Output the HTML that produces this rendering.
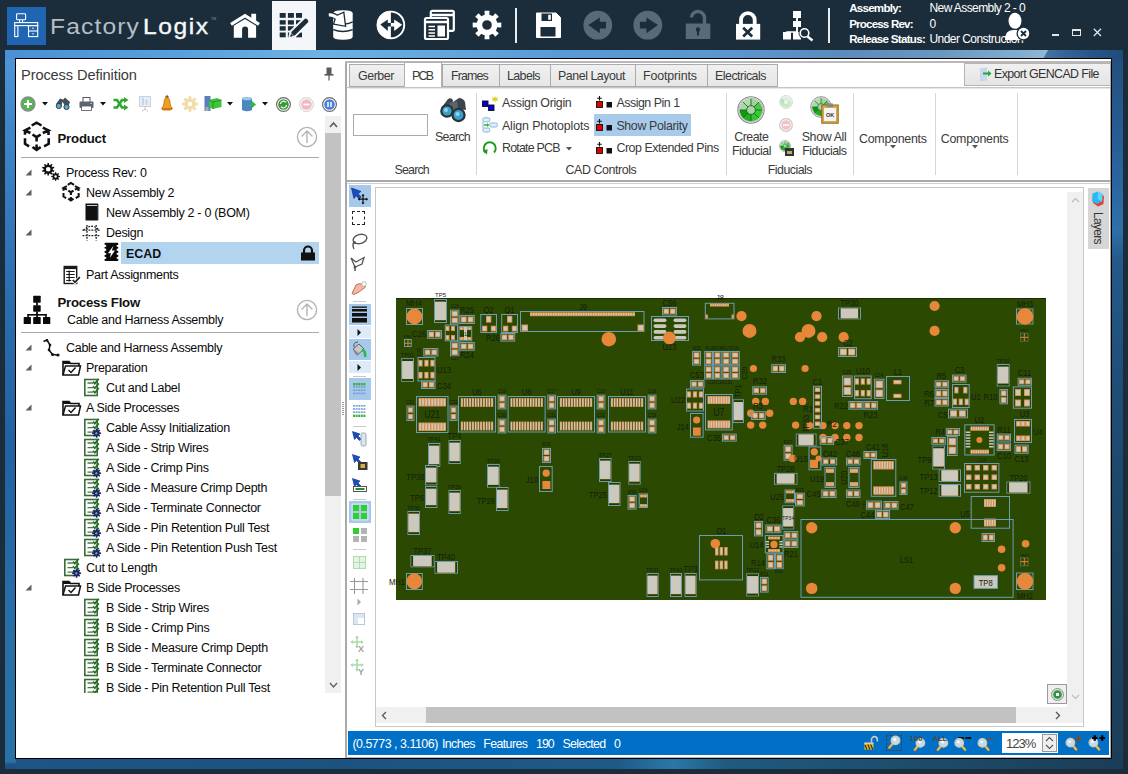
<!DOCTYPE html>
<html><head><meta charset="utf-8"><style>
*{margin:0;padding:0;box-sizing:border-box}
html,body{width:1128px;height:774px;overflow:hidden;background:#1b2d3b;font-family:"Liberation Sans",sans-serif;position:relative}
.a{position:absolute}
.t{position:absolute;white-space:nowrap;line-height:1}
svg{overflow:visible}
</style></head><body>
<div class="a" style="left:7px;top:7px;width:39px;height:38px;background:#1f65b2"></div>
<svg class="a" style="left:7px;top:7px" width="39" height="38" viewBox="0 0 39 38">
<g fill="none" stroke="#fff" stroke-width="1.1">
<rect x="9.6" y="6.7" width="9" height="6" rx="0.8"/>
<path d="M12.6 12.7v2.6M15.6 12.7v2.6"/>
<rect x="7.7" y="15.6" width="23" height="3"/>
<rect x="7.7" y="18.6" width="3.2" height="11"/>
<rect x="21.5" y="18.6" width="9.2" height="11"/>
<path d="M21.5 24h9.2"/>
</g>
<path d="M25 21.2h2M25 26.8h2" stroke="#cde" stroke-width="1"/>
</svg>
<div class="t" style="left:49.5px;top:16px;font-size:21.8px;color:#b4bec6;transform:scaleX(1.13);transform-origin:0 0;letter-spacing:1.0px">Factory</div>
<div class="t" style="left:143px;top:16px;font-size:21.8px;color:#f6f8fa;transform:scaleX(1.13);transform-origin:0 0;letter-spacing:1.35px;-webkit-text-stroke:0.35px #f6f8fa">Logix</div>
<div class="t" style="left:211px;top:18px;font-size:3.5px;color:#8a98a4">TM</div>
<div class="a" style="left:272px;top:1px;width:44px;height:49px;background:#f5f6f9"></div>
<svg class="a" style="left:229px;top:12px" width="32" height="28" viewBox="0 0 32 28">
<path d="M2 12.3 L16 3.6 L30 12.3" fill="none" stroke="#1b2d3b" stroke-width="6"/>
<path d="M22.3 1.8 H27.1 V10 L22.3 7.5 Z" fill="#fff"/>
<path d="M2 12.3 L16 3.6 L30 12.3" fill="none" stroke="#fff" stroke-width="3.3"/>
<path d="M4.8 25.7 V13.8 L16 6.9 L27.1 13.8 V25.7 H19.1 V17.5 A3 3 0 0 0 13.1 17.5 V25.7 Z" fill="#fff"/>
</svg>
<svg class="a" style="left:279px;top:12px" width="31" height="27" viewBox="0 0 31 27">
<rect x="0.7" y="1" width="6" height="4.8" fill="#1b2d3b"/><rect x="8.9" y="1" width="6" height="4.8" fill="#1b2d3b"/><rect x="17.0" y="1" width="6" height="4.8" fill="#1b2d3b"/><rect x="0.7" y="8.2" width="6" height="4.4" fill="#1b2d3b"/><rect x="8.9" y="8.2" width="6" height="4.4" fill="#1b2d3b"/><rect x="17.0" y="8.2" width="6" height="4.4" fill="#1b2d3b"/><rect x="0.7" y="14.2" width="6" height="4.4" fill="#1b2d3b"/><rect x="8.9" y="14.2" width="6" height="4.4" fill="#1b2d3b"/><rect x="17.0" y="14.2" width="6" height="4.4" fill="#1b2d3b"/><rect x="0.7" y="20.5" width="6" height="4.8" fill="#1b2d3b"/><rect x="8.9" y="20.5" width="6" height="4.8" fill="#1b2d3b"/><rect x="17.0" y="20.5" width="6" height="4.8" fill="#1b2d3b"/>
<path d="M11 24.9 L12.2 19.6 L26 6.5 L29.6 10.2 L16 23.5 Z" fill="#f5f6f9" stroke="#f5f6f9" stroke-width="3.2" stroke-linejoin="round"/>
<path d="M11 24.9 L12.6 19.8 L25.4 7.2 Q26.8 6 28 7.2 L28.8 8 Q30 9.3 28.8 10.5 L16 23.2 Z" fill="#1b2d3b"/>
<path d="M12.2 21.5 L14.4 23.7" stroke="#f5f6f9" stroke-width="0.8"/>
</svg>
<svg class="a" style="left:328px;top:9px" width="27" height="32" viewBox="0 0 27 32">
<path d="M5.2 4.2 Q5.2 1.2 15 1.2 Q24.7 1.2 24.7 4.2 V27.8 Q24.7 30.8 15 30.8 Q5.2 30.8 5.2 27.8 Z" fill="#fff"/>
<path d="M5.2 20.6 Q15 24.2 24.7 20.6" fill="none" stroke="#1b2d3b" stroke-width="1.5"/>
<path d="M17 15 Q21 14.6 24.7 12.8" fill="none" stroke="#1b2d3b" stroke-width="1.4"/>
<path d="M1.2 5.8 Q6 5.5 10.5 10" fill="none" stroke="#1b2d3b" stroke-width="5.6"/>
<path d="M5.5 15.2 L17.6 17.3 L15.8 3.2 L8.2 6.6 Z" fill="#fff" stroke="#1b2d3b" stroke-width="1.3" stroke-linejoin="miter"/>
<path d="M0.8 5.8 Q6 5.5 10.2 9.8" fill="none" stroke="#fff" stroke-width="3.2"/>
</svg>
<svg class="a" style="left:375px;top:9px" width="32" height="32" viewBox="0 0 32 32">
<path d="M15.9 1.8 A14.15 14.15 0 0 0 15.9 30.1 Z" fill="#fff"/>
<circle cx="15.9" cy="15.95" r="13.3" fill="none" stroke="#fff" stroke-width="1.9"/>
<path d="M5.3 15.6 L12.8 10.4 V14 H15.9 V17.5 H12.8 V21.9 Z" fill="#1b2d3b"/>
<path d="M27.2 15.8 L19.2 10.4 V14 H15.9 V17.5 H19.2 V21.9 Z" fill="#fff"/>
</svg>
<svg class="a" style="left:424px;top:10px" width="31" height="30" viewBox="0 0 31 30">
<rect x="6.8" y="0.8" width="23" height="20" rx="1.5" fill="none" stroke="#fff" stroke-width="2.2"/>
<path d="M6 5 H30" stroke="#fff" stroke-width="2.5"/>
<rect x="1" y="8" width="23" height="21" rx="1.5" fill="#1b2d3b" stroke="#fff" stroke-width="2.2"/>
<path d="M1 12 H24" stroke="#fff" stroke-width="2.5"/>
<path d="M4.5 16.5h6.5M4.5 19.8h6.5M4.5 23h6.5M4.5 26h6.5" stroke="#fff" stroke-width="1.5"/>
<rect x="13.5" y="15.5" width="7.5" height="11" fill="#fff"/>
</svg>
<svg class="a" style="left:472px;top:10px" width="30" height="30" viewBox="0 0 30 30">
<path fill-rule="evenodd" d="M12.71,4.75 L12.55,0.71 L17.45,0.71 L17.29,4.75 L20.03,5.79 L20.63,6.13 L23.37,3.16 L26.84,6.63 L23.87,9.37 L25.08,12.04 L25.25,12.71 L29.29,12.55 L29.29,17.45 L25.25,17.29 L24.21,20.03 L23.87,20.63 L26.84,23.37 L23.37,26.84 L20.63,23.87 L17.96,25.08 L17.29,25.25 L17.45,29.29 L12.55,29.29 L12.71,25.25 L9.97,24.21 L9.37,23.87 L6.63,26.84 L3.16,23.37 L6.13,20.63 L4.92,17.96 L4.75,17.29 L0.71,17.45 L0.71,12.55 L4.75,12.71 L5.79,9.97 L6.13,9.37 L3.16,6.63 L6.63,3.16 L9.37,6.13 L12.04,4.92 Z M15 10.2 A4.8 4.8 0 1 0 15 19.8 A4.8 4.8 0 1 0 15 10.2 Z" fill="#fff"/>
</svg>
<div class="a" style="left:515px;top:8px;width:1.5px;height:35px;background:#e8ecef"></div>
<div class="a" style="left:828px;top:8px;width:1.5px;height:35px;background:#e8ecef"></div>
<svg class="a" style="left:535px;top:12px" width="27" height="27" viewBox="0 0 27 27">
<path d="M1.5 1 H21 L25.5 5.5 V25.5 H1.5 Z" fill="#fff" stroke="#fff" stroke-linejoin="round"/>
<rect x="6.5" y="1.5" width="10.5" height="7.5" fill="#1b2d3b"/>
<rect x="13.2" y="2.8" width="2.6" height="5" fill="#fff"/>
<rect x="5.5" y="15" width="15" height="9.5" fill="#1b2d3b"/>
</svg>
<svg class="a" style="left:583px;top:10px" width="30" height="30" viewBox="0 0 30 30">
<circle cx="14.8" cy="15.2" r="14.4" fill="#576a75"/>
<path d="M5.4 15 L16.8 7.4 V11.8 H23 V18.6 H16.8 V23.3 Z" fill="#1b2d3b"/>
</svg>
<svg class="a" style="left:633px;top:10px" width="30" height="30" viewBox="0 0 30 30">
<circle cx="14.8" cy="15.2" r="14.4" fill="#576a75"/>
<path d="M24.9 15 L13.4 7.4 V11.8 H6.9 V18.6 H13.4 V23.3 Z" fill="#1b2d3b"/>
</svg>
<svg class="a" style="left:685px;top:10px" width="26" height="30" viewBox="0 0 26 30">
<path d="M6.3 7.5 A6.6 6.6 0 0 1 19.5 8.8 V14" fill="none" stroke="#576a75" stroke-width="3.4"/>
<rect x="0.8" y="13.5" width="24.5" height="15.5" fill="#576a75"/>
<circle cx="13" cy="19.5" r="2.2" fill="#1b2d3b"/>
<rect x="12" y="20" width="2" height="5.5" fill="#1b2d3b"/>
</svg>
<svg class="a" style="left:735px;top:10px" width="27" height="30" viewBox="0 0 27 30">
<path d="M6 14.5 V10.05 A6.85 6.85 0 0 1 19.7 10.05 V14.5" fill="none" stroke="#fff" stroke-width="3.8"/>
<rect x="1" y="13.9" width="24.2" height="15.7" fill="#fff"/>
<path d="M8.2 17.8 L17.2 26.4 M17.2 17.8 L8.2 26.4" stroke="#1b2d3b" stroke-width="2.7"/>
</svg>
<svg class="a" style="left:782px;top:10px" width="33" height="32" viewBox="0 0 33 32">
<rect x="11" y="1" width="8" height="7" fill="#fff"/>
<rect x="14" y="8" width="2" height="3" fill="#fff"/>
<rect x="11" y="11" width="8" height="6" fill="#fff"/>
<rect x="14" y="17" width="2" height="5" fill="#fff"/>
<path d="M5 24 V22 H15" fill="none" stroke="#fff" stroke-width="1.5"/>
<rect x="1" y="22" width="8" height="7.5" fill="#fff"/>
<rect x="11" y="22" width="8" height="7.5" fill="#fff"/>
<circle cx="22.5" cy="23" r="6" fill="#1b2d3b"/>
<circle cx="22.5" cy="23" r="4.3" fill="none" stroke="#fff" stroke-width="1.6"/>
<path d="M25.5 26.5 L30.5 30.5" stroke="#fff" stroke-width="2.4"/>
</svg>
<div class="t" style="left:849.2px;top:2.00px;font-size:11.6px;color:#fff;font-weight:bold;letter-spacing:-0.760px;">Assembly:</div>
<div class="t" style="left:849.2px;top:18.00px;font-size:11.6px;color:#fff;font-weight:bold;letter-spacing:-0.831px;">Process Rev:</div>
<div class="t" style="left:849.2px;top:33.00px;font-size:11.6px;color:#fff;font-weight:bold;letter-spacing:-0.690px;">Release Status:</div>
<div class="t" style="left:929.5px;top:2.00px;font-size:12px;color:#fff;letter-spacing:-0.585px;">New Assembly 2 - 0</div>
<div class="t" style="left:929.5px;top:18.00px;font-size:12px;color:#fff;">0</div>
<div class="t" style="left:929.5px;top:33.00px;font-size:12px;color:#fff;letter-spacing:-0.549px;">Under Construction</div>
<svg class="a" style="left:1000px;top:11.3px" width="32" height="32" viewBox="0 0 32 32">
<ellipse cx="15" cy="9.8" rx="6.5" ry="8" fill="#fff"/>
<path d="M5 29 Q5 19 13 19 L17 19 Q21 19 22 25 L22 29 Z" fill="#fff"/>
<circle cx="23.5" cy="22.5" r="7" fill="#1b2d3b"/>
<circle cx="23.5" cy="22.5" r="5.7" fill="#fff"/>
<path d="M21 20 L26 25 M26 20 L21 25" stroke="#1b2d3b" stroke-width="1.8"/>
</svg>
<div class="a" style="left:1052px;top:34px;width:7px;height:2px;background:#e4e4e4"></div>
<div class="a" style="left:1072px;top:29px;width:9px;height:7px;border:1.2px solid #e4e4e4;border-top-width:2px"></div>
<svg class="a" style="left:1093px;top:28px" width="9" height="9" viewBox="0 0 9 9"><path d="M0.8 0.8 L8 8 M8 0.8 L0.8 8" stroke="#e4e4e4" stroke-width="1.3"/></svg>
<div class="a" style="left:5px;top:50px;width:11px;height:719px;background:linear-gradient(180deg,#4f97da 0px,#3f86c9 80px,#2b6cad 250px,#2262a2 400px,#286ea6 560px,#2a72a6 712px,#1d5586 714px,#1b5080 719px)"></div>
<div class="a" style="left:5px;top:50px;width:1118px;height:9px;background:linear-gradient(90deg,#4a90d6 0%,#58a0dc 15%,#6cb2e4 28%,#62a6dc 40%,#5a9ad6 50%,#5c96cc 65%,#5a8cbc 75%,#6a98c2 84%,#84aed0 91%,#92bad8 93.5%)"></div>
<div class="a" style="left:1040px;top:50px;width:83px;height:9px;clip-path:polygon(8px 0,83px 0,83px 9px,3px 9px);background:linear-gradient(90deg,#4a76a6 0%,#356596 30%,#285688 60%,#204c7c 100%)"></div>
<div class="a" style="left:1111px;top:59px;width:12px;height:710px;background:linear-gradient(180deg,#22507e 0px,#2a64a0 120px,#2e70aa 170px,#235a8a 200px,#1f4e78 320px,#1c4462 500px,#1b3e58 710px)"></div>
<div class="a" style="left:16px;top:759px;width:1095px;height:10px;background:linear-gradient(90deg,#1d5586 0%,#1c5280 30%,#1e5a88 55%,#2a78a8 60%,#1f5a80 65%,#1c4a68 85%,#1b3e58 100%)"></div>
<div class="a" style="left:15px;top:58px;width:1097px;height:701px;background:#fff;border:1px solid #000"></div>
<div class="t" style="left:21px;top:68.0px;font-size:14.6px;color:#3a3a3a;letter-spacing:-0.1px">Process Definition</div>
<svg class="a" style="left:324px;top:67px" width="10" height="14" viewBox="0 0 10 14">
<rect x="2.5" y="0.5" width="5" height="7" fill="#5a5a5a"/>
<rect x="0.5" y="7" width="9" height="1.6" fill="#5a5a5a"/>
<rect x="4.4" y="8" width="1.2" height="5.5" fill="#5a5a5a"/>
</svg>
<svg class="a" style="left:20px;top:96px" width="16" height="16" viewBox="0 0 16 16">
<circle cx="8" cy="8" r="7" fill="#55b455" stroke="#8a8a8a" stroke-width="1.3"/>
<path d="M8 4 V12 M4 8 H12" stroke="#fff" stroke-width="2.2"/></svg>
<svg class="a" style="left:42px;top:102px" width="6" height="4" viewBox="0 0 6 4"><path d="M0 0H6L3 3.5Z" fill="#111"/></svg>
<svg class="a" style="left:55px;top:97px" width="16" height="13" viewBox="0 0 16 13">
<path d="M1 7 L5 1.5 L8 2.5 L6 10 Z M7 4 L10 0.5 L15 5 L12 12 Z" fill="#44505a"/>
<circle cx="3.8" cy="9" r="2.6" fill="#5aa8d8" stroke="#333" stroke-width="0.9"/>
<circle cx="11.5" cy="10" r="2.6" fill="#5aa8d8" stroke="#333" stroke-width="0.9"/>
</svg>
<svg class="a" style="left:79px;top:97px" width="15" height="14" viewBox="0 0 15 14">
<rect x="4" y="0.5" width="7" height="5" fill="#fff" stroke="#555"/>
<rect x="0.5" y="4.5" width="14" height="6.5" rx="1" fill="#5c6670"/>
<rect x="2.5" y="9" width="10" height="4.5" fill="#fff" stroke="#555" stroke-width="0.8"/>
<rect x="11" y="6" width="2" height="1" fill="#6cf"/>
</svg>
<svg class="a" style="left:100px;top:102px" width="6" height="4" viewBox="0 0 6 4"><path d="M0 0H6L3 3.5Z" fill="#111"/></svg>
<svg class="a" style="left:113px;top:97px" width="16" height="14" viewBox="0 0 16 14">
<path d="M0.5 3 H4 L9 10.5 H12" fill="none" stroke="#2ea82e" stroke-width="2.6"/>
<path d="M0.5 10.5 H4 L9 3 H12" fill="none" stroke="#2ea82e" stroke-width="2.6"/>
<path d="M11 0 L15.5 3 L11 6Z M11 7.5 L15.5 10.5 L11 13.5Z" fill="#2ea82e"/>
</svg>
<svg class="a" style="left:139px;top:96px" width="12" height="16" viewBox="0 0 12 16">
<rect x="0.5" y="0.5" width="11" height="10" fill="#e8eef6" stroke="#c6d2de"/>
<rect x="3" y="2" width="2" height="7" fill="#c6d6e8"/><rect x="6.5" y="3.5" width="2" height="5.5" fill="#c6d6e8"/>
<path d="M6 10.5 V13 M6 13 L3 15.5 M6 13 L9 15.5" stroke="#c6c6c6" stroke-width="1"/>
</svg>
<svg class="a" style="left:161px;top:95px" width="12" height="16" viewBox="0 0 12 16">
<circle cx="6" cy="2" r="1.7" fill="#9a5a10"/>
<path d="M6 2.5 Q3 3 3 8 Q3 11.5 0.5 13.5 H11.5 Q9 11.5 9 8 Q9 3 6 2.5Z" fill="#f0a020" stroke="#b86a10" stroke-width="0.8"/>
<ellipse cx="6" cy="14.3" rx="5.3" ry="1.3" fill="#d07810"/>
</svg>
<svg class="a" style="left:182px;top:95.5px" width="16" height="16" viewBox="0 0 16 16"><path fill-rule="evenodd" d="M6.37,2.75 L6.80,0.09 L9.20,0.09 L9.63,2.75 L10.57,3.14 L12.75,1.56 L14.44,3.25 L12.86,5.43 L13.25,6.37 L15.91,6.80 L15.91,9.20 L13.25,9.63 L12.86,10.57 L14.44,12.75 L12.75,14.44 L10.57,12.86 L9.63,13.25 L9.20,15.91 L6.80,15.91 L6.37,13.25 L5.43,12.86 L3.25,14.44 L1.56,12.75 L3.14,10.57 L2.75,9.63 L0.09,9.20 L0.09,6.80 L2.75,6.37 L3.14,5.43 L1.56,3.25 L3.25,1.56 L5.43,3.14 Z M8 5.8 A2.2 2.2 0 1 0 8 10.2 A2.2 2.2 0 1 0 8 5.8Z" fill="#f3dcac"/></svg>
<svg class="a" style="left:204px;top:96px" width="18" height="16" viewBox="0 0 18 16">
<rect x="0.5" y="0" width="6" height="15" fill="#5a7fc0"/>
<rect x="1.5" y="11" width="3" height="4" fill="#aab"/>
<path d="M5 4 L13 2 L17.5 4 V11 L9 13 L5 11 Z" fill="#3cc43c"/>
<path d="M5 4 L9 6 L17.5 4 M9 6 V13" stroke="#1e8a1e" stroke-width="0.8" fill="none"/>
</svg>
<svg class="a" style="left:227px;top:102px" width="6" height="4" viewBox="0 0 6 4"><path d="M0 0H6L3 3.5Z" fill="#111"/></svg>
<svg class="a" style="left:241px;top:96px" width="15" height="16" viewBox="0 0 15 16">
<path d="M1 2.5 Q6 0 11 2.5 V14 Q6 16.5 1 14Z" fill="#4a86c0"/>
<ellipse cx="6" cy="2.5" rx="5" ry="1.8" fill="#9cc6ea"/>
<path d="M6 10 L11 7 L11 5 L15 8.5 L11 12 L11 10 Z" fill="#2cb84a"/>
</svg>
<svg class="a" style="left:262px;top:102px" width="6" height="4" viewBox="0 0 6 4"><path d="M0 0H6L3 3.5Z" fill="#111"/></svg>
<svg class="a" style="left:275.5px;top:96.5px" width="15" height="15" viewBox="0 0 15 15">
<circle cx="7.5" cy="7.5" r="6.9" fill="#fff" stroke="#6a6a6a" stroke-width="1.2"/>
<circle cx="7.5" cy="7.5" r="5.3" fill="#3a9a3a"/>
<path d="M4.5 7 A3 3 0 0 1 10 5.5 M10.5 8 A3 3 0 0 1 5 9.5" fill="none" stroke="#fff" stroke-width="1.2"/>
</svg>
<svg class="a" style="left:298.5px;top:96.5px" width="15" height="15" viewBox="0 0 15 15">
<circle cx="7.5" cy="7.5" r="6.9" fill="#fff" stroke="#d8d8d8" stroke-width="1.2"/>
<circle cx="7.5" cy="7.5" r="5.3" fill="#f2b8c4"/>
<path d="M4.5 7.5 H10.5" stroke="#fff" stroke-width="1.8"/>
</svg>
<svg class="a" style="left:321.5px;top:96.5px" width="15" height="15" viewBox="0 0 15 15">
<circle cx="7.5" cy="7.5" r="6.9" fill="#fff" stroke="#6a6a6a" stroke-width="1.2"/>
<circle cx="7.5" cy="7.5" r="5.3" fill="#4a7ee0"/>
<path d="M6 5 V10 M9 5 V10" stroke="#fff" stroke-width="1.5"/>
</svg>
<svg class="a" style="left:18.00px;top:118.00px" width="40.00" height="40.00" viewBox="0 0 40 40">
<path d="M13.7 7.5 L18.6 4.65 L23.5 7.5 M12.4 9.6 L7 12.4 L12.4 15 M7 12.4 V16.8 M24.8 9.6 L30.5 12.4 L24.8 15 M30.5 12.4 V17 M14.5 16.5 L18.6 19.1 L22.7 16.5 M18.6 19.1 V23.5 M7 20.2 V25.8 L11.1 28.4 M30.7 20.2 V25.8 L26.1 28.4 M18.6 26.4 V31.5 M14.5 29 L18.6 32 L22.7 29" fill="none" stroke="#111" stroke-width="2.6" stroke-linejoin="miter"/>
</svg>
<div class="t" style="left:57.5px;top:132.0px;font-size:13.2px;font-weight:bold;color:#111;letter-spacing:-0.2px">Product</div>
<svg class="a" style="left:296px;top:126px" width="22" height="22" viewBox="0 0 22 22">
<circle cx="11" cy="11" r="9.6" fill="none" stroke="#b4b4b4" stroke-width="1.4"/>
<path d="M11 17 V5 M5.5 10.5 L11 5 L16.5 10.5" fill="none" stroke="#b4b4b4" stroke-width="1.4"/>
</svg>
<div class="a" style="left:21px;top:157px;width:298px;height:1px;background:#a8a8a8"></div>
<svg class="a" style="left:24.5px;top:168.5px" width="7" height="7" viewBox="0 0 7 7"><path d="M6.5 0.5 V6.5 H0.5 Z" fill="#606060"/></svg>
<svg class="a" style="left:42px;top:163px" width="18" height="17" viewBox="0 0 18 17"><path fill-rule="evenodd" d="M5.34,1.78 L5.49,0.04 L6.91,0.04 L7.06,1.78 L8.16,2.14 L9.30,0.82 L10.45,1.65 L9.55,3.15 L10.23,4.08 L11.93,3.69 L12.37,5.04 L10.76,5.72 L10.76,6.88 L12.37,7.56 L11.93,8.91 L10.23,8.52 L9.55,9.45 L10.45,10.95 L9.30,11.78 L8.16,10.46 L7.06,10.82 L6.91,12.56 L5.49,12.56 L5.34,10.82 L4.24,10.46 L3.10,11.78 L1.95,10.95 L2.85,9.45 L2.17,8.52 L0.47,8.91 L0.03,7.56 L1.64,6.88 L1.64,5.72 L0.03,5.04 L0.47,3.69 L2.17,4.08 L2.85,3.15 L1.95,1.65 L3.10,0.82 L4.24,2.14 Z M6.2 4.0 A2.3 2.3 0 1 0 6.2 8.6 A2.3 2.3 0 1 0 6.2 4.0 Z" fill="#111"/><path fill-rule="evenodd" d="M12.88,10.49 L12.98,9.14 L14.22,9.14 L14.32,10.49 L15.22,10.86 L16.24,9.98 L17.12,10.86 L16.24,11.88 L16.61,12.78 L17.96,12.88 L17.96,14.12 L16.61,14.22 L16.24,15.12 L17.12,16.14 L16.24,17.02 L15.22,16.14 L14.32,16.51 L14.22,17.86 L12.98,17.86 L12.88,16.51 L11.98,16.14 L10.96,17.02 L10.08,16.14 L10.96,15.12 L10.59,14.22 L9.24,14.12 L9.24,12.88 L10.59,12.78 L10.96,11.88 L10.08,10.86 L10.96,9.98 L11.98,10.86 Z M13.6 12.25 A1.25 1.25 0 1 0 13.6 14.75 A1.25 1.25 0 1 0 13.6 12.25 Z" fill="#111"/></svg>
<div class="t" style="left:66px;top:167.0px;font-size:12.5px;color:#0a0a0a;letter-spacing:-0.3px">Process Rev: 0</div>
<svg class="a" style="left:24.5px;top:188.5px" width="7" height="7" viewBox="0 0 7 7"><path d="M6.5 0.5 V6.5 H0.5 Z" fill="#606060"/></svg>
<svg class="a" style="left:59.44px;top:179.86px" width="25.60" height="25.60" viewBox="0 0 40 40">
<path d="M13.7 7.5 L18.6 4.65 L23.5 7.5 M12.4 9.6 L7 12.4 L12.4 15 M7 12.4 V16.8 M24.8 9.6 L30.5 12.4 L24.8 15 M30.5 12.4 V17 M14.5 16.5 L18.6 19.1 L22.7 16.5 M18.6 19.1 V23.5 M7 20.2 V25.8 L11.1 28.4 M30.7 20.2 V25.8 L26.1 28.4 M18.6 26.4 V31.5 M14.5 29 L18.6 32 L22.7 29" fill="none" stroke="#111" stroke-width="3.2" stroke-linejoin="miter"/>
</svg>
<div class="t" style="left:86px;top:187.0px;font-size:12.5px;color:#0a0a0a;letter-spacing:-0.3px">New Assembly 2</div>
<svg class="a" style="left:83.5px;top:202.5px" width="16" height="18" viewBox="0 0 16 18">
<rect x="1.5" y="0.5" width="12.5" height="17" fill="#111"/>
<path d="M3 2.5 H13" stroke="#fff" stroke-width="0.8"/>
<path d="M14 1 V17" stroke="#555" stroke-width="1"/>
</svg>
<div class="t" style="left:106px;top:207.0px;font-size:12.5px;color:#0a0a0a;letter-spacing:-0.3px">New Assembly 2 - 0 (BOM)</div>
<svg class="a" style="left:24.5px;top:228.5px" width="7" height="7" viewBox="0 0 7 7"><path d="M6.5 0.5 V6.5 H0.5 Z" fill="#606060"/></svg>
<svg class="a" style="left:81.5px;top:223.3px" width="19" height="18" viewBox="0 0 19 18">
<g stroke="#1a1a1a" stroke-width="1.3" fill="none" stroke-dasharray="1.8 1.2">
<path d="M1.5 7.5 Q9.3 -1 17.5 7.5"/>
<path d="M5 2 V17.5 M14.2 2 V17.5"/>
<path d="M0.5 12.7 H18.5 M0.5 7.2 H18.5"/>
</g>
</svg>
<div class="t" style="left:106px;top:227.0px;font-size:12.5px;color:#0a0a0a;letter-spacing:-0.3px">Design</div>
<div class="a" style="left:121px;top:242px;width:198px;height:22px;background:#b3d4ef"></div>
<svg class="a" style="left:103.5px;top:243px" width="15" height="19" viewBox="0 0 15 19">
<rect x="2.2" y="0" width="10.5" height="17.9" fill="#0a0a0a"/>
<rect x="0.5" y="-0.15" width="13.9" height="2.1" rx="1" fill="#0a0a0a"/><rect x="0.5" y="3.75" width="13.9" height="2.1" rx="1" fill="#0a0a0a"/><rect x="0.5" y="7.80" width="13.9" height="2.1" rx="1" fill="#0a0a0a"/><rect x="0.5" y="11.80" width="13.9" height="2.1" rx="1" fill="#0a0a0a"/><rect x="0.5" y="15.85" width="13.9" height="2.1" rx="1" fill="#0a0a0a"/>
<path d="M9.4 2.8 L4 10.2 H7 L5.8 15 L11 7.4 H7.9 Z" fill="#fff"/>
</svg>
<div class="t" style="left:126px;top:248.0px;font-size:12.4px;font-weight:bold;color:#111">ECAD</div>
<svg class="a" style="left:300px;top:245px" width="16" height="16" viewBox="0 0 16 16">
<path d="M4 8 V5.5 A4 4 0 0 1 12 5.5 V8" fill="none" stroke="#111" stroke-width="2.2"/>
<rect x="1" y="7.5" width="14" height="8" fill="#111"/>
</svg>
<svg class="a" style="left:63px;top:265.5px" width="18" height="18" viewBox="0 0 18 18">
<rect x="1.2" y="0.5" width="12.5" height="17" fill="#fff" stroke="#1a1a1a" stroke-width="1.4"/>
<rect x="1.2" y="0.5" width="12.5" height="2.6" fill="#1a1a1a"/>
<path d="M3.2 5.5h8.5M3.2 8.5h8.5M3.2 11.5h8.5M3.2 14.5h5M6.2 4.5V15.5" stroke="#1a1a1a" stroke-width="1.2"/>
<path d="M9.8 14 L12 16.3 L16.8 11.2" fill="none" stroke="#fff" stroke-width="3.4"/>
<path d="M9.8 14 L12 16.3 L16.8 11.2" fill="none" stroke="#1a1a1a" stroke-width="1.7"/>
</svg>
<div class="t" style="left:86px;top:269.0px;font-size:12.5px;color:#0a0a0a;letter-spacing:-0.3px">Part Assignments</div>
<svg class="a" style="left:23px;top:295px" width="28" height="31" viewBox="0 0 28 31">
<g fill="#0a0a0a">
<rect x="10.2" y="0.7" width="7.5" height="7" rx="0.6"/>
<rect x="13.1" y="7.5" width="1.8" height="3"/>
<rect x="10.2" y="10.2" width="7.5" height="6.5" rx="0.6"/>
<rect x="13.1" y="16.5" width="1.8" height="6"/>
<rect x="4.3" y="19" width="19.4" height="1.6"/>
<rect x="4.3" y="19" width="1.6" height="3.5"/>
<rect x="22.1" y="19" width="1.6" height="3.5"/>
<rect x="0.7" y="22.1" width="7.2" height="7" rx="0.6"/>
<rect x="10.2" y="22.1" width="7.5" height="7" rx="0.6"/>
<rect x="20" y="22.1" width="7.3" height="7" rx="0.6"/>
</g>
</svg>
<div class="t" style="left:57.4px;top:296.0px;font-size:13.2px;font-weight:bold;color:#111;letter-spacing:-0.2px">Process Flow</div>
<div class="t" style="left:67px;top:314.0px;font-size:12.5px;color:#0a0a0a;letter-spacing:-0.3px">Cable and Harness Assembly</div>
<svg class="a" style="left:296px;top:299px" width="22" height="22" viewBox="0 0 22 22">
<circle cx="11" cy="11" r="9.6" fill="none" stroke="#b4b4b4" stroke-width="1.4"/>
<path d="M11 17 V5 M5.5 10.5 L11 5 L16.5 10.5" fill="none" stroke="#b4b4b4" stroke-width="1.4"/>
</svg>
<div class="a" style="left:21px;top:332px;width:298px;height:1px;background:#a8a8a8"></div>
<div class="a" style="left:16px;top:336px;width:305px;height:357px;overflow:hidden">
<svg class="a" style="left:8.5px;top:8.0px" width="7" height="7" viewBox="0 0 7 7"><path d="M6.5 0.5 V6.5 H0.5 Z" fill="#606060"/></svg>
<svg class="a" style="left:26px;top:2.5px" width="18" height="18" viewBox="0 0 18 18">
<path d="M1.5 2.5 L5 1 L8 6 L7 11 L10.5 15.5 L16.5 16" fill="none" stroke="#111" stroke-width="1.5"/>
<circle cx="8" cy="6" r="1.3" fill="#111"/><circle cx="7" cy="11" r="1.3" fill="#111"/><circle cx="10.5" cy="15.5" r="1.5" fill="#111"/><circle cx="16" cy="16" r="1.6" fill="#111"/><circle cx="5" cy="1.2" r="1.2" fill="#111"/>
</svg>
<div class="t" style="left:50px;top:6.0px;font-size:12.5px;color:#0a0a0a;letter-spacing:-0.3px">Cable and Harness Assembly</div>
<svg class="a" style="left:8.5px;top:28.0px" width="7" height="7" viewBox="0 0 7 7"><path d="M6.5 0.5 V6.5 H0.5 Z" fill="#606060"/></svg>
<svg class="a" style="left:46px;top:23.5px" width="19" height="16" viewBox="0 0 19 16">
<path d="M1 15 V1.5 H7 L8.5 3.5 H17 V6" fill="none" stroke="#111" stroke-width="1.6"/>
<path d="M1.2 2 H7 L8.5 4 H1.2 Z" fill="#111"/>
<path d="M3.5 6 H18.5 L16.5 15 H1 Z" fill="#fff" stroke="#111" stroke-width="1.5"/>
<path d="M6.5 10 L9 12.5 L13.5 7.5" fill="none" stroke="#111" stroke-width="1.4"/>
</svg>
<div class="t" style="left:70px;top:26.0px;font-size:12.5px;color:#0a0a0a;letter-spacing:-0.3px">Preparation</div>
<svg class="a" style="left:67px;top:41.5px" width="18" height="19" viewBox="0 0 18 19">
<rect x="1.8" y="1.5" width="12.4" height="16" fill="#fff" stroke="#3b6a3b" stroke-width="1.6"/>
<path d="M4.5 5h5.5M4.5 9.6h5.5M4.5 14.2h5.5" stroke="#4a784a" stroke-width="1.3"/>
<path d="M10 3.6 L11.8 5.6 L15.8 0.8 M10 8.2 L11.8 10.2 L15.8 5.4 M10 12.8 L11.8 14.8 L15.8 10" fill="none" stroke="#237023" stroke-width="1.7"/>

</svg>
<div class="t" style="left:90px;top:46.0px;font-size:12.5px;color:#0a0a0a;letter-spacing:-0.3px">Cut and Label</div>
<svg class="a" style="left:8.5px;top:68.0px" width="7" height="7" viewBox="0 0 7 7"><path d="M6.5 0.5 V6.5 H0.5 Z" fill="#606060"/></svg>
<svg class="a" style="left:46px;top:63.5px" width="19" height="16" viewBox="0 0 19 16">
<path d="M1 15 V1.5 H7 L8.5 3.5 H17 V6" fill="none" stroke="#111" stroke-width="1.6"/>
<path d="M1.2 2 H7 L8.5 4 H1.2 Z" fill="#111"/>
<path d="M3.5 6 H18.5 L16.5 15 H1 Z" fill="#fff" stroke="#111" stroke-width="1.5"/>
<path d="M6.5 10 L9 12.5 L13.5 7.5" fill="none" stroke="#111" stroke-width="1.4"/>
</svg>
<div class="t" style="left:70px;top:66.0px;font-size:12.5px;color:#0a0a0a;letter-spacing:-0.3px">A Side Processes</div>
<svg class="a" style="left:67px;top:81.5px" width="18" height="19" viewBox="0 0 18 19">
<rect x="1.8" y="1.5" width="12.4" height="16" fill="#fff" stroke="#3b6a3b" stroke-width="1.6"/>
<path d="M4.5 5h5.5M4.5 9.6h5.5M4.5 14.2h5.5" stroke="#4a784a" stroke-width="1.3"/>
<path d="M10 3.6 L11.8 5.6 L15.8 0.8 M10 8.2 L11.8 10.2 L15.8 5.4 M10 12.8 L11.8 14.8 L15.8 10" fill="none" stroke="#237023" stroke-width="1.7"/>
<path fill-rule="evenodd" d="M12.71,12.33 L12.84,10.76 L14.36,10.76 L14.49,12.33 L15.00,12.55 L16.20,11.53 L17.27,12.60 L16.25,13.80 L16.47,14.31 L18.04,14.44 L18.04,15.96 L16.47,16.09 L16.25,16.60 L17.27,17.80 L16.20,18.87 L15.00,17.85 L14.49,18.07 L14.36,19.64 L12.84,19.64 L12.71,18.07 L12.20,17.85 L11.00,18.87 L9.93,17.80 L10.95,16.60 L10.73,16.09 L9.16,15.96 L9.16,14.44 L10.73,14.31 L10.95,13.80 L9.93,12.60 L11.00,11.53 L12.20,12.55 Z M13.6 13.899999999999999 A1.3 1.3 0 1 0 13.6 16.5 A1.3 1.3 0 1 0 13.6 13.899999999999999 Z" fill="#1c2270"/>
</svg>
<div class="t" style="left:90px;top:86.0px;font-size:12.5px;color:#0a0a0a;letter-spacing:-0.3px">Cable Assy Initialization</div>
<svg class="a" style="left:67px;top:101.5px" width="18" height="19" viewBox="0 0 18 19">
<rect x="1.8" y="1.5" width="12.4" height="16" fill="#fff" stroke="#3b6a3b" stroke-width="1.6"/>
<path d="M4.5 5h5.5M4.5 9.6h5.5M4.5 14.2h5.5" stroke="#4a784a" stroke-width="1.3"/>
<path d="M10 3.6 L11.8 5.6 L15.8 0.8 M10 8.2 L11.8 10.2 L15.8 5.4 M10 12.8 L11.8 14.8 L15.8 10" fill="none" stroke="#237023" stroke-width="1.7"/>

</svg>
<div class="t" style="left:90px;top:106.0px;font-size:12.5px;color:#0a0a0a;letter-spacing:-0.3px">A Side - Strip Wires</div>
<svg class="a" style="left:67px;top:121.5px" width="18" height="19" viewBox="0 0 18 19">
<rect x="1.8" y="1.5" width="12.4" height="16" fill="#fff" stroke="#3b6a3b" stroke-width="1.6"/>
<path d="M4.5 5h5.5M4.5 9.6h5.5M4.5 14.2h5.5" stroke="#4a784a" stroke-width="1.3"/>
<path d="M10 3.6 L11.8 5.6 L15.8 0.8 M10 8.2 L11.8 10.2 L15.8 5.4 M10 12.8 L11.8 14.8 L15.8 10" fill="none" stroke="#237023" stroke-width="1.7"/>
<path fill-rule="evenodd" d="M12.71,12.33 L12.84,10.76 L14.36,10.76 L14.49,12.33 L15.00,12.55 L16.20,11.53 L17.27,12.60 L16.25,13.80 L16.47,14.31 L18.04,14.44 L18.04,15.96 L16.47,16.09 L16.25,16.60 L17.27,17.80 L16.20,18.87 L15.00,17.85 L14.49,18.07 L14.36,19.64 L12.84,19.64 L12.71,18.07 L12.20,17.85 L11.00,18.87 L9.93,17.80 L10.95,16.60 L10.73,16.09 L9.16,15.96 L9.16,14.44 L10.73,14.31 L10.95,13.80 L9.93,12.60 L11.00,11.53 L12.20,12.55 Z M13.6 13.899999999999999 A1.3 1.3 0 1 0 13.6 16.5 A1.3 1.3 0 1 0 13.6 13.899999999999999 Z" fill="#1c2270"/>
</svg>
<div class="t" style="left:90px;top:126.0px;font-size:12.5px;color:#0a0a0a;letter-spacing:-0.3px">A Side - Crimp Pins</div>
<svg class="a" style="left:67px;top:141.5px" width="18" height="19" viewBox="0 0 18 19">
<rect x="1.8" y="1.5" width="12.4" height="16" fill="#fff" stroke="#3b6a3b" stroke-width="1.6"/>
<path d="M4.5 5h5.5M4.5 9.6h5.5M4.5 14.2h5.5" stroke="#4a784a" stroke-width="1.3"/>
<path d="M10 3.6 L11.8 5.6 L15.8 0.8 M10 8.2 L11.8 10.2 L15.8 5.4 M10 12.8 L11.8 14.8 L15.8 10" fill="none" stroke="#237023" stroke-width="1.7"/>
<path fill-rule="evenodd" d="M12.71,12.33 L12.84,10.76 L14.36,10.76 L14.49,12.33 L15.00,12.55 L16.20,11.53 L17.27,12.60 L16.25,13.80 L16.47,14.31 L18.04,14.44 L18.04,15.96 L16.47,16.09 L16.25,16.60 L17.27,17.80 L16.20,18.87 L15.00,17.85 L14.49,18.07 L14.36,19.64 L12.84,19.64 L12.71,18.07 L12.20,17.85 L11.00,18.87 L9.93,17.80 L10.95,16.60 L10.73,16.09 L9.16,15.96 L9.16,14.44 L10.73,14.31 L10.95,13.80 L9.93,12.60 L11.00,11.53 L12.20,12.55 Z M13.6 13.899999999999999 A1.3 1.3 0 1 0 13.6 16.5 A1.3 1.3 0 1 0 13.6 13.899999999999999 Z" fill="#1c2270"/>
</svg>
<div class="t" style="left:90px;top:146.0px;font-size:12.5px;color:#0a0a0a;letter-spacing:-0.3px">A Side - Measure Crimp Depth</div>
<svg class="a" style="left:67px;top:161.5px" width="18" height="19" viewBox="0 0 18 19">
<rect x="1.8" y="1.5" width="12.4" height="16" fill="#fff" stroke="#3b6a3b" stroke-width="1.6"/>
<path d="M4.5 5h5.5M4.5 9.6h5.5M4.5 14.2h5.5" stroke="#4a784a" stroke-width="1.3"/>
<path d="M10 3.6 L11.8 5.6 L15.8 0.8 M10 8.2 L11.8 10.2 L15.8 5.4 M10 12.8 L11.8 14.8 L15.8 10" fill="none" stroke="#237023" stroke-width="1.7"/>
<path fill-rule="evenodd" d="M12.71,12.33 L12.84,10.76 L14.36,10.76 L14.49,12.33 L15.00,12.55 L16.20,11.53 L17.27,12.60 L16.25,13.80 L16.47,14.31 L18.04,14.44 L18.04,15.96 L16.47,16.09 L16.25,16.60 L17.27,17.80 L16.20,18.87 L15.00,17.85 L14.49,18.07 L14.36,19.64 L12.84,19.64 L12.71,18.07 L12.20,17.85 L11.00,18.87 L9.93,17.80 L10.95,16.60 L10.73,16.09 L9.16,15.96 L9.16,14.44 L10.73,14.31 L10.95,13.80 L9.93,12.60 L11.00,11.53 L12.20,12.55 Z M13.6 13.899999999999999 A1.3 1.3 0 1 0 13.6 16.5 A1.3 1.3 0 1 0 13.6 13.899999999999999 Z" fill="#1c2270"/>
</svg>
<div class="t" style="left:90px;top:166.0px;font-size:12.5px;color:#0a0a0a;letter-spacing:-0.3px">A Side - Terminate Connector</div>
<svg class="a" style="left:67px;top:181.5px" width="18" height="19" viewBox="0 0 18 19">
<rect x="1.8" y="1.5" width="12.4" height="16" fill="#fff" stroke="#3b6a3b" stroke-width="1.6"/>
<path d="M4.5 5h5.5M4.5 9.6h5.5M4.5 14.2h5.5" stroke="#4a784a" stroke-width="1.3"/>
<path d="M10 3.6 L11.8 5.6 L15.8 0.8 M10 8.2 L11.8 10.2 L15.8 5.4 M10 12.8 L11.8 14.8 L15.8 10" fill="none" stroke="#237023" stroke-width="1.7"/>
<path fill-rule="evenodd" d="M12.71,12.33 L12.84,10.76 L14.36,10.76 L14.49,12.33 L15.00,12.55 L16.20,11.53 L17.27,12.60 L16.25,13.80 L16.47,14.31 L18.04,14.44 L18.04,15.96 L16.47,16.09 L16.25,16.60 L17.27,17.80 L16.20,18.87 L15.00,17.85 L14.49,18.07 L14.36,19.64 L12.84,19.64 L12.71,18.07 L12.20,17.85 L11.00,18.87 L9.93,17.80 L10.95,16.60 L10.73,16.09 L9.16,15.96 L9.16,14.44 L10.73,14.31 L10.95,13.80 L9.93,12.60 L11.00,11.53 L12.20,12.55 Z M13.6 13.899999999999999 A1.3 1.3 0 1 0 13.6 16.5 A1.3 1.3 0 1 0 13.6 13.899999999999999 Z" fill="#1c2270"/>
</svg>
<div class="t" style="left:90px;top:186.0px;font-size:12.5px;color:#0a0a0a;letter-spacing:-0.3px">A Side - Pin Retention Pull Test</div>
<svg class="a" style="left:67px;top:201.5px" width="18" height="19" viewBox="0 0 18 19">
<rect x="1.8" y="1.5" width="12.4" height="16" fill="#fff" stroke="#3b6a3b" stroke-width="1.6"/>
<path d="M4.5 5h5.5M4.5 9.6h5.5M4.5 14.2h5.5" stroke="#4a784a" stroke-width="1.3"/>
<path d="M10 3.6 L11.8 5.6 L15.8 0.8 M10 8.2 L11.8 10.2 L15.8 5.4 M10 12.8 L11.8 14.8 L15.8 10" fill="none" stroke="#237023" stroke-width="1.7"/>
<path fill-rule="evenodd" d="M12.71,12.33 L12.84,10.76 L14.36,10.76 L14.49,12.33 L15.00,12.55 L16.20,11.53 L17.27,12.60 L16.25,13.80 L16.47,14.31 L18.04,14.44 L18.04,15.96 L16.47,16.09 L16.25,16.60 L17.27,17.80 L16.20,18.87 L15.00,17.85 L14.49,18.07 L14.36,19.64 L12.84,19.64 L12.71,18.07 L12.20,17.85 L11.00,18.87 L9.93,17.80 L10.95,16.60 L10.73,16.09 L9.16,15.96 L9.16,14.44 L10.73,14.31 L10.95,13.80 L9.93,12.60 L11.00,11.53 L12.20,12.55 Z M13.6 13.899999999999999 A1.3 1.3 0 1 0 13.6 16.5 A1.3 1.3 0 1 0 13.6 13.899999999999999 Z" fill="#1c2270"/>
</svg>
<div class="t" style="left:90px;top:206.0px;font-size:12.5px;color:#0a0a0a;letter-spacing:-0.3px">A Side - Pin Retention Push Test</div>
<svg class="a" style="left:47px;top:221.5px" width="18" height="19" viewBox="0 0 18 19">
<rect x="1.8" y="1.5" width="12.4" height="16" fill="#fff" stroke="#3b6a3b" stroke-width="1.6"/>
<path d="M4.5 5h5.5M4.5 9.6h5.5M4.5 14.2h5.5" stroke="#4a784a" stroke-width="1.3"/>
<path d="M10 3.6 L11.8 5.6 L15.8 0.8 M10 8.2 L11.8 10.2 L15.8 5.4 M10 12.8 L11.8 14.8 L15.8 10" fill="none" stroke="#237023" stroke-width="1.7"/>
<path fill-rule="evenodd" d="M12.71,12.33 L12.84,10.76 L14.36,10.76 L14.49,12.33 L15.00,12.55 L16.20,11.53 L17.27,12.60 L16.25,13.80 L16.47,14.31 L18.04,14.44 L18.04,15.96 L16.47,16.09 L16.25,16.60 L17.27,17.80 L16.20,18.87 L15.00,17.85 L14.49,18.07 L14.36,19.64 L12.84,19.64 L12.71,18.07 L12.20,17.85 L11.00,18.87 L9.93,17.80 L10.95,16.60 L10.73,16.09 L9.16,15.96 L9.16,14.44 L10.73,14.31 L10.95,13.80 L9.93,12.60 L11.00,11.53 L12.20,12.55 Z M13.6 13.899999999999999 A1.3 1.3 0 1 0 13.6 16.5 A1.3 1.3 0 1 0 13.6 13.899999999999999 Z" fill="#1c2270"/>
</svg>
<div class="t" style="left:70px;top:226.0px;font-size:12.5px;color:#0a0a0a;letter-spacing:-0.3px">Cut to Length</div>
<svg class="a" style="left:8.5px;top:248.0px" width="7" height="7" viewBox="0 0 7 7"><path d="M6.5 0.5 V6.5 H0.5 Z" fill="#606060"/></svg>
<svg class="a" style="left:46px;top:243.5px" width="19" height="16" viewBox="0 0 19 16">
<path d="M1 15 V1.5 H7 L8.5 3.5 H17 V6" fill="none" stroke="#111" stroke-width="1.6"/>
<path d="M1.2 2 H7 L8.5 4 H1.2 Z" fill="#111"/>
<path d="M3.5 6 H18.5 L16.5 15 H1 Z" fill="#fff" stroke="#111" stroke-width="1.5"/>
<path d="M6.5 10 L9 12.5 L13.5 7.5" fill="none" stroke="#111" stroke-width="1.4"/>
</svg>
<div class="t" style="left:70px;top:246.0px;font-size:12.5px;color:#0a0a0a;letter-spacing:-0.3px">B Side Processes</div>
<svg class="a" style="left:67px;top:261.5px" width="18" height="19" viewBox="0 0 18 19">
<rect x="1.8" y="1.5" width="12.4" height="16" fill="#fff" stroke="#3b6a3b" stroke-width="1.6"/>
<path d="M4.5 5h5.5M4.5 9.6h5.5M4.5 14.2h5.5" stroke="#4a784a" stroke-width="1.3"/>
<path d="M10 3.6 L11.8 5.6 L15.8 0.8 M10 8.2 L11.8 10.2 L15.8 5.4 M10 12.8 L11.8 14.8 L15.8 10" fill="none" stroke="#237023" stroke-width="1.7"/>

</svg>
<div class="t" style="left:90px;top:266.0px;font-size:12.5px;color:#0a0a0a;letter-spacing:-0.3px">B Side - Strip Wires</div>
<svg class="a" style="left:67px;top:281.5px" width="18" height="19" viewBox="0 0 18 19">
<rect x="1.8" y="1.5" width="12.4" height="16" fill="#fff" stroke="#3b6a3b" stroke-width="1.6"/>
<path d="M4.5 5h5.5M4.5 9.6h5.5M4.5 14.2h5.5" stroke="#4a784a" stroke-width="1.3"/>
<path d="M10 3.6 L11.8 5.6 L15.8 0.8 M10 8.2 L11.8 10.2 L15.8 5.4 M10 12.8 L11.8 14.8 L15.8 10" fill="none" stroke="#237023" stroke-width="1.7"/>

</svg>
<div class="t" style="left:90px;top:286.0px;font-size:12.5px;color:#0a0a0a;letter-spacing:-0.3px">B Side - Crimp Pins</div>
<svg class="a" style="left:67px;top:301.5px" width="18" height="19" viewBox="0 0 18 19">
<rect x="1.8" y="1.5" width="12.4" height="16" fill="#fff" stroke="#3b6a3b" stroke-width="1.6"/>
<path d="M4.5 5h5.5M4.5 9.6h5.5M4.5 14.2h5.5" stroke="#4a784a" stroke-width="1.3"/>
<path d="M10 3.6 L11.8 5.6 L15.8 0.8 M10 8.2 L11.8 10.2 L15.8 5.4 M10 12.8 L11.8 14.8 L15.8 10" fill="none" stroke="#237023" stroke-width="1.7"/>

</svg>
<div class="t" style="left:90px;top:306.0px;font-size:12.5px;color:#0a0a0a;letter-spacing:-0.3px">B Side - Measure Crimp Depth</div>
<svg class="a" style="left:67px;top:321.5px" width="18" height="19" viewBox="0 0 18 19">
<rect x="1.8" y="1.5" width="12.4" height="16" fill="#fff" stroke="#3b6a3b" stroke-width="1.6"/>
<path d="M4.5 5h5.5M4.5 9.6h5.5M4.5 14.2h5.5" stroke="#4a784a" stroke-width="1.3"/>
<path d="M10 3.6 L11.8 5.6 L15.8 0.8 M10 8.2 L11.8 10.2 L15.8 5.4 M10 12.8 L11.8 14.8 L15.8 10" fill="none" stroke="#237023" stroke-width="1.7"/>

</svg>
<div class="t" style="left:90px;top:326.0px;font-size:12.5px;color:#0a0a0a;letter-spacing:-0.3px">B Side - Terminate Connector</div>
<svg class="a" style="left:67px;top:341.5px" width="18" height="19" viewBox="0 0 18 19">
<rect x="1.8" y="1.5" width="12.4" height="16" fill="#fff" stroke="#3b6a3b" stroke-width="1.6"/>
<path d="M4.5 5h5.5M4.5 9.6h5.5M4.5 14.2h5.5" stroke="#4a784a" stroke-width="1.3"/>
<path d="M10 3.6 L11.8 5.6 L15.8 0.8 M10 8.2 L11.8 10.2 L15.8 5.4 M10 12.8 L11.8 14.8 L15.8 10" fill="none" stroke="#237023" stroke-width="1.7"/>

</svg>
<div class="t" style="left:90px;top:346.0px;font-size:12.5px;color:#0a0a0a;letter-spacing:-0.3px">B Side - Pin Retention Pull Test</div>
</div>
<div class="a" style="left:325px;top:116px;width:16px;height:577px;background:#f0f0f0"></div>
<div class="a" style="left:325px;top:133px;width:16px;height:363px;background:#c2c2c2"></div>
<svg class="a" style="left:329px;top:121px" width="9" height="7" viewBox="0 0 9 7"><path d="M1 6 L4.5 2 L8 6" fill="none" stroke="#606060" stroke-width="1.8"/></svg>
<svg class="a" style="left:329px;top:682px" width="9" height="7" viewBox="0 0 9 7"><path d="M1 1 L4.5 5 L8 1" fill="none" stroke="#606060" stroke-width="1.4"/></svg>
<div class="a" style="left:342px;top:402px;width:2px;height:14px;background:repeating-linear-gradient(180deg,#999 0 1px,transparent 1px 2px)"></div>
<div class="a" style="left:345px;top:61px;width:2px;height:697px;background:#a9a9a9"></div>
<div class="a" style="left:345px;top:61px;width:766px;height:2px;background:#b8b8b8"></div>
<div class="a" style="left:349px;top:64px;width:55.5px;height:23px;background:linear-gradient(#f0f0f0,#e6e6e6);border:1px solid #ababab"></div>
<div class="t" style="left:358.0px;top:70.00px;font-size:12.4px;color:#3a3a3a;letter-spacing:-0.435px;">Gerber</div>
<div class="a" style="left:403.5px;top:62px;width:38.5px;height:27px;background:#fff;border:1px solid #b0b0b0;border-bottom:none"></div>
<div class="t" style="left:412.0px;top:70.00px;font-size:12.4px;color:#3a3a3a;letter-spacing:-1.670px;">PCB</div>
<div class="a" style="left:442px;top:64px;width:58px;height:23px;background:linear-gradient(#f0f0f0,#e6e6e6);border:1px solid #ababab"></div>
<div class="t" style="left:451.0px;top:70.00px;font-size:12.4px;color:#3a3a3a;letter-spacing:-0.841px;">Frames</div>
<div class="a" style="left:499px;top:64px;width:51.5px;height:23px;background:linear-gradient(#f0f0f0,#e6e6e6);border:1px solid #ababab"></div>
<div class="t" style="left:507.0px;top:70.00px;font-size:12.4px;color:#3a3a3a;letter-spacing:-0.593px;">Labels</div>
<div class="a" style="left:549.5px;top:64px;width:86.0px;height:23px;background:linear-gradient(#f0f0f0,#e6e6e6);border:1px solid #ababab"></div>
<div class="t" style="left:558.0px;top:70.00px;font-size:12.4px;color:#3a3a3a;letter-spacing:-0.452px;">Panel Layout</div>
<div class="a" style="left:634.5px;top:64px;width:73.0px;height:23px;background:linear-gradient(#f0f0f0,#e6e6e6);border:1px solid #ababab"></div>
<div class="t" style="left:643.0px;top:70.00px;font-size:12.4px;color:#3a3a3a;letter-spacing:-0.116px;">Footprints</div>
<div class="a" style="left:706.5px;top:64px;width:71.5px;height:23px;background:linear-gradient(#f0f0f0,#e6e6e6);border:1px solid #ababab"></div>
<div class="t" style="left:715.0px;top:70.00px;font-size:12.4px;color:#3a3a3a;letter-spacing:-0.503px;">Electricals</div>
<div class="a" style="left:964px;top:63px;width:146px;height:23px;background:linear-gradient(#f0f0f0,#e4e4e4);border:1px solid #b4b4b4;border-right:none"></div>
<svg class="a" style="left:979px;top:67px" width="13" height="15" viewBox="0 0 13 15">
<path d="M1 1.5 L8 0.5 V13.5 L1 14.5Z" fill="#c8d8ea"/>
<path d="M4 5.5 H9 V3.5 L12.5 6.5 L9 9.5 V7.5 H4Z" fill="#1fa83a"/>
</svg>
<div class="t" style="left:994.0px;top:68.00px;font-size:12.4px;color:#333;letter-spacing:-0.601px;">Export GENCAD File</div>
<div class="a" style="left:347px;top:87px;width:763px;height:1px;background:#c4c4c4"></div>
<div class="a" style="left:349px;top:88px;width:761px;height:1px;background:#e6e6e6"></div>
<div class="a" style="left:347px;top:180px;width:763px;height:1.5px;background:#a8a8a8"></div>
<div class="a" style="left:347px;top:183px;width:763px;height:1px;background:#d0d0d0"></div>
<div class="a" style="left:476px;top:93px;width:1px;height:82px;background:#d6d6d6"></div>
<div class="a" style="left:725.5px;top:93px;width:1px;height:82px;background:#d6d6d6"></div>
<div class="a" style="left:853px;top:93px;width:1px;height:82px;background:#d6d6d6"></div>
<div class="a" style="left:935px;top:93px;width:1px;height:82px;background:#d6d6d6"></div>
<div class="a" style="left:1017px;top:93px;width:1px;height:82px;background:#d6d6d6"></div>
<div class="a" style="left:353px;top:114px;width:75px;height:22px;background:#fff;border:1px solid #ababab"></div>
<svg class="a" style="left:439px;top:97px" width="29" height="27" viewBox="0 0 29 27">
<path d="M3 10 L9 2 Q12 0 14 3 L13 9 Z" fill="#3c444c"/>
<path d="M14 5 L20 1 Q24 1 26 5 L27 13 L19 12Z" fill="#3c444c"/>
<path d="M10 6 L18 4 L19 11 L12 14Z" fill="#5a646c"/>
<circle cx="8" cy="14" r="6.8" fill="#2a3238"/>
<circle cx="8" cy="14" r="4.6" fill="#3aa0c8"/>
<circle cx="7" cy="13" r="2" fill="#8ad4ee"/>
<circle cx="19.5" cy="18" r="7.2" fill="#2a3238"/>
<circle cx="19.5" cy="18" r="4.9" fill="#3aa0c8"/>
<circle cx="18.5" cy="17" r="2.1" fill="#8ad4ee"/>
</svg>
<div class="t" style="left:435.0px;top:131.00px;font-size:12.4px;color:#3a3a3a;letter-spacing:-0.718px;">Search</div>
<div class="t" style="left:394.5px;top:164.00px;font-size:12.4px;color:#3a3a3a;letter-spacing:-0.801px;">Search</div>
<svg class="a" style="left:482px;top:96px" width="16" height="15" viewBox="0 0 16 15">
<rect x="0.5" y="5" width="5.5" height="5.5" fill="#0000e0" stroke="#111" stroke-width="0.9"/>
<rect x="6.5" y="9" width="5.5" height="5.5" fill="#0000e0" stroke="#111" stroke-width="0.9"/>
<path d="M13 0.5 V6 M10.5 1.5 L15.5 5 M15.5 1.5 L10.5 5 M10 3.2 H16" stroke="#d8c800" stroke-width="1"/>
</svg>
<div class="t" style="left:502.0px;top:97.00px;font-size:12.4px;color:#3a3a3a;letter-spacing:-0.329px;">Assign Origin</div>
<svg class="a" style="left:482px;top:117px" width="16" height="16" viewBox="0 0 16 16">
<rect x="0.8" y="0.8" width="7" height="4" rx="1.5" fill="#dfeefa" stroke="#8ab4e0" stroke-width="1"/>
<rect x="7.8" y="6" width="7.5" height="4" rx="1.5" fill="#dfeefa" stroke="#8ab4e0" stroke-width="1"/>
<rect x="0.8" y="11" width="7" height="4" rx="1.5" fill="#dfeefa" stroke="#8ab4e0" stroke-width="1"/>
<path d="M1 5 V11" stroke="#8ab4e0" stroke-width="1"/>
<path d="M2 8 H6" stroke="#20c020" stroke-width="1.5"/><path d="M5 6 L7.5 8 L5 10Z" fill="#20c020"/>
</svg>
<div class="t" style="left:502.0px;top:120.00px;font-size:12.4px;color:#3a3a3a;letter-spacing:-0.141px;">Align Photoplots</div>
<svg class="a" style="left:482px;top:140px" width="16" height="15" viewBox="0 0 16 15">
<path d="M3.5 12.5 A6 6 0 1 1 12 12.5" fill="none" stroke="#1a9a1a" stroke-width="1.9"/>
<path d="M0.8 11 L5 14.5 L5.5 9Z" fill="#1a9a1a"/>
</svg>
<div class="t" style="left:502.0px;top:142.00px;font-size:12.4px;color:#3a3a3a;letter-spacing:-0.771px;">Rotate PCB</div>
<svg class="a" style="left:566px;top:147px" width="6" height="4" viewBox="0 0 6 4"><path d="M0 0H6L3 3.5Z" fill="#555"/></svg>
<div class="a" style="left:594px;top:114px;width:97px;height:22px;background:#a8cbeb"></div>
<svg class="a" style="left:596px;top:96px" width="17" height="12" viewBox="0 0 17 12">
<path d="M3.5 0 V4.5 M1.2 2.2 H5.8" stroke="#111" stroke-width="1.1"/>
<rect x="0.5" y="5.5" width="6" height="6" fill="#e00000" stroke="#111" stroke-width="0.9"/>
<rect x="10.5" y="6" width="5.5" height="5.5" fill="#111"/>
</svg>
<div class="t" style="left:616.4px;top:97.00px;font-size:12.4px;color:#3a3a3a;letter-spacing:-0.472px;">Assign Pin 1</div>
<svg class="a" style="left:596px;top:119px" width="17" height="12" viewBox="0 0 17 12">
<path d="M3.5 0 V4.5 M1.2 2.2 H5.8" stroke="#111" stroke-width="1.1"/>
<rect x="0.5" y="5.5" width="6" height="6" fill="#e00000" stroke="#111" stroke-width="0.9"/>
<rect x="10.5" y="6" width="5.5" height="5.5" fill="#111"/>
</svg>
<div class="t" style="left:616.4px;top:120.00px;font-size:12.4px;color:#3a3a3a;letter-spacing:-0.350px;">Show Polarity</div>
<svg class="a" style="left:596px;top:142px" width="17" height="12" viewBox="0 0 17 12">
<path d="M3.5 0 V4.5 M1.2 2.2 H5.8" stroke="#111" stroke-width="1.1"/>
<rect x="0.5" y="5.5" width="6" height="6" fill="#e00000" stroke="#111" stroke-width="0.9"/>
<rect x="10.5" y="6" width="5.5" height="5.5" fill="#111"/>
</svg>
<div class="t" style="left:616.4px;top:142.00px;font-size:12.4px;color:#3a3a3a;letter-spacing:-0.441px;">Crop Extended Pins</div>
<div class="t" style="left:565.5px;top:164.00px;font-size:12.4px;color:#3a3a3a;letter-spacing:-0.403px;">CAD Controls</div>
<svg class="a" style="left:737.1px;top:95.9px" width="28" height="28" viewBox="0 0 28 28">
<circle cx="14" cy="14" r="13.2" fill="#fff" stroke="#8a8a8a" stroke-width="1.1"/>
<circle cx="14" cy="14" r="12" fill="none" stroke="#8a8a8a" stroke-width="0.6"/>
<path d="M14 14 L14.00 2.70 A11.3 11.3 0 0 1 21.99 6.01 Z" fill="#9cd49c"/><path d="M14 14 L21.99 6.01 A11.3 11.3 0 0 1 25.30 14.00 Z" fill="#50c050"/><path d="M14 14 L25.30 14.00 A11.3 11.3 0 0 1 21.99 21.99 Z" fill="#30d030"/><path d="M14 14 L21.99 21.99 A11.3 11.3 0 0 1 14.00 25.30 Z" fill="#38c038"/><path d="M14 14 L14.00 25.30 A11.3 11.3 0 0 1 6.01 21.99 Z" fill="#20b020"/><path d="M14 14 L6.01 21.99 A11.3 11.3 0 0 1 2.70 14.00 Z" fill="#109810"/><path d="M14 14 L2.70 14.00 A11.3 11.3 0 0 1 6.01 6.01 Z" fill="#a8d8a8"/><path d="M14 14 L6.01 6.01 A11.3 11.3 0 0 1 14.00 2.70 Z" fill="#b0dcb0"/><path d="M18.40 14.00 L25.30 14.00" stroke="#1a6a1a" stroke-width="0.9"/><path d="M17.11 17.11 L21.99 21.99" stroke="#1a6a1a" stroke-width="0.9"/><path d="M14.00 18.40 L14.00 25.30" stroke="#1a6a1a" stroke-width="0.9"/><path d="M10.89 17.11 L6.01 21.99" stroke="#1a6a1a" stroke-width="0.9"/><path d="M9.60 14.00 L2.70 14.00" stroke="#1a6a1a" stroke-width="0.9"/><path d="M10.89 10.89 L6.01 6.01" stroke="#1a6a1a" stroke-width="0.9"/><path d="M14.00 9.60 L14.00 2.70" stroke="#1a6a1a" stroke-width="0.9"/><path d="M17.11 10.89 L21.99 6.01" stroke="#1a6a1a" stroke-width="0.9"/>
<circle cx="14" cy="14" r="4.4" fill="#a8d4a8" stroke="#1a6a1a" stroke-width="0.9"/>
</svg>
<div class="t" style="left:734.3px;top:131.00px;font-size:12.4px;color:#3a3a3a;letter-spacing:-0.539px;">Create</div>
<div class="t" style="left:732.0px;top:145.00px;font-size:12.4px;color:#3a3a3a;letter-spacing:-0.469px;">Fiducial</div>
<svg class="a" style="left:779px;top:95px" width="14" height="14" viewBox="0 0 28 28">
<circle cx="14" cy="14" r="13.2" fill="#fff" stroke="#c8c8c8" stroke-width="1.1"/>
<circle cx="14" cy="14" r="12" fill="none" stroke="#c8c8c8" stroke-width="0.6"/>
<path d="M14 14 L14.00 2.70 A11.3 11.3 0 0 1 21.99 6.01 Z" fill="#e4f4e4"/><path d="M14 14 L21.99 6.01 A11.3 11.3 0 0 1 25.30 14.00 Z" fill="#d8f0d8"/><path d="M14 14 L25.30 14.00 A11.3 11.3 0 0 1 21.99 21.99 Z" fill="#c8ecc8"/><path d="M14 14 L21.99 21.99 A11.3 11.3 0 0 1 14.00 25.30 Z" fill="#c4ecc4"/><path d="M14 14 L14.00 25.30 A11.3 11.3 0 0 1 6.01 21.99 Z" fill="#c8ecc8"/><path d="M14 14 L6.01 21.99 A11.3 11.3 0 0 1 2.70 14.00 Z" fill="#bce4bc"/><path d="M14 14 L2.70 14.00 A11.3 11.3 0 0 1 6.01 6.01 Z" fill="#b4e0b4"/><path d="M14 14 L6.01 6.01 A11.3 11.3 0 0 1 14.00 2.70 Z" fill="#e0f2e0"/><path d="M18.40 14.00 L25.30 14.00" stroke="#c0e0c0" stroke-width="0.9"/><path d="M17.11 17.11 L21.99 21.99" stroke="#c0e0c0" stroke-width="0.9"/><path d="M14.00 18.40 L14.00 25.30" stroke="#c0e0c0" stroke-width="0.9"/><path d="M10.89 17.11 L6.01 21.99" stroke="#c0e0c0" stroke-width="0.9"/><path d="M9.60 14.00 L2.70 14.00" stroke="#c0e0c0" stroke-width="0.9"/><path d="M10.89 10.89 L6.01 6.01" stroke="#c0e0c0" stroke-width="0.9"/><path d="M14.00 9.60 L14.00 2.70" stroke="#c0e0c0" stroke-width="0.9"/><path d="M17.11 10.89 L21.99 6.01" stroke="#c0e0c0" stroke-width="0.9"/>
<circle cx="14" cy="14" r="4.4" fill="#eef8ee" stroke="#c0e0c0" stroke-width="0.9"/>
</svg>
<svg class="a" style="left:779px;top:118px" width="14" height="14" viewBox="0 0 14 14">
<circle cx="7" cy="7" r="6.3" fill="#fff" stroke="#c8c8c8" stroke-width="1.2"/>
<circle cx="7" cy="7" r="4.8" fill="#f4c0c8"/>
<path d="M4 7 H10" stroke="#fff" stroke-width="1.6"/></svg>
<svg class="a" style="left:779px;top:140px" width="12" height="12" viewBox="0 0 28 28">
<circle cx="14" cy="14" r="13.2" fill="#fff" stroke="#8a8a8a" stroke-width="1.1"/>
<circle cx="14" cy="14" r="12" fill="none" stroke="#8a8a8a" stroke-width="0.6"/>
<path d="M14 14 L14.00 2.70 A11.3 11.3 0 0 1 21.99 6.01 Z" fill="#9cd49c"/><path d="M14 14 L21.99 6.01 A11.3 11.3 0 0 1 25.30 14.00 Z" fill="#50c050"/><path d="M14 14 L25.30 14.00 A11.3 11.3 0 0 1 21.99 21.99 Z" fill="#30d030"/><path d="M14 14 L21.99 21.99 A11.3 11.3 0 0 1 14.00 25.30 Z" fill="#38c038"/><path d="M14 14 L14.00 25.30 A11.3 11.3 0 0 1 6.01 21.99 Z" fill="#20b020"/><path d="M14 14 L6.01 21.99 A11.3 11.3 0 0 1 2.70 14.00 Z" fill="#109810"/><path d="M14 14 L2.70 14.00 A11.3 11.3 0 0 1 6.01 6.01 Z" fill="#a8d8a8"/><path d="M14 14 L6.01 6.01 A11.3 11.3 0 0 1 14.00 2.70 Z" fill="#b0dcb0"/><path d="M18.40 14.00 L25.30 14.00" stroke="#1a6a1a" stroke-width="0.9"/><path d="M17.11 17.11 L21.99 21.99" stroke="#1a6a1a" stroke-width="0.9"/><path d="M14.00 18.40 L14.00 25.30" stroke="#1a6a1a" stroke-width="0.9"/><path d="M10.89 17.11 L6.01 21.99" stroke="#1a6a1a" stroke-width="0.9"/><path d="M9.60 14.00 L2.70 14.00" stroke="#1a6a1a" stroke-width="0.9"/><path d="M10.89 10.89 L6.01 6.01" stroke="#1a6a1a" stroke-width="0.9"/><path d="M14.00 9.60 L14.00 2.70" stroke="#1a6a1a" stroke-width="0.9"/><path d="M17.11 10.89 L21.99 6.01" stroke="#1a6a1a" stroke-width="0.9"/>
<circle cx="14" cy="14" r="4.4" fill="#a8d4a8" stroke="#1a6a1a" stroke-width="0.9"/>
</svg>
<div class="a" style="left:784.5px;top:148px;width:9.5px;height:8px;background:#2a3440"></div>
<div class="a" style="left:786.5px;top:150.5px;width:5.5px;height:3.5px;background:#c8a848"></div>
<svg class="a" style="left:810px;top:96px" width="22" height="22" viewBox="0 0 28 28">
<circle cx="14" cy="14" r="13.2" fill="#fff" stroke="#8a8a8a" stroke-width="1.1"/>
<circle cx="14" cy="14" r="12" fill="none" stroke="#8a8a8a" stroke-width="0.6"/>
<path d="M14 14 L14.00 2.70 A11.3 11.3 0 0 1 21.99 6.01 Z" fill="#9cd49c"/><path d="M14 14 L21.99 6.01 A11.3 11.3 0 0 1 25.30 14.00 Z" fill="#50c050"/><path d="M14 14 L25.30 14.00 A11.3 11.3 0 0 1 21.99 21.99 Z" fill="#30d030"/><path d="M14 14 L21.99 21.99 A11.3 11.3 0 0 1 14.00 25.30 Z" fill="#38c038"/><path d="M14 14 L14.00 25.30 A11.3 11.3 0 0 1 6.01 21.99 Z" fill="#20b020"/><path d="M14 14 L6.01 21.99 A11.3 11.3 0 0 1 2.70 14.00 Z" fill="#109810"/><path d="M14 14 L2.70 14.00 A11.3 11.3 0 0 1 6.01 6.01 Z" fill="#a8d8a8"/><path d="M14 14 L6.01 6.01 A11.3 11.3 0 0 1 14.00 2.70 Z" fill="#b0dcb0"/><path d="M18.40 14.00 L25.30 14.00" stroke="#1a6a1a" stroke-width="0.9"/><path d="M17.11 17.11 L21.99 21.99" stroke="#1a6a1a" stroke-width="0.9"/><path d="M14.00 18.40 L14.00 25.30" stroke="#1a6a1a" stroke-width="0.9"/><path d="M10.89 17.11 L6.01 21.99" stroke="#1a6a1a" stroke-width="0.9"/><path d="M9.60 14.00 L2.70 14.00" stroke="#1a6a1a" stroke-width="0.9"/><path d="M10.89 10.89 L6.01 6.01" stroke="#1a6a1a" stroke-width="0.9"/><path d="M14.00 9.60 L14.00 2.70" stroke="#1a6a1a" stroke-width="0.9"/><path d="M17.11 10.89 L21.99 6.01" stroke="#1a6a1a" stroke-width="0.9"/>
<circle cx="14" cy="14" r="4.4" fill="#a8d4a8" stroke="#1a6a1a" stroke-width="0.9"/>
</svg>
<svg class="a" style="left:821px;top:103px" width="18" height="21" viewBox="0 0 18 21">
<rect x="0.8" y="2" width="16.4" height="18.2" fill="#d8a848" stroke="#8a6a20" stroke-width="1"/>
<rect x="3" y="5" width="12" height="13" fill="#f4f4f4"/>
<rect x="6" y="0.5" width="6" height="3.5" fill="#888"/>
<text x="5" y="13.5" font-size="5.5" font-family="Liberation Sans" font-weight="bold" fill="#333">OK</text>
</svg>
<div class="t" style="left:801.7px;top:131.00px;font-size:12.4px;color:#3a3a3a;letter-spacing:-0.348px;">Show All</div>
<div class="t" style="left:802.3px;top:145.00px;font-size:12.4px;color:#3a3a3a;letter-spacing:-0.528px;">Fiducials</div>
<div class="t" style="left:767.8px;top:164.00px;font-size:12.4px;color:#3a3a3a;letter-spacing:-0.528px;">Fiducials</div>
<div class="t" style="left:859.0px;top:133.00px;font-size:12.4px;color:#3a3a3a;letter-spacing:-0.254px;">Components</div>
<svg class="a" style="left:890px;top:145px" width="6" height="4" viewBox="0 0 6 4"><path d="M0 0H6L3 3.5Z" fill="#555"/></svg>
<div class="t" style="left:940.8px;top:133.00px;font-size:12.4px;color:#3a3a3a;letter-spacing:-0.264px;">Components</div>
<svg class="a" style="left:972px;top:145px" width="6" height="4" viewBox="0 0 6 4"><path d="M0 0H6L3 3.5Z" fill="#555"/></svg>
<div class="a" style="left:375px;top:187px;width:1px;height:540px;background:#c8c8c8"></div>
<div class="a" style="left:349px;top:185px;width:22px;height:21.5px;background:#a6c8ea"></div>
<div class="a" style="left:349px;top:304px;width:22px;height:21px;background:#a6c8ea"></div>
<div class="a" style="left:349px;top:326px;width:22px;height:12px;background:#ddeaf8"></div>
<div class="a" style="left:349px;top:339px;width:22px;height:21px;background:#a6c8ea"></div>
<div class="a" style="left:349px;top:361px;width:22px;height:12px;background:#ddeaf8"></div>
<div class="a" style="left:349px;top:378px;width:22px;height:21.69999999999999px;background:#a6c8ea"></div>
<div class="a" style="left:349px;top:501px;width:22px;height:22px;background:#a6c8ea"></div>
<div class="a" style="left:353px;top:301px;width:13px;height:1px;background:#c8c8c8"></div>
<div class="a" style="left:353px;top:375.5px;width:13px;height:1px;background:#c8c8c8"></div>
<div class="a" style="left:353px;top:425.5px;width:13px;height:1px;background:#c8c8c8"></div>
<div class="a" style="left:353px;top:498.5px;width:13px;height:1px;background:#c8c8c8"></div>
<div class="a" style="left:353px;top:548.5px;width:13px;height:1px;background:#c8c8c8"></div>
<svg class="a" style="left:350px;top:187px" width="19" height="18" viewBox="0 0 19 18">
<path d="M1.5 1 L11 4.5 L8 6.5 L11 10 L9 12 L6 8.5 L4 11.5Z" fill="#1a4ec0" stroke="#0a2a80" stroke-width="0.7"/>
<path d="M13 7.5 V17 M8.5 12.2 H17.5" stroke="#111" stroke-width="1.2"/>
<path d="M11.5 9 L13 7 L14.5 9Z M11.5 15.5 L13 17.5 L14.5 15.5Z M10 10.7 L8 12.2 L10 13.7Z M16 10.7 L18 12.2 L16 13.7Z" fill="#111"/>
</svg>
<div class="a" style="left:351.5px;top:211px;width:13px;height:14px;border:1.3px dashed #222"></div>
<svg class="a" style="left:350px;top:233px" width="18" height="17" viewBox="0 0 18 17">
<ellipse cx="10" cy="6" rx="7" ry="4.5" fill="none" stroke="#555" stroke-width="1.4" transform="rotate(-15 10 6)"/>
<path d="M4 9 Q2 12 4 16" fill="none" stroke="#555" stroke-width="1.4"/><circle cx="4.5" cy="9.5" r="1.5" fill="#555"/>
</svg>
<svg class="a" style="left:350px;top:256px" width="17" height="16" viewBox="0 0 17 16">
<path d="M1 2 L6 6 L14 1.5 L12 8 L5 11 Z" fill="none" stroke="#555" stroke-width="1.3"/>
<path d="M5 11 V15" stroke="#555" stroke-width="1.5"/><circle cx="5" cy="11" r="1.5" fill="#555"/>
</svg>
<svg class="a" style="left:351px;top:280px" width="16" height="15" viewBox="0 0 16 15">
<path d="M1 13.5 L5 5 Q8 3 11 4 L14 3 L14.5 7 L8 12 L3 14.5Z" fill="#f2b8a0" stroke="#b86050" stroke-width="0.9"/>
<circle cx="13" cy="4" r="2.3" fill="#fff" stroke="#aaa" stroke-width="0.8"/>
</svg>
<svg class="a" style="left:351px;top:306px" width="18" height="17" viewBox="0 0 18 17">
<rect x="1" y="0.5" width="15" height="1.3" fill="#111"/>
<rect x="1" y="3" width="15" height="2.5" fill="#111"/>
<rect x="1" y="7" width="15" height="3.5" fill="#111"/>
<rect x="1" y="12" width="15" height="4.5" fill="#111"/>
</svg>
<svg class="a" style="left:357px;top:327.5px" width="5" height="9" viewBox="0 0 5 9"><path d="M0.5 1 L4 4.5 L0.5 8Z" fill="#111"/></svg>
<svg class="a" style="left:357px;top:362.5px" width="5" height="9" viewBox="0 0 5 9"><path d="M0.5 1 L4 4.5 L0.5 8Z" fill="#111"/></svg>
<svg class="a" style="left:351px;top:341px" width="18" height="18" viewBox="0 0 18 18">
<path d="M2 8 L8 3 L13 8 L7.5 13 Z" fill="#c8c8c8" stroke="#555" stroke-width="0.9"/>
<path d="M2 8 L7.5 13 L7 15 Q3 13 2 8Z" fill="#888"/>
<path d="M11 9 Q15 10 14 16" fill="none" stroke="#20c040" stroke-width="2.6"/>
<path d="M3 6 Q2 1 7 1" fill="none" stroke="#555" stroke-width="1"/>
</svg>
<svg class="a" style="left:353px;top:383px" width="14" height="13" viewBox="0 0 14 13"><rect x="0.0" y="0.0" width="2" height="2.4" fill="#3ab03a"/><rect x="2.6" y="0.0" width="2" height="2.4" fill="#3ab03a"/><rect x="5.2" y="0.0" width="2" height="2.4" fill="#3ab03a"/><rect x="7.800000000000001" y="0.0" width="2" height="2.4" fill="#3ab03a"/><rect x="10.4" y="0.0" width="2" height="2.4" fill="#3ab03a"/><rect x="0.0" y="3.2" width="2" height="1.6" fill="#7aa0d8"/><rect x="2.6" y="3.2" width="2" height="1.6" fill="#7aa0d8"/><rect x="5.2" y="3.2" width="2" height="1.6" fill="#7aa0d8"/><rect x="7.800000000000001" y="3.2" width="2" height="1.6" fill="#7aa0d8"/><rect x="10.4" y="3.2" width="2" height="1.6" fill="#7aa0d8"/><rect x="0.0" y="6.4" width="2" height="1.6" fill="#7aa0d8"/><rect x="2.6" y="6.4" width="2" height="1.6" fill="#7aa0d8"/><rect x="5.2" y="6.4" width="2" height="1.6" fill="#7aa0d8"/><rect x="7.800000000000001" y="6.4" width="2" height="1.6" fill="#7aa0d8"/><rect x="10.4" y="6.4" width="2" height="1.6" fill="#7aa0d8"/><rect x="0.0" y="9.600000000000001" width="2" height="1.6" fill="#7aa0d8"/><rect x="2.6" y="9.600000000000001" width="2" height="1.6" fill="#7aa0d8"/><rect x="5.2" y="9.600000000000001" width="2" height="1.6" fill="#7aa0d8"/><rect x="7.800000000000001" y="9.600000000000001" width="2" height="1.6" fill="#7aa0d8"/><rect x="10.4" y="9.600000000000001" width="2" height="1.6" fill="#7aa0d8"/></svg>
<svg class="a" style="left:353px;top:405px" width="14" height="13" viewBox="0 0 14 13"><rect x="0.0" y="0.0" width="2" height="1.6" fill="#7aa0d8"/><rect x="2.6" y="0.0" width="2" height="1.6" fill="#7aa0d8"/><rect x="5.2" y="0.0" width="2" height="1.6" fill="#7aa0d8"/><rect x="7.800000000000001" y="0.0" width="2" height="1.6" fill="#7aa0d8"/><rect x="10.4" y="0.0" width="2" height="1.6" fill="#7aa0d8"/><rect x="0.0" y="3.2" width="2" height="1.6" fill="#7aa0d8"/><rect x="2.6" y="3.2" width="2" height="1.6" fill="#7aa0d8"/><rect x="5.2" y="3.2" width="2" height="1.6" fill="#7aa0d8"/><rect x="7.800000000000001" y="3.2" width="2" height="1.6" fill="#7aa0d8"/><rect x="10.4" y="3.2" width="2" height="1.6" fill="#7aa0d8"/><rect x="0.0" y="6.4" width="2" height="1.6" fill="#7aa0d8"/><rect x="2.6" y="6.4" width="2" height="1.6" fill="#7aa0d8"/><rect x="5.2" y="6.4" width="2" height="1.6" fill="#7aa0d8"/><rect x="7.800000000000001" y="6.4" width="2" height="1.6" fill="#7aa0d8"/><rect x="10.4" y="6.4" width="2" height="1.6" fill="#7aa0d8"/><rect x="0.0" y="9.600000000000001" width="2" height="2.4" fill="#3ab03a"/><rect x="2.6" y="9.600000000000001" width="2" height="2.4" fill="#3ab03a"/><rect x="5.2" y="9.600000000000001" width="2" height="2.4" fill="#3ab03a"/><rect x="7.800000000000001" y="9.600000000000001" width="2" height="2.4" fill="#3ab03a"/><rect x="10.4" y="9.600000000000001" width="2" height="2.4" fill="#3ab03a"/></svg>
<svg class="a" style="left:352px;top:431px" width="16" height="16" viewBox="0 0 16 16"><path d="M0.5 0.5 L8 3 L6 5 L9 8 L7.5 9.5 L4.5 6.5 L2.5 8.5Z" fill="#1a4ec0" stroke="#0a2a80" stroke-width="0.6"/>
<rect x="9" y="2" width="5" height="13" rx="1.5" fill="#dde4ee" stroke="#8898aa" stroke-width="0.8"/></svg>
<svg class="a" style="left:352px;top:454px" width="16" height="17" viewBox="0 0 16 17"><path d="M0.5 0.5 L8 3 L6 5 L9 8 L7.5 9.5 L4.5 6.5 L2.5 8.5Z" fill="#1a4ec0" stroke="#0a2a80" stroke-width="0.6"/>
<rect x="6" y="8" width="9.5" height="8" fill="#383838"/><rect x="8.5" y="10" width="4.5" height="4" fill="#d8b040"/></svg>
<svg class="a" style="left:352px;top:478px" width="16" height="15" viewBox="0 0 16 15"><path d="M0.5 0.5 L8 3 L6 5 L9 8 L7.5 9.5 L4.5 6.5 L2.5 8.5Z" fill="#1a4ec0" stroke="#0a2a80" stroke-width="0.6"/>
<rect x="1.5" y="8.5" width="13" height="5" fill="#fff" stroke="#444" stroke-width="0.9"/><rect x="3.5" y="10" width="9" height="2" fill="#2a8a2a"/></svg>
<svg class="a" style="left:352px;top:504px" width="16" height="16" viewBox="0 0 16 16">
<rect x="1" y="1" width="6" height="6" fill="#2ed02e"/><rect x="9" y="1" width="6" height="6" fill="#2ed02e"/>
<rect x="1" y="9" width="6" height="6" fill="#2ed02e"/><rect x="9" y="9" width="6" height="6" fill="#2ed02e"/>
<rect x="0" y="0" width="16" height="16" fill="none" stroke="#fff" stroke-width="0.6"/></svg>
<svg class="a" style="left:352px;top:527px" width="16" height="16" viewBox="0 0 16 16">
<rect x="1" y="1" width="6" height="6" fill="#2ed02e"/><rect x="9" y="1" width="6" height="6" fill="#b4b4b4"/>
<rect x="1" y="9" width="6" height="6" fill="#b4b4b4"/><rect x="9" y="9" width="6" height="6" fill="#b4b4b4"/></svg>
<svg class="a" style="left:353px;top:556px" width="13" height="13" viewBox="0 0 13 13">
<rect x="0.5" y="0.5" width="12" height="12" fill="#e4f4e4" stroke="#b0dcb0"/><path d="M6.5 0 V13 M0 6.5 H13" stroke="#b0dcb0"/></svg>
<svg class="a" style="left:350px;top:578px" width="18" height="16" viewBox="0 0 18 16">
<path d="M4.5 0 V16 M13 0 V16 M0 3.5 H18 M0 11.5 H18" stroke="#999" stroke-width="1.1"/></svg>
<svg class="a" style="left:357px;top:598px" width="5" height="8" viewBox="0 0 5 8"><path d="M0.5 0.5 L4 4 L0.5 7.5Z" fill="#aaa"/></svg>
<svg class="a" style="left:353px;top:613px" width="13" height="13" viewBox="0 0 13 13">
<rect x="0.5" y="0.5" width="11" height="11" fill="#dce6f2" stroke="#b8c8dc"/><rect x="5" y="5" width="6" height="6" fill="#fff"/></svg>
<svg class="a" style="left:350px;top:635px" width="18" height="17" viewBox="0 0 18 17">
<path d="M7 1 V13 M1 7 H13" stroke="#a8dca8" stroke-width="1.6"/>
<path d="M5 3 L7 0.5 L9 3Z M5 11 L7 13.5 L9 11Z M3 5 L0.5 7 L3 9Z M11 5 L13.5 7 L11 9Z" fill="#a8dca8"/>
<text x="8" y="16.5" font-size="9" font-weight="bold" font-family="Liberation Sans" fill="#a0a0a0">X</text></svg>
<svg class="a" style="left:350px;top:658px" width="18" height="17" viewBox="0 0 18 17">
<path d="M7 1 V13 M1 7 H13" stroke="#a8dca8" stroke-width="1.6"/>
<path d="M5 3 L7 0.5 L9 3Z M5 11 L7 13.5 L9 11Z M3 5 L0.5 7 L3 9Z M11 5 L13.5 7 L11 9Z" fill="#a8dca8"/>
<text x="8" y="16.5" font-size="9" font-weight="bold" font-family="Liberation Sans" fill="#a0a0a0">Y</text></svg>
<div class="a" style="left:375px;top:187px;width:709px;height:540px;border:1px solid #c8c8c8;border-right:none;border-bottom:none"></div>
<div class="a" style="left:376px;top:726px;width:708px;height:1px;background:#c8c8c8"></div>
<div class="a" style="left:1083px;top:187px;width:1px;height:540px;background:#c8c8c8"></div>
<div class="a" style="left:1067px;top:192px;width:16px;height:515px;background:#f0f0f0"></div>
<svg class="a" style="left:1071px;top:197px" width="9" height="6" viewBox="0 0 9 6"><path d="M1 5 L4.5 1.5 L8 5" fill="none" stroke="#bcbcbc" stroke-width="1.2"/></svg>
<svg class="a" style="left:1071px;top:694px" width="9" height="6" viewBox="0 0 9 6"><path d="M1 1 L4.5 4.5 L8 1" fill="none" stroke="#bcbcbc" stroke-width="1.2"/></svg>
<div class="a" style="left:376px;top:707px;width:691px;height:16px;background:#f0f0f0"></div>
<div class="a" style="left:426px;top:707px;width:590px;height:16px;background:#c2c2c2"></div>
<div class="a" style="left:1067px;top:707px;width:16px;height:16px;background:#f0f0f0"></div>
<svg class="a" style="left:381px;top:711px" width="6" height="9" viewBox="0 0 6 9"><path d="M5 1 L1.5 4.5 L5 8" fill="none" stroke="#555" stroke-width="1.3"/></svg>
<svg class="a" style="left:1055px;top:711px" width="6" height="9" viewBox="0 0 6 9"><path d="M1 1 L4.5 4.5 L1 8" fill="none" stroke="#555" stroke-width="1.3"/></svg>
<div class="a" style="left:1047px;top:684px;width:20px;height:20px;background:#efefef;border:1px solid #9a9a9a"></div>
<svg class="a" style="left:1050.5px;top:687.5px" width="13" height="13" viewBox="0 0 13 13">
<circle cx="6.5" cy="6.5" r="6" fill="#ddd" stroke="#888" stroke-width="0.9"/><circle cx="6.5" cy="6.5" r="4.3" fill="#2a9a3a"/>
<rect x="5" y="5" width="3" height="3" fill="#fff"/></svg>
<div class="a" style="left:1088px;top:188px;width:21px;height:61px;background:#d6d6d6"></div>
<svg class="a" style="left:1091px;top:191px" width="14" height="16" viewBox="0 0 14 16">
<path d="M3 4 L8 2 L13 5 L12.5 13 L7 15.5 L2 12Z" fill="#e84030"/>
<path d="M1.5 2.5 L7 0.5 L11.5 3 L11 10.5 L6 13 L1 10Z" fill="#2ab8f0"/>
<path d="M7 0.5 L11.5 3 L11 10.5 L6.5 8Z" fill="#58d8ff"/>
</svg>
<div class="t" style="left:1090.5px;top:244px;font-size:12px;color:#333;transform:rotate(90deg);transform-origin:0 0;left:1103.5px;top:212px;letter-spacing:-0.7px">Layers</div>
<div class="a" style="left:1109.5px;top:61px;width:1.5px;height:697px;background:#a8a8a8"></div>
<div class="a" style="left:348px;top:731px;width:761px;height:24px;background:#0070c6"></div>
<div class="a" style="left:347px;top:756.5px;width:763px;height:1.5px;background:#b8b8b8"></div>
<div class="t" style="left:352.4px;top:738.00px;font-size:12.4px;color:#fff;letter-spacing:-0.469px;">(0.5773 , 3.1106)</div>
<div class="t" style="left:442.0px;top:738.00px;font-size:12.4px;color:#fff;letter-spacing:-0.625px;">Inches</div>
<div class="t" style="left:483.3px;top:738.00px;font-size:12.4px;color:#fff;letter-spacing:-0.620px;">Features</div>
<div class="t" style="left:536.0px;top:738.00px;font-size:12.4px;color:#fff;letter-spacing:-0.966px;">190</div>
<div class="t" style="left:562.5px;top:738.00px;font-size:12.4px;color:#fff;letter-spacing:-0.647px;">Selected</div>
<div class="t" style="left:614.0px;top:738.00px;font-size:12.4px;color:#fff;">0</div>
<svg class="a" style="left:0;top:0" width="1128" height="774" viewBox="0 0 1128 774"><path d="M871.5 742.5 V739.5 A2.9 2.9 0 0 1 877.3 739.5 V741.5" fill="none" stroke="#c8c8c8" stroke-width="1.6"/><rect x="864.4" y="742.6" width="9" height="7" fill="#e8b820"/><rect x="864.4" y="742.6" width="9" height="1.6" fill="#ccd"/><path d="M865 745 L867 749.5 M867.8 744.5 L870 749.5 M870.6 744.5 L872.8 749.5" stroke="#222" stroke-width="1.1"/><rect x="886.5" y="735.3" width="15" height="15.2" fill="none" stroke="#4a3a2a" stroke-width="1" stroke-dasharray="2 1.4"/><path d="M895.5 740.4 L889.3 747.7" stroke="#b88a2a" stroke-width="2.8" stroke-linecap="round"/><path d="M895.5 740.4 L889.3 747.7" stroke="#f0d090" stroke-width="1.2" stroke-linecap="round"/><circle cx="895.5" cy="740.4" r="4.3" fill="#c0dcf0" stroke="#d8c8a8" stroke-width="1.2"/><circle cx="894.7" cy="739.6" r="1.3" fill="#fff"/><path d="M920.4 742.9 L914.8 749.8" stroke="#b88a2a" stroke-width="2.8" stroke-linecap="round"/><path d="M920.4 742.9 L914.8 749.8" stroke="#f0d090" stroke-width="1.2" stroke-linecap="round"/><circle cx="920.4" cy="742.9" r="4.3" fill="#c0dcf0" stroke="#d8c8a8" stroke-width="1.2"/><circle cx="919.6" cy="742.1" r="1.3" fill="#fff"/><text x="909.6" y="740.8" font-size="7.6" font-weight="bold" font-family="Liberation Sans" fill="#4a4a4a" letter-spacing="0.1">100</text><path d="M943.4 742.9 L937.8 749.8" stroke="#b88a2a" stroke-width="2.8" stroke-linecap="round"/><path d="M943.4 742.9 L937.8 749.8" stroke="#f0d090" stroke-width="1.2" stroke-linecap="round"/><circle cx="943.4" cy="742.9" r="4.3" fill="#c0dcf0" stroke="#d8c8a8" stroke-width="1.2"/><circle cx="942.6" cy="742.1" r="1.3" fill="#fff"/><text x="932.6" y="740.8" font-size="7.6" font-weight="bold" font-family="Liberation Sans" fill="#4a4a4a" letter-spacing="-0.1">ALL</text><path d="M958 738.1 H964 M965.2 738.1 H971.2" stroke="#111" stroke-width="2"/><path d="M959.2 742.9 L965.2 749.8" stroke="#b88a2a" stroke-width="2.8" stroke-linecap="round"/><path d="M959.2 742.9 L965.2 749.8" stroke="#f0d090" stroke-width="1.2" stroke-linecap="round"/><circle cx="959.2" cy="742.9" r="4.3" fill="#c0dcf0" stroke="#d8c8a8" stroke-width="1.2"/><circle cx="958.4000000000001" cy="742.1" r="1.3" fill="#fff"/><path d="M986.4 739 H994.2" stroke="#6a5040" stroke-width="1.4"/><path d="M982.4 742.9 L988.5 749.8" stroke="#b88a2a" stroke-width="2.8" stroke-linecap="round"/><path d="M982.4 742.9 L988.5 749.8" stroke="#f0d090" stroke-width="1.2" stroke-linecap="round"/><circle cx="982.4" cy="742.9" r="4.3" fill="#c0dcf0" stroke="#d8c8a8" stroke-width="1.2"/><circle cx="981.6" cy="742.1" r="1.3" fill="#fff"/><path d="M1074.5 739 H1082 M1078.2 735.2 V742.8" stroke="#6a5040" stroke-width="2.2"/><path d="M1070.4 742.6 L1076.2 749.5" stroke="#b88a2a" stroke-width="2.8" stroke-linecap="round"/><path d="M1070.4 742.6 L1076.2 749.5" stroke="#f0d090" stroke-width="1.2" stroke-linecap="round"/><circle cx="1070.4" cy="742.6" r="4.3" fill="#c0dcf0" stroke="#d8c8a8" stroke-width="1.2"/><circle cx="1069.6000000000001" cy="741.8000000000001" r="1.3" fill="#fff"/><path d="M1093.4 742.6 L1099.1 749.5" stroke="#b88a2a" stroke-width="2.8" stroke-linecap="round"/><path d="M1093.4 742.6 L1099.1 749.5" stroke="#f0d090" stroke-width="1.2" stroke-linecap="round"/><circle cx="1093.4" cy="742.6" r="4.3" fill="#c0dcf0" stroke="#d8c8a8" stroke-width="1.2"/><circle cx="1092.6000000000001" cy="741.8000000000001" r="1.3" fill="#fff"/><path d="M1092 738 H1097.5 M1094.75 735.2 V740.8 M1099.5 738 H1105 M1102.25 735.2 V740.8" stroke="#000" stroke-width="2.2"/></svg>
<div class="a" style="left:1002px;top:733px;width:56px;height:20px;background:#fff"></div>
<div class="t" style="left:1006.0px;top:737.00px;font-size:13px;color:#444;letter-spacing:-0.987px;">123%</div>
<div class="a" style="left:1042px;top:734px;width:15px;height:18px;background:#efefef;border:1px solid #999"></div>
<svg class="a" style="left:1045px;top:736px" width="9" height="14" viewBox="0 0 9 14"><path d="M1 5 L4.5 1.5 L8 5 M1 9 L4.5 12.5 L8 9" fill="none" stroke="#555" stroke-width="1.1"/></svg>
<svg class="a" style="left:0;top:0" width="1128" height="774" viewBox="0 0 1128 774" font-family="Liberation Sans"><rect x="396.0" y="298.0" width="650.0" height="302.0" fill="#2c4902" stroke="none" stroke-width="1"/>
<rect x="396.0" y="298.0" width="650.0" height="1.0" fill="#1a2a06" stroke="none" stroke-width="1"/>
<text x="414.0" y="306.0" font-size="9.52" fill="#141c0c" text-anchor="middle" textLength="16.07" lengthAdjust="spacingAndGlyphs">MH4</text>
<rect x="406.5" y="308.5" width="16.0" height="16.0" fill="none" stroke="#6b9eb4" stroke-width="1"/>
<circle cx="414.4" cy="316.5" r="7.9" fill="#e6873a"/>
<rect x="434.5" y="299.5" width="12.0" height="23.0" fill="none" stroke="#6b9eb4" stroke-width="1"/>
<rect x="435.0" y="300.0" width="11.0" height="22.0" fill="#243c00" stroke="none" stroke-width="1"/>
<rect x="435.0" y="301.8" width="11.0" height="18.4" fill="#e8b890" stroke="none" stroke-width="1"/>
<rect x="435.0" y="301.8" width="10.4" height="17.8" fill="#cbc8be" stroke="none" stroke-width="1"/>
<text x="440.5" y="297.0" font-size="6" fill="#141c0c" text-anchor="middle">TP5</text>
<rect x="441" y="291" width="0" height="0"/>
<rect x="450.5" y="310.2" width="8.4" height="13.8" fill="none" stroke="#6b9eb4" stroke-width="1"/>
<rect x="451.5" y="311.0" width="6.4" height="5.6" fill="#dc8c48" stroke="none" stroke-width="1"/>
<rect x="452.4" y="311.9" width="4.6" height="3.8" fill="#cbc8be" stroke="none" stroke-width="1"/>
<rect x="451.5" y="317.5" width="6.4" height="5.6" fill="#dc8c48" stroke="none" stroke-width="1"/>
<rect x="452.4" y="318.4" width="4.6" height="3.8" fill="#cbc8be" stroke="none" stroke-width="1"/>
<text x="455.0" y="308.0" font-size="4.5" fill="#141c0c" text-anchor="middle">C28</text>
<rect x="459.9" y="315.5" width="14.4" height="8.0" fill="none" stroke="#6b9eb4" stroke-width="1"/>
<rect x="460.8" y="316.5" width="5.9" height="6.0" fill="#dc8c48" stroke="none" stroke-width="1"/>
<rect x="461.7" y="317.4" width="4.1" height="4.2" fill="#cbc8be" stroke="none" stroke-width="1"/>
<rect x="467.6" y="316.5" width="5.9" height="6.0" fill="#dc8c48" stroke="none" stroke-width="1"/>
<rect x="468.5" y="317.4" width="4.1" height="4.2" fill="#cbc8be" stroke="none" stroke-width="1"/>
<text x="467.0" y="313.0" font-size="9.52" fill="#141c0c" text-anchor="middle" textLength="13.97" lengthAdjust="spacingAndGlyphs">R25</text>
<rect x="445.3" y="325.0" width="12.2" height="15.8" fill="none" stroke="#6b9eb4" stroke-width="1"/>
<rect x="445.5" y="326.0" width="4.0" height="5.0" fill="#dc8c48" stroke="none" stroke-width="1"/>
<rect x="446.4" y="326.9" width="2.2" height="3.2" fill="#cbc8be" stroke="none" stroke-width="1"/>
<rect x="451.0" y="326.0" width="4.0" height="5.0" fill="#dc8c48" stroke="none" stroke-width="1"/>
<rect x="451.9" y="326.9" width="2.2" height="3.2" fill="#cbc8be" stroke="none" stroke-width="1"/>
<rect x="445.5" y="335.0" width="4.0" height="5.0" fill="#dc8c48" stroke="none" stroke-width="1"/>
<rect x="446.4" y="335.9" width="2.2" height="3.2" fill="#cbc8be" stroke="none" stroke-width="1"/>
<rect x="451.0" y="335.0" width="4.0" height="5.0" fill="#dc8c48" stroke="none" stroke-width="1"/>
<rect x="451.9" y="335.9" width="2.2" height="3.2" fill="#cbc8be" stroke="none" stroke-width="1"/>
<rect x="459.0" y="326.5" width="12.7" height="14.3" fill="none" stroke="#6b9eb4" stroke-width="1"/>
<rect x="459.5" y="327.0" width="12.0" height="3.0" fill="#dc8c48" stroke="none" stroke-width="1"/>
<rect x="460.4" y="327.8" width="2.2" height="1.4" fill="#cbc8be" stroke="none" stroke-width="1"/>
<rect x="464.4" y="327.8" width="2.2" height="1.4" fill="#cbc8be" stroke="none" stroke-width="1"/>
<rect x="468.4" y="327.8" width="2.2" height="1.4" fill="#cbc8be" stroke="none" stroke-width="1"/>
<rect x="459.5" y="337.0" width="12.0" height="3.0" fill="#dc8c48" stroke="none" stroke-width="1"/>
<rect x="460.4" y="337.8" width="2.2" height="1.4" fill="#cbc8be" stroke="none" stroke-width="1"/>
<rect x="464.4" y="337.8" width="2.2" height="1.4" fill="#cbc8be" stroke="none" stroke-width="1"/>
<rect x="468.4" y="337.8" width="2.2" height="1.4" fill="#cbc8be" stroke="none" stroke-width="1"/>
<rect x="464.0" y="327.0" width="3.0" height="13.0" fill="#cbc8be" stroke="none" stroke-width="1"/>
<text x="465.0" y="336.0" font-size="5.5" fill="#141c0c" text-anchor="middle">U12</text>
<rect x="427.7" y="330.5" width="13.8" height="7.8" fill="none" stroke="#6b9eb4" stroke-width="1"/>
<rect x="428.5" y="331.5" width="5.6" height="5.8" fill="#dc8c48" stroke="none" stroke-width="1"/>
<rect x="429.4" y="332.4" width="3.8" height="4.0" fill="#cbc8be" stroke="none" stroke-width="1"/>
<rect x="435.0" y="331.5" width="5.6" height="5.8" fill="#dc8c48" stroke="none" stroke-width="1"/>
<rect x="435.9" y="332.4" width="3.8" height="4.0" fill="#cbc8be" stroke="none" stroke-width="1"/>
<text x="426.0" y="337.3" font-size="9.52" fill="#141c0c" text-anchor="end" textLength="13.97" lengthAdjust="spacingAndGlyphs">C26</text>
<rect x="404.5" y="339.5" width="6.7" height="7.0" fill="none" stroke="#6b9eb4" stroke-width="1"/>
<path d="M404.5 343.3 H411.5 M408 339.5 V347" stroke="#e6873a" stroke-width="1"/>
<text x="407.8" y="338.0" font-size="4" fill="#141c0c" text-anchor="middle">FM5</text>
<rect x="450.5" y="341.8" width="8.4" height="14.2" fill="none" stroke="#6b9eb4" stroke-width="1"/>
<rect x="451.5" y="342.7" width="6.4" height="5.8" fill="#dc8c48" stroke="none" stroke-width="1"/>
<rect x="452.4" y="343.6" width="4.6" height="4.0" fill="#cbc8be" stroke="none" stroke-width="1"/>
<rect x="451.5" y="349.4" width="6.4" height="5.8" fill="#dc8c48" stroke="none" stroke-width="1"/>
<rect x="452.4" y="350.3" width="4.6" height="4.0" fill="#cbc8be" stroke="none" stroke-width="1"/>
<text x="455.0" y="360.0" font-size="4.5" fill="#141c0c" text-anchor="middle">C27</text>
<rect x="459.9" y="342.5" width="14.4" height="7.7" fill="none" stroke="#6b9eb4" stroke-width="1"/>
<rect x="460.8" y="343.5" width="5.9" height="5.7" fill="#dc8c48" stroke="none" stroke-width="1"/>
<rect x="461.7" y="344.4" width="4.1" height="3.9" fill="#cbc8be" stroke="none" stroke-width="1"/>
<rect x="467.6" y="343.5" width="5.9" height="5.7" fill="#dc8c48" stroke="none" stroke-width="1"/>
<rect x="468.5" y="344.4" width="4.1" height="3.9" fill="#cbc8be" stroke="none" stroke-width="1"/>
<text x="467.0" y="358.0" font-size="9.52" fill="#141c0c" text-anchor="middle" textLength="13.97" lengthAdjust="spacingAndGlyphs">R24</text>
<rect x="423.8" y="348.5" width="14.1" height="7.5" fill="none" stroke="#6b9eb4" stroke-width="1"/>
<rect x="424.7" y="349.5" width="5.7" height="5.5" fill="#dc8c48" stroke="none" stroke-width="1"/>
<rect x="425.6" y="350.4" width="3.9" height="3.7" fill="#cbc8be" stroke="none" stroke-width="1"/>
<rect x="431.3" y="349.5" width="5.7" height="5.5" fill="#dc8c48" stroke="none" stroke-width="1"/>
<rect x="432.2" y="350.4" width="3.9" height="3.7" fill="#cbc8be" stroke="none" stroke-width="1"/>
<text x="421.0" y="352.0" font-size="4.5" fill="#141c0c" text-anchor="middle" transform="rotate(-90 421 352)">C29</text>
<rect x="401.7" y="358.7" width="11.8" height="22.6" fill="none" stroke="#6b9eb4" stroke-width="1"/>
<rect x="402.2" y="359.2" width="10.8" height="21.6" fill="#243c00" stroke="none" stroke-width="1"/>
<rect x="402.2" y="361.0" width="10.8" height="18.0" fill="#e8b890" stroke="none" stroke-width="1"/>
<rect x="402.2" y="361.0" width="10.2" height="17.4" fill="#cbc8be" stroke="none" stroke-width="1"/>
<text x="407.6" y="356.5" font-size="5.5" fill="#141c0c" text-anchor="middle">TP31</text>
<rect x="418.0" y="357.5" width="17.0" height="23.5" fill="none" stroke="#6b9eb4" stroke-width="1"/>
<rect x="418.3" y="359.9" width="4.3" height="6.6" fill="#dc8c48" stroke="none" stroke-width="1"/>
<rect x="419.2" y="360.8" width="2.5" height="4.8" fill="#cbc8be" stroke="none" stroke-width="1"/>
<rect x="424.3" y="359.9" width="4.3" height="6.6" fill="#dc8c48" stroke="none" stroke-width="1"/>
<rect x="425.2" y="360.8" width="2.5" height="4.8" fill="#cbc8be" stroke="none" stroke-width="1"/>
<rect x="430.3" y="359.9" width="4.3" height="6.6" fill="#dc8c48" stroke="none" stroke-width="1"/>
<rect x="431.2" y="360.8" width="2.5" height="4.8" fill="#cbc8be" stroke="none" stroke-width="1"/>
<rect x="418.3" y="371.9" width="4.3" height="6.6" fill="#dc8c48" stroke="none" stroke-width="1"/>
<rect x="419.2" y="372.8" width="2.5" height="4.8" fill="#cbc8be" stroke="none" stroke-width="1"/>
<rect x="424.3" y="371.9" width="4.3" height="6.6" fill="#dc8c48" stroke="none" stroke-width="1"/>
<rect x="425.2" y="372.8" width="2.5" height="4.8" fill="#cbc8be" stroke="none" stroke-width="1"/>
<rect x="430.3" y="371.9" width="4.3" height="6.6" fill="#dc8c48" stroke="none" stroke-width="1"/>
<rect x="431.2" y="372.8" width="2.5" height="4.8" fill="#cbc8be" stroke="none" stroke-width="1"/>
<text x="437.0" y="373.0" font-size="9.52" fill="#141c0c" text-anchor="start" textLength="13.97" lengthAdjust="spacingAndGlyphs">U13</text>
<rect x="421.5" y="381.0" width="13.5" height="7.5" fill="none" stroke="#6b9eb4" stroke-width="1"/>
<rect x="422.3" y="382.0" width="5.5" height="5.5" fill="#dc8c48" stroke="none" stroke-width="1"/>
<rect x="423.2" y="382.9" width="3.7" height="3.7" fill="#cbc8be" stroke="none" stroke-width="1"/>
<rect x="428.7" y="382.0" width="5.5" height="5.5" fill="#dc8c48" stroke="none" stroke-width="1"/>
<rect x="429.6" y="382.9" width="3.7" height="3.7" fill="#cbc8be" stroke="none" stroke-width="1"/>
<text x="437.0" y="388.5" font-size="9.52" fill="#141c0c" text-anchor="start" textLength="13.97" lengthAdjust="spacingAndGlyphs">C34</text>
<text x="488.5" y="313.0" font-size="9.52" fill="#141c0c" text-anchor="middle" textLength="10.16" lengthAdjust="spacingAndGlyphs">Q2</text>
<rect x="480.8" y="314.5" width="15.7" height="18.0" fill="none" stroke="#6b9eb4" stroke-width="1"/>
<rect x="486.0" y="315.8" width="5.3" height="6.9" fill="#dc8c48" stroke="none" stroke-width="1"/>
<rect x="486.9" y="316.7" width="3.5" height="5.1" fill="#cbc8be" stroke="none" stroke-width="1"/>
<rect x="482.0" y="325.7" width="5.3" height="5.8" fill="#dc8c48" stroke="none" stroke-width="1"/>
<rect x="482.9" y="326.6" width="3.5" height="4.0" fill="#cbc8be" stroke="none" stroke-width="1"/>
<rect x="490.8" y="325.7" width="5.2" height="5.8" fill="#dc8c48" stroke="none" stroke-width="1"/>
<rect x="491.7" y="326.6" width="3.4" height="4.0" fill="#cbc8be" stroke="none" stroke-width="1"/>
<text x="509.5" y="313.0" font-size="9.52" fill="#141c0c" text-anchor="middle" textLength="10.16" lengthAdjust="spacingAndGlyphs">Q1</text>
<rect x="501.7" y="314.5" width="15.8" height="18.0" fill="none" stroke="#6b9eb4" stroke-width="1"/>
<rect x="507.0" y="315.8" width="5.3" height="6.9" fill="#dc8c48" stroke="none" stroke-width="1"/>
<rect x="507.9" y="316.7" width="3.5" height="5.1" fill="#cbc8be" stroke="none" stroke-width="1"/>
<rect x="503.0" y="325.7" width="5.3" height="5.8" fill="#dc8c48" stroke="none" stroke-width="1"/>
<rect x="503.9" y="326.6" width="3.5" height="4.0" fill="#cbc8be" stroke="none" stroke-width="1"/>
<rect x="511.8" y="325.7" width="5.2" height="5.8" fill="#dc8c48" stroke="none" stroke-width="1"/>
<rect x="512.7" y="326.6" width="3.4" height="4.0" fill="#cbc8be" stroke="none" stroke-width="1"/>
<rect x="500.9" y="333.5" width="13.8" height="7.6" fill="none" stroke="#6b9eb4" stroke-width="1"/>
<rect x="501.7" y="334.5" width="5.6" height="5.6" fill="#dc8c48" stroke="none" stroke-width="1"/>
<rect x="502.6" y="335.4" width="3.8" height="3.8" fill="#cbc8be" stroke="none" stroke-width="1"/>
<rect x="508.2" y="334.5" width="5.6" height="5.6" fill="#dc8c48" stroke="none" stroke-width="1"/>
<rect x="509.1" y="335.4" width="3.8" height="3.8" fill="#cbc8be" stroke="none" stroke-width="1"/>
<text x="500.0" y="340.5" font-size="9.52" fill="#141c0c" text-anchor="end" textLength="13.97" lengthAdjust="spacingAndGlyphs">R26</text>
<text x="583.0" y="309.5" font-size="9.52" fill="#141c0c" text-anchor="middle" textLength="8.04" lengthAdjust="spacingAndGlyphs">J9</text>
<rect x="520.5" y="311.5" width="123.5" height="20.0" fill="none" stroke="#6b9eb4" stroke-width="1"/>
<rect x="530.0" y="312.2" width="105.0" height="4.0" fill="#dc8c48" stroke="none" stroke-width="1"/>
<rect x="530.5" y="313.0" width="1.4" height="2.4" fill="#cbc8be" stroke="none" stroke-width="1"/>
<rect x="533.0" y="313.0" width="1.4" height="2.4" fill="#cbc8be" stroke="none" stroke-width="1"/>
<rect x="535.5" y="313.0" width="1.4" height="2.4" fill="#cbc8be" stroke="none" stroke-width="1"/>
<rect x="538.0" y="313.0" width="1.4" height="2.4" fill="#cbc8be" stroke="none" stroke-width="1"/>
<rect x="540.5" y="313.0" width="1.4" height="2.4" fill="#cbc8be" stroke="none" stroke-width="1"/>
<rect x="543.0" y="313.0" width="1.4" height="2.4" fill="#cbc8be" stroke="none" stroke-width="1"/>
<rect x="545.5" y="313.0" width="1.4" height="2.4" fill="#cbc8be" stroke="none" stroke-width="1"/>
<rect x="548.0" y="313.0" width="1.4" height="2.4" fill="#cbc8be" stroke="none" stroke-width="1"/>
<rect x="550.5" y="313.0" width="1.4" height="2.4" fill="#cbc8be" stroke="none" stroke-width="1"/>
<rect x="553.0" y="313.0" width="1.4" height="2.4" fill="#cbc8be" stroke="none" stroke-width="1"/>
<rect x="555.5" y="313.0" width="1.4" height="2.4" fill="#cbc8be" stroke="none" stroke-width="1"/>
<rect x="558.0" y="313.0" width="1.4" height="2.4" fill="#cbc8be" stroke="none" stroke-width="1"/>
<rect x="560.5" y="313.0" width="1.4" height="2.4" fill="#cbc8be" stroke="none" stroke-width="1"/>
<rect x="563.0" y="313.0" width="1.4" height="2.4" fill="#cbc8be" stroke="none" stroke-width="1"/>
<rect x="565.5" y="313.0" width="1.4" height="2.4" fill="#cbc8be" stroke="none" stroke-width="1"/>
<rect x="568.0" y="313.0" width="1.4" height="2.4" fill="#cbc8be" stroke="none" stroke-width="1"/>
<rect x="570.5" y="313.0" width="1.4" height="2.4" fill="#cbc8be" stroke="none" stroke-width="1"/>
<rect x="573.0" y="313.0" width="1.4" height="2.4" fill="#cbc8be" stroke="none" stroke-width="1"/>
<rect x="575.5" y="313.0" width="1.4" height="2.4" fill="#cbc8be" stroke="none" stroke-width="1"/>
<rect x="578.0" y="313.0" width="1.4" height="2.4" fill="#cbc8be" stroke="none" stroke-width="1"/>
<rect x="580.5" y="313.0" width="1.4" height="2.4" fill="#cbc8be" stroke="none" stroke-width="1"/>
<rect x="583.0" y="313.0" width="1.4" height="2.4" fill="#cbc8be" stroke="none" stroke-width="1"/>
<rect x="585.5" y="313.0" width="1.4" height="2.4" fill="#cbc8be" stroke="none" stroke-width="1"/>
<rect x="588.0" y="313.0" width="1.4" height="2.4" fill="#cbc8be" stroke="none" stroke-width="1"/>
<rect x="590.5" y="313.0" width="1.4" height="2.4" fill="#cbc8be" stroke="none" stroke-width="1"/>
<rect x="593.0" y="313.0" width="1.4" height="2.4" fill="#cbc8be" stroke="none" stroke-width="1"/>
<rect x="595.5" y="313.0" width="1.4" height="2.4" fill="#cbc8be" stroke="none" stroke-width="1"/>
<rect x="598.0" y="313.0" width="1.4" height="2.4" fill="#cbc8be" stroke="none" stroke-width="1"/>
<rect x="600.5" y="313.0" width="1.4" height="2.4" fill="#cbc8be" stroke="none" stroke-width="1"/>
<rect x="603.0" y="313.0" width="1.4" height="2.4" fill="#cbc8be" stroke="none" stroke-width="1"/>
<rect x="605.5" y="313.0" width="1.4" height="2.4" fill="#cbc8be" stroke="none" stroke-width="1"/>
<rect x="608.0" y="313.0" width="1.4" height="2.4" fill="#cbc8be" stroke="none" stroke-width="1"/>
<rect x="610.5" y="313.0" width="1.4" height="2.4" fill="#cbc8be" stroke="none" stroke-width="1"/>
<rect x="613.0" y="313.0" width="1.4" height="2.4" fill="#cbc8be" stroke="none" stroke-width="1"/>
<rect x="615.5" y="313.0" width="1.4" height="2.4" fill="#cbc8be" stroke="none" stroke-width="1"/>
<rect x="618.0" y="313.0" width="1.4" height="2.4" fill="#cbc8be" stroke="none" stroke-width="1"/>
<rect x="620.5" y="313.0" width="1.4" height="2.4" fill="#cbc8be" stroke="none" stroke-width="1"/>
<rect x="623.0" y="313.0" width="1.4" height="2.4" fill="#cbc8be" stroke="none" stroke-width="1"/>
<rect x="625.5" y="313.0" width="1.4" height="2.4" fill="#cbc8be" stroke="none" stroke-width="1"/>
<rect x="628.0" y="313.0" width="1.4" height="2.4" fill="#cbc8be" stroke="none" stroke-width="1"/>
<rect x="630.5" y="313.0" width="1.4" height="2.4" fill="#cbc8be" stroke="none" stroke-width="1"/>
<rect x="633.0" y="313.0" width="1.4" height="2.4" fill="#cbc8be" stroke="none" stroke-width="1"/>
<rect x="521.5" y="324.5" width="6.5" height="6.5" fill="#dc8c48" stroke="none" stroke-width="1"/>
<rect x="522.4" y="325.4" width="4.7" height="4.7" fill="#cbc8be" stroke="none" stroke-width="1"/>
<rect x="637.5" y="324.5" width="6.5" height="6.5" fill="#dc8c48" stroke="none" stroke-width="1"/>
<rect x="638.4" y="325.4" width="4.7" height="4.7" fill="#cbc8be" stroke="none" stroke-width="1"/>
<circle cx="608.8" cy="339.2" r="7.3" fill="#e6873a"/>
<rect x="662.5" y="307.5" width="14.0" height="7.5" fill="none" stroke="#6b9eb4" stroke-width="1"/>
<rect x="663.4" y="308.5" width="5.7" height="5.5" fill="#dc8c48" stroke="none" stroke-width="1"/>
<rect x="664.2" y="309.4" width="3.9" height="3.7" fill="#cbc8be" stroke="none" stroke-width="1"/>
<rect x="669.9" y="308.5" width="5.7" height="5.5" fill="#dc8c48" stroke="none" stroke-width="1"/>
<rect x="670.8" y="309.4" width="3.9" height="3.7" fill="#cbc8be" stroke="none" stroke-width="1"/>
<text x="669.5" y="305.5" font-size="9.52" fill="#141c0c" text-anchor="middle" textLength="13.97" lengthAdjust="spacingAndGlyphs">C56</text>
<rect x="651.5" y="316.5" width="37.0" height="24.0" fill="none" stroke="#6b9eb4" stroke-width="1"/>
<rect x="653.5" y="318.5" width="13" height="3.6" rx="1.8" fill="#cbc8be"/>
<rect x="673.5" y="318.5" width="13" height="3.6" rx="1.8" fill="#cbc8be"/>
<rect x="653.5" y="324.3" width="13" height="3.6" rx="1.8" fill="#cbc8be"/>
<rect x="673.5" y="324.3" width="13" height="3.6" rx="1.8" fill="#cbc8be"/>
<rect x="653.5" y="330.1" width="13" height="3.6" rx="1.8" fill="#cbc8be"/>
<rect x="673.5" y="330.1" width="13" height="3.6" rx="1.8" fill="#cbc8be"/>
<rect x="653.5" y="335.9" width="13" height="3.6" rx="1.8" fill="#cbc8be"/>
<rect x="673.5" y="335.9" width="13" height="3.6" rx="1.8" fill="#cbc8be"/>
<circle cx="669.4" cy="338.0" r="6.4" fill="#e6873a"/>
<text x="669.5" y="350.0" font-size="9.52" fill="#141c0c" text-anchor="middle" textLength="13.97" lengthAdjust="spacingAndGlyphs">U23</text>
<rect x="416.5" y="396.5" width="31.5" height="36.0" fill="none" stroke="#6b9eb4" stroke-width="1"/>
<rect x="418.5" y="398.0" width="27.5" height="8.5" fill="#dc8c48" stroke="none" stroke-width="1"/>
<rect x="419.2" y="398.8" width="1.7" height="6.9" fill="#cbc8be" stroke="none" stroke-width="1"/>
<rect x="422.2" y="398.8" width="1.7" height="6.9" fill="#cbc8be" stroke="none" stroke-width="1"/>
<rect x="425.3" y="398.8" width="1.7" height="6.9" fill="#cbc8be" stroke="none" stroke-width="1"/>
<rect x="428.3" y="398.8" width="1.7" height="6.9" fill="#cbc8be" stroke="none" stroke-width="1"/>
<rect x="431.4" y="398.8" width="1.7" height="6.9" fill="#cbc8be" stroke="none" stroke-width="1"/>
<rect x="434.4" y="398.8" width="1.7" height="6.9" fill="#cbc8be" stroke="none" stroke-width="1"/>
<rect x="437.5" y="398.8" width="1.7" height="6.9" fill="#cbc8be" stroke="none" stroke-width="1"/>
<rect x="440.6" y="398.8" width="1.7" height="6.9" fill="#cbc8be" stroke="none" stroke-width="1"/>
<rect x="443.6" y="398.8" width="1.7" height="6.9" fill="#cbc8be" stroke="none" stroke-width="1"/>
<rect x="418.5" y="422.5" width="27.5" height="8.5" fill="#dc8c48" stroke="none" stroke-width="1"/>
<rect x="419.2" y="423.3" width="1.7" height="6.9" fill="#cbc8be" stroke="none" stroke-width="1"/>
<rect x="422.2" y="423.3" width="1.7" height="6.9" fill="#cbc8be" stroke="none" stroke-width="1"/>
<rect x="425.3" y="423.3" width="1.7" height="6.9" fill="#cbc8be" stroke="none" stroke-width="1"/>
<rect x="428.3" y="423.3" width="1.7" height="6.9" fill="#cbc8be" stroke="none" stroke-width="1"/>
<rect x="431.4" y="423.3" width="1.7" height="6.9" fill="#cbc8be" stroke="none" stroke-width="1"/>
<rect x="434.4" y="423.3" width="1.7" height="6.9" fill="#cbc8be" stroke="none" stroke-width="1"/>
<rect x="437.5" y="423.3" width="1.7" height="6.9" fill="#cbc8be" stroke="none" stroke-width="1"/>
<rect x="440.6" y="423.3" width="1.7" height="6.9" fill="#cbc8be" stroke="none" stroke-width="1"/>
<rect x="443.6" y="423.3" width="1.7" height="6.9" fill="#cbc8be" stroke="none" stroke-width="1"/>
<text x="432.2" y="417.9" font-size="10.64" fill="#141c0c" text-anchor="middle" textLength="15.62" lengthAdjust="spacingAndGlyphs">U21</text>
<rect x="407.0" y="406.1" width="7.0" height="14.4" fill="none" stroke="#6b9eb4" stroke-width="1"/>
<rect x="408.0" y="407.2" width="5.0" height="5.5" fill="#dc8c48" stroke="none" stroke-width="1"/>
<rect x="408.9" y="408.1" width="3.2" height="3.7" fill="#cbc8be" stroke="none" stroke-width="1"/>
<rect x="408.0" y="413.9" width="5.0" height="5.5" fill="#dc8c48" stroke="none" stroke-width="1"/>
<rect x="408.9" y="414.8" width="3.2" height="3.7" fill="#cbc8be" stroke="none" stroke-width="1"/>
<text x="410.5" y="404.0" font-size="4.5" fill="#141c0c" text-anchor="middle">C51</text>
<rect x="450.0" y="406.1" width="7.0" height="14.4" fill="none" stroke="#6b9eb4" stroke-width="1"/>
<rect x="451.0" y="407.2" width="5.0" height="5.5" fill="#dc8c48" stroke="none" stroke-width="1"/>
<rect x="451.9" y="408.1" width="3.2" height="3.7" fill="#cbc8be" stroke="none" stroke-width="1"/>
<rect x="451.0" y="413.9" width="5.0" height="5.5" fill="#dc8c48" stroke="none" stroke-width="1"/>
<rect x="451.9" y="414.8" width="3.2" height="3.7" fill="#cbc8be" stroke="none" stroke-width="1"/>
<text x="453.5" y="404.0" font-size="4.5" fill="#141c0c" text-anchor="middle">C52</text>
<rect x="458.5" y="396.5" width="37.0" height="35.5" fill="none" stroke="#6b9eb4" stroke-width="1"/>
<rect x="460.8" y="398.0" width="2.1" height="9.0" fill="#dc8c48" stroke="none" stroke-width="1"/>
<rect x="461.3" y="398.7" width="1.2" height="7.6" fill="#cbc8be" stroke="none" stroke-width="1"/>
<rect x="463.6" y="398.0" width="2.1" height="9.0" fill="#dc8c48" stroke="none" stroke-width="1"/>
<rect x="464.0" y="398.7" width="1.2" height="7.6" fill="#cbc8be" stroke="none" stroke-width="1"/>
<rect x="466.3" y="398.0" width="2.1" height="9.0" fill="#dc8c48" stroke="none" stroke-width="1"/>
<rect x="466.8" y="398.7" width="1.2" height="7.6" fill="#cbc8be" stroke="none" stroke-width="1"/>
<rect x="469.1" y="398.0" width="2.1" height="9.0" fill="#dc8c48" stroke="none" stroke-width="1"/>
<rect x="469.5" y="398.7" width="1.2" height="7.6" fill="#cbc8be" stroke="none" stroke-width="1"/>
<rect x="471.8" y="398.0" width="2.1" height="9.0" fill="#dc8c48" stroke="none" stroke-width="1"/>
<rect x="472.3" y="398.7" width="1.2" height="7.6" fill="#cbc8be" stroke="none" stroke-width="1"/>
<rect x="474.6" y="398.0" width="2.1" height="9.0" fill="#dc8c48" stroke="none" stroke-width="1"/>
<rect x="475.0" y="398.7" width="1.2" height="7.6" fill="#cbc8be" stroke="none" stroke-width="1"/>
<rect x="477.3" y="398.0" width="2.1" height="9.0" fill="#dc8c48" stroke="none" stroke-width="1"/>
<rect x="477.8" y="398.7" width="1.2" height="7.6" fill="#cbc8be" stroke="none" stroke-width="1"/>
<rect x="480.1" y="398.0" width="2.1" height="9.0" fill="#dc8c48" stroke="none" stroke-width="1"/>
<rect x="480.5" y="398.7" width="1.2" height="7.6" fill="#cbc8be" stroke="none" stroke-width="1"/>
<rect x="482.8" y="398.0" width="2.1" height="9.0" fill="#dc8c48" stroke="none" stroke-width="1"/>
<rect x="483.3" y="398.7" width="1.2" height="7.6" fill="#cbc8be" stroke="none" stroke-width="1"/>
<rect x="485.6" y="398.0" width="2.1" height="9.0" fill="#dc8c48" stroke="none" stroke-width="1"/>
<rect x="486.0" y="398.7" width="1.2" height="7.6" fill="#cbc8be" stroke="none" stroke-width="1"/>
<rect x="488.3" y="398.0" width="2.1" height="9.0" fill="#dc8c48" stroke="none" stroke-width="1"/>
<rect x="488.8" y="398.7" width="1.2" height="7.6" fill="#cbc8be" stroke="none" stroke-width="1"/>
<rect x="491.1" y="398.0" width="2.1" height="9.0" fill="#dc8c48" stroke="none" stroke-width="1"/>
<rect x="491.5" y="398.7" width="1.2" height="7.6" fill="#cbc8be" stroke="none" stroke-width="1"/>
<rect x="460.8" y="421.5" width="2.1" height="9.0" fill="#dc8c48" stroke="none" stroke-width="1"/>
<rect x="461.3" y="422.2" width="1.2" height="7.6" fill="#cbc8be" stroke="none" stroke-width="1"/>
<rect x="463.6" y="421.5" width="2.1" height="9.0" fill="#dc8c48" stroke="none" stroke-width="1"/>
<rect x="464.0" y="422.2" width="1.2" height="7.6" fill="#cbc8be" stroke="none" stroke-width="1"/>
<rect x="466.3" y="421.5" width="2.1" height="9.0" fill="#dc8c48" stroke="none" stroke-width="1"/>
<rect x="466.8" y="422.2" width="1.2" height="7.6" fill="#cbc8be" stroke="none" stroke-width="1"/>
<rect x="469.1" y="421.5" width="2.1" height="9.0" fill="#dc8c48" stroke="none" stroke-width="1"/>
<rect x="469.5" y="422.2" width="1.2" height="7.6" fill="#cbc8be" stroke="none" stroke-width="1"/>
<rect x="471.8" y="421.5" width="2.1" height="9.0" fill="#dc8c48" stroke="none" stroke-width="1"/>
<rect x="472.3" y="422.2" width="1.2" height="7.6" fill="#cbc8be" stroke="none" stroke-width="1"/>
<rect x="474.6" y="421.5" width="2.1" height="9.0" fill="#dc8c48" stroke="none" stroke-width="1"/>
<rect x="475.0" y="422.2" width="1.2" height="7.6" fill="#cbc8be" stroke="none" stroke-width="1"/>
<rect x="477.3" y="421.5" width="2.1" height="9.0" fill="#dc8c48" stroke="none" stroke-width="1"/>
<rect x="477.8" y="422.2" width="1.2" height="7.6" fill="#cbc8be" stroke="none" stroke-width="1"/>
<rect x="480.1" y="421.5" width="2.1" height="9.0" fill="#dc8c48" stroke="none" stroke-width="1"/>
<rect x="480.5" y="422.2" width="1.2" height="7.6" fill="#cbc8be" stroke="none" stroke-width="1"/>
<rect x="482.8" y="421.5" width="2.1" height="9.0" fill="#dc8c48" stroke="none" stroke-width="1"/>
<rect x="483.3" y="422.2" width="1.2" height="7.6" fill="#cbc8be" stroke="none" stroke-width="1"/>
<rect x="485.6" y="421.5" width="2.1" height="9.0" fill="#dc8c48" stroke="none" stroke-width="1"/>
<rect x="486.0" y="422.2" width="1.2" height="7.6" fill="#cbc8be" stroke="none" stroke-width="1"/>
<rect x="488.3" y="421.5" width="2.1" height="9.0" fill="#dc8c48" stroke="none" stroke-width="1"/>
<rect x="488.8" y="422.2" width="1.2" height="7.6" fill="#cbc8be" stroke="none" stroke-width="1"/>
<rect x="491.1" y="421.5" width="2.1" height="9.0" fill="#dc8c48" stroke="none" stroke-width="1"/>
<rect x="491.5" y="422.2" width="1.2" height="7.6" fill="#cbc8be" stroke="none" stroke-width="1"/>
<text x="477.0" y="394.7" font-size="9.52" fill="#141c0c" text-anchor="middle" textLength="9.73" lengthAdjust="spacingAndGlyphs">U6</text>
<rect x="498.2" y="395.2" width="7.7" height="13.7" fill="none" stroke="#6b9eb4" stroke-width="1"/>
<rect x="499.2" y="396.0" width="5.7" height="5.6" fill="#dc8c48" stroke="none" stroke-width="1"/>
<rect x="500.1" y="396.9" width="3.9" height="3.8" fill="#cbc8be" stroke="none" stroke-width="1"/>
<rect x="499.2" y="402.5" width="5.7" height="5.6" fill="#dc8c48" stroke="none" stroke-width="1"/>
<rect x="500.1" y="403.4" width="3.9" height="3.8" fill="#cbc8be" stroke="none" stroke-width="1"/>
<text x="502.0" y="393.0" font-size="4.5" fill="#141c0c" text-anchor="middle">C16</text>
<rect x="498.2" y="419.2" width="7.7" height="13.7" fill="none" stroke="#6b9eb4" stroke-width="1"/>
<rect x="499.2" y="420.0" width="5.7" height="5.6" fill="#dc8c48" stroke="none" stroke-width="1"/>
<rect x="500.1" y="420.9" width="3.9" height="3.8" fill="#cbc8be" stroke="none" stroke-width="1"/>
<rect x="499.2" y="426.5" width="5.7" height="5.6" fill="#dc8c48" stroke="none" stroke-width="1"/>
<rect x="500.1" y="427.4" width="3.9" height="3.8" fill="#cbc8be" stroke="none" stroke-width="1"/>
<text x="502.0" y="417.0" font-size="4.5" fill="#141c0c" text-anchor="middle">C30</text>
<rect x="508.1" y="396.5" width="37.0" height="35.5" fill="none" stroke="#6b9eb4" stroke-width="1"/>
<rect x="510.4" y="398.0" width="2.1" height="9.0" fill="#dc8c48" stroke="none" stroke-width="1"/>
<rect x="510.9" y="398.7" width="1.2" height="7.6" fill="#cbc8be" stroke="none" stroke-width="1"/>
<rect x="513.2" y="398.0" width="2.1" height="9.0" fill="#dc8c48" stroke="none" stroke-width="1"/>
<rect x="513.6" y="398.7" width="1.2" height="7.6" fill="#cbc8be" stroke="none" stroke-width="1"/>
<rect x="515.9" y="398.0" width="2.1" height="9.0" fill="#dc8c48" stroke="none" stroke-width="1"/>
<rect x="516.4" y="398.7" width="1.2" height="7.6" fill="#cbc8be" stroke="none" stroke-width="1"/>
<rect x="518.7" y="398.0" width="2.1" height="9.0" fill="#dc8c48" stroke="none" stroke-width="1"/>
<rect x="519.1" y="398.7" width="1.2" height="7.6" fill="#cbc8be" stroke="none" stroke-width="1"/>
<rect x="521.4" y="398.0" width="2.1" height="9.0" fill="#dc8c48" stroke="none" stroke-width="1"/>
<rect x="521.9" y="398.7" width="1.2" height="7.6" fill="#cbc8be" stroke="none" stroke-width="1"/>
<rect x="524.2" y="398.0" width="2.1" height="9.0" fill="#dc8c48" stroke="none" stroke-width="1"/>
<rect x="524.6" y="398.7" width="1.2" height="7.6" fill="#cbc8be" stroke="none" stroke-width="1"/>
<rect x="526.9" y="398.0" width="2.1" height="9.0" fill="#dc8c48" stroke="none" stroke-width="1"/>
<rect x="527.4" y="398.7" width="1.2" height="7.6" fill="#cbc8be" stroke="none" stroke-width="1"/>
<rect x="529.7" y="398.0" width="2.1" height="9.0" fill="#dc8c48" stroke="none" stroke-width="1"/>
<rect x="530.1" y="398.7" width="1.2" height="7.6" fill="#cbc8be" stroke="none" stroke-width="1"/>
<rect x="532.4" y="398.0" width="2.1" height="9.0" fill="#dc8c48" stroke="none" stroke-width="1"/>
<rect x="532.9" y="398.7" width="1.2" height="7.6" fill="#cbc8be" stroke="none" stroke-width="1"/>
<rect x="535.2" y="398.0" width="2.1" height="9.0" fill="#dc8c48" stroke="none" stroke-width="1"/>
<rect x="535.6" y="398.7" width="1.2" height="7.6" fill="#cbc8be" stroke="none" stroke-width="1"/>
<rect x="537.9" y="398.0" width="2.1" height="9.0" fill="#dc8c48" stroke="none" stroke-width="1"/>
<rect x="538.4" y="398.7" width="1.2" height="7.6" fill="#cbc8be" stroke="none" stroke-width="1"/>
<rect x="540.7" y="398.0" width="2.1" height="9.0" fill="#dc8c48" stroke="none" stroke-width="1"/>
<rect x="541.1" y="398.7" width="1.2" height="7.6" fill="#cbc8be" stroke="none" stroke-width="1"/>
<rect x="510.4" y="421.5" width="2.1" height="9.0" fill="#dc8c48" stroke="none" stroke-width="1"/>
<rect x="510.9" y="422.2" width="1.2" height="7.6" fill="#cbc8be" stroke="none" stroke-width="1"/>
<rect x="513.2" y="421.5" width="2.1" height="9.0" fill="#dc8c48" stroke="none" stroke-width="1"/>
<rect x="513.6" y="422.2" width="1.2" height="7.6" fill="#cbc8be" stroke="none" stroke-width="1"/>
<rect x="515.9" y="421.5" width="2.1" height="9.0" fill="#dc8c48" stroke="none" stroke-width="1"/>
<rect x="516.4" y="422.2" width="1.2" height="7.6" fill="#cbc8be" stroke="none" stroke-width="1"/>
<rect x="518.7" y="421.5" width="2.1" height="9.0" fill="#dc8c48" stroke="none" stroke-width="1"/>
<rect x="519.1" y="422.2" width="1.2" height="7.6" fill="#cbc8be" stroke="none" stroke-width="1"/>
<rect x="521.4" y="421.5" width="2.1" height="9.0" fill="#dc8c48" stroke="none" stroke-width="1"/>
<rect x="521.9" y="422.2" width="1.2" height="7.6" fill="#cbc8be" stroke="none" stroke-width="1"/>
<rect x="524.2" y="421.5" width="2.1" height="9.0" fill="#dc8c48" stroke="none" stroke-width="1"/>
<rect x="524.6" y="422.2" width="1.2" height="7.6" fill="#cbc8be" stroke="none" stroke-width="1"/>
<rect x="526.9" y="421.5" width="2.1" height="9.0" fill="#dc8c48" stroke="none" stroke-width="1"/>
<rect x="527.4" y="422.2" width="1.2" height="7.6" fill="#cbc8be" stroke="none" stroke-width="1"/>
<rect x="529.7" y="421.5" width="2.1" height="9.0" fill="#dc8c48" stroke="none" stroke-width="1"/>
<rect x="530.1" y="422.2" width="1.2" height="7.6" fill="#cbc8be" stroke="none" stroke-width="1"/>
<rect x="532.4" y="421.5" width="2.1" height="9.0" fill="#dc8c48" stroke="none" stroke-width="1"/>
<rect x="532.9" y="422.2" width="1.2" height="7.6" fill="#cbc8be" stroke="none" stroke-width="1"/>
<rect x="535.2" y="421.5" width="2.1" height="9.0" fill="#dc8c48" stroke="none" stroke-width="1"/>
<rect x="535.6" y="422.2" width="1.2" height="7.6" fill="#cbc8be" stroke="none" stroke-width="1"/>
<rect x="537.9" y="421.5" width="2.1" height="9.0" fill="#dc8c48" stroke="none" stroke-width="1"/>
<rect x="538.4" y="422.2" width="1.2" height="7.6" fill="#cbc8be" stroke="none" stroke-width="1"/>
<rect x="540.7" y="421.5" width="2.1" height="9.0" fill="#dc8c48" stroke="none" stroke-width="1"/>
<rect x="541.1" y="422.2" width="1.2" height="7.6" fill="#cbc8be" stroke="none" stroke-width="1"/>
<text x="526.6" y="394.7" font-size="9.52" fill="#141c0c" text-anchor="middle" textLength="9.73" lengthAdjust="spacingAndGlyphs">U8</text>
<rect x="547.8" y="395.2" width="7.7" height="13.7" fill="none" stroke="#6b9eb4" stroke-width="1"/>
<rect x="548.8" y="396.0" width="5.7" height="5.6" fill="#dc8c48" stroke="none" stroke-width="1"/>
<rect x="549.7" y="396.9" width="3.9" height="3.8" fill="#cbc8be" stroke="none" stroke-width="1"/>
<rect x="548.8" y="402.5" width="5.7" height="5.6" fill="#dc8c48" stroke="none" stroke-width="1"/>
<rect x="549.7" y="403.4" width="3.9" height="3.8" fill="#cbc8be" stroke="none" stroke-width="1"/>
<text x="551.6" y="393.0" font-size="4.5" fill="#141c0c" text-anchor="middle">C17</text>
<rect x="547.8" y="419.2" width="7.7" height="13.7" fill="none" stroke="#6b9eb4" stroke-width="1"/>
<rect x="548.8" y="420.0" width="5.7" height="5.6" fill="#dc8c48" stroke="none" stroke-width="1"/>
<rect x="549.7" y="420.9" width="3.9" height="3.8" fill="#cbc8be" stroke="none" stroke-width="1"/>
<rect x="548.8" y="426.5" width="5.7" height="5.6" fill="#dc8c48" stroke="none" stroke-width="1"/>
<rect x="549.7" y="427.4" width="3.9" height="3.8" fill="#cbc8be" stroke="none" stroke-width="1"/>
<text x="551.6" y="417.0" font-size="4.5" fill="#141c0c" text-anchor="middle">C31</text>
<rect x="557.5" y="396.5" width="37.0" height="35.5" fill="none" stroke="#6b9eb4" stroke-width="1"/>
<rect x="559.8" y="398.0" width="2.1" height="9.0" fill="#dc8c48" stroke="none" stroke-width="1"/>
<rect x="560.3" y="398.7" width="1.2" height="7.6" fill="#cbc8be" stroke="none" stroke-width="1"/>
<rect x="562.6" y="398.0" width="2.1" height="9.0" fill="#dc8c48" stroke="none" stroke-width="1"/>
<rect x="563.0" y="398.7" width="1.2" height="7.6" fill="#cbc8be" stroke="none" stroke-width="1"/>
<rect x="565.3" y="398.0" width="2.1" height="9.0" fill="#dc8c48" stroke="none" stroke-width="1"/>
<rect x="565.8" y="398.7" width="1.2" height="7.6" fill="#cbc8be" stroke="none" stroke-width="1"/>
<rect x="568.1" y="398.0" width="2.1" height="9.0" fill="#dc8c48" stroke="none" stroke-width="1"/>
<rect x="568.5" y="398.7" width="1.2" height="7.6" fill="#cbc8be" stroke="none" stroke-width="1"/>
<rect x="570.8" y="398.0" width="2.1" height="9.0" fill="#dc8c48" stroke="none" stroke-width="1"/>
<rect x="571.3" y="398.7" width="1.2" height="7.6" fill="#cbc8be" stroke="none" stroke-width="1"/>
<rect x="573.6" y="398.0" width="2.1" height="9.0" fill="#dc8c48" stroke="none" stroke-width="1"/>
<rect x="574.0" y="398.7" width="1.2" height="7.6" fill="#cbc8be" stroke="none" stroke-width="1"/>
<rect x="576.3" y="398.0" width="2.1" height="9.0" fill="#dc8c48" stroke="none" stroke-width="1"/>
<rect x="576.8" y="398.7" width="1.2" height="7.6" fill="#cbc8be" stroke="none" stroke-width="1"/>
<rect x="579.1" y="398.0" width="2.1" height="9.0" fill="#dc8c48" stroke="none" stroke-width="1"/>
<rect x="579.5" y="398.7" width="1.2" height="7.6" fill="#cbc8be" stroke="none" stroke-width="1"/>
<rect x="581.8" y="398.0" width="2.1" height="9.0" fill="#dc8c48" stroke="none" stroke-width="1"/>
<rect x="582.3" y="398.7" width="1.2" height="7.6" fill="#cbc8be" stroke="none" stroke-width="1"/>
<rect x="584.6" y="398.0" width="2.1" height="9.0" fill="#dc8c48" stroke="none" stroke-width="1"/>
<rect x="585.0" y="398.7" width="1.2" height="7.6" fill="#cbc8be" stroke="none" stroke-width="1"/>
<rect x="587.3" y="398.0" width="2.1" height="9.0" fill="#dc8c48" stroke="none" stroke-width="1"/>
<rect x="587.8" y="398.7" width="1.2" height="7.6" fill="#cbc8be" stroke="none" stroke-width="1"/>
<rect x="590.1" y="398.0" width="2.1" height="9.0" fill="#dc8c48" stroke="none" stroke-width="1"/>
<rect x="590.5" y="398.7" width="1.2" height="7.6" fill="#cbc8be" stroke="none" stroke-width="1"/>
<rect x="559.8" y="421.5" width="2.1" height="9.0" fill="#dc8c48" stroke="none" stroke-width="1"/>
<rect x="560.3" y="422.2" width="1.2" height="7.6" fill="#cbc8be" stroke="none" stroke-width="1"/>
<rect x="562.6" y="421.5" width="2.1" height="9.0" fill="#dc8c48" stroke="none" stroke-width="1"/>
<rect x="563.0" y="422.2" width="1.2" height="7.6" fill="#cbc8be" stroke="none" stroke-width="1"/>
<rect x="565.3" y="421.5" width="2.1" height="9.0" fill="#dc8c48" stroke="none" stroke-width="1"/>
<rect x="565.8" y="422.2" width="1.2" height="7.6" fill="#cbc8be" stroke="none" stroke-width="1"/>
<rect x="568.1" y="421.5" width="2.1" height="9.0" fill="#dc8c48" stroke="none" stroke-width="1"/>
<rect x="568.5" y="422.2" width="1.2" height="7.6" fill="#cbc8be" stroke="none" stroke-width="1"/>
<rect x="570.8" y="421.5" width="2.1" height="9.0" fill="#dc8c48" stroke="none" stroke-width="1"/>
<rect x="571.3" y="422.2" width="1.2" height="7.6" fill="#cbc8be" stroke="none" stroke-width="1"/>
<rect x="573.6" y="421.5" width="2.1" height="9.0" fill="#dc8c48" stroke="none" stroke-width="1"/>
<rect x="574.0" y="422.2" width="1.2" height="7.6" fill="#cbc8be" stroke="none" stroke-width="1"/>
<rect x="576.3" y="421.5" width="2.1" height="9.0" fill="#dc8c48" stroke="none" stroke-width="1"/>
<rect x="576.8" y="422.2" width="1.2" height="7.6" fill="#cbc8be" stroke="none" stroke-width="1"/>
<rect x="579.1" y="421.5" width="2.1" height="9.0" fill="#dc8c48" stroke="none" stroke-width="1"/>
<rect x="579.5" y="422.2" width="1.2" height="7.6" fill="#cbc8be" stroke="none" stroke-width="1"/>
<rect x="581.8" y="421.5" width="2.1" height="9.0" fill="#dc8c48" stroke="none" stroke-width="1"/>
<rect x="582.3" y="422.2" width="1.2" height="7.6" fill="#cbc8be" stroke="none" stroke-width="1"/>
<rect x="584.6" y="421.5" width="2.1" height="9.0" fill="#dc8c48" stroke="none" stroke-width="1"/>
<rect x="585.0" y="422.2" width="1.2" height="7.6" fill="#cbc8be" stroke="none" stroke-width="1"/>
<rect x="587.3" y="421.5" width="2.1" height="9.0" fill="#dc8c48" stroke="none" stroke-width="1"/>
<rect x="587.8" y="422.2" width="1.2" height="7.6" fill="#cbc8be" stroke="none" stroke-width="1"/>
<rect x="590.1" y="421.5" width="2.1" height="9.0" fill="#dc8c48" stroke="none" stroke-width="1"/>
<rect x="590.5" y="422.2" width="1.2" height="7.6" fill="#cbc8be" stroke="none" stroke-width="1"/>
<text x="576.0" y="394.7" font-size="9.52" fill="#141c0c" text-anchor="middle" textLength="9.73" lengthAdjust="spacingAndGlyphs">U9</text>
<rect x="597.2" y="395.2" width="7.7" height="13.7" fill="none" stroke="#6b9eb4" stroke-width="1"/>
<rect x="598.2" y="396.0" width="5.7" height="5.6" fill="#dc8c48" stroke="none" stroke-width="1"/>
<rect x="599.1" y="396.9" width="3.9" height="3.8" fill="#cbc8be" stroke="none" stroke-width="1"/>
<rect x="598.2" y="402.5" width="5.7" height="5.6" fill="#dc8c48" stroke="none" stroke-width="1"/>
<rect x="599.1" y="403.4" width="3.9" height="3.8" fill="#cbc8be" stroke="none" stroke-width="1"/>
<text x="601.0" y="393.0" font-size="4.5" fill="#141c0c" text-anchor="middle">C10</text>
<rect x="597.2" y="419.2" width="7.7" height="13.7" fill="none" stroke="#6b9eb4" stroke-width="1"/>
<rect x="598.2" y="420.0" width="5.7" height="5.6" fill="#dc8c48" stroke="none" stroke-width="1"/>
<rect x="599.1" y="420.9" width="3.9" height="3.8" fill="#cbc8be" stroke="none" stroke-width="1"/>
<rect x="598.2" y="426.5" width="5.7" height="5.6" fill="#dc8c48" stroke="none" stroke-width="1"/>
<rect x="599.1" y="427.4" width="3.9" height="3.8" fill="#cbc8be" stroke="none" stroke-width="1"/>
<text x="601.0" y="417.0" font-size="4.5" fill="#141c0c" text-anchor="middle">C32</text>
<rect x="608.5" y="396.5" width="37.0" height="35.5" fill="none" stroke="#6b9eb4" stroke-width="1"/>
<rect x="610.8" y="398.0" width="2.1" height="9.0" fill="#dc8c48" stroke="none" stroke-width="1"/>
<rect x="611.3" y="398.7" width="1.2" height="7.6" fill="#cbc8be" stroke="none" stroke-width="1"/>
<rect x="613.6" y="398.0" width="2.1" height="9.0" fill="#dc8c48" stroke="none" stroke-width="1"/>
<rect x="614.0" y="398.7" width="1.2" height="7.6" fill="#cbc8be" stroke="none" stroke-width="1"/>
<rect x="616.3" y="398.0" width="2.1" height="9.0" fill="#dc8c48" stroke="none" stroke-width="1"/>
<rect x="616.8" y="398.7" width="1.2" height="7.6" fill="#cbc8be" stroke="none" stroke-width="1"/>
<rect x="619.1" y="398.0" width="2.1" height="9.0" fill="#dc8c48" stroke="none" stroke-width="1"/>
<rect x="619.5" y="398.7" width="1.2" height="7.6" fill="#cbc8be" stroke="none" stroke-width="1"/>
<rect x="621.8" y="398.0" width="2.1" height="9.0" fill="#dc8c48" stroke="none" stroke-width="1"/>
<rect x="622.3" y="398.7" width="1.2" height="7.6" fill="#cbc8be" stroke="none" stroke-width="1"/>
<rect x="624.6" y="398.0" width="2.1" height="9.0" fill="#dc8c48" stroke="none" stroke-width="1"/>
<rect x="625.0" y="398.7" width="1.2" height="7.6" fill="#cbc8be" stroke="none" stroke-width="1"/>
<rect x="627.3" y="398.0" width="2.1" height="9.0" fill="#dc8c48" stroke="none" stroke-width="1"/>
<rect x="627.8" y="398.7" width="1.2" height="7.6" fill="#cbc8be" stroke="none" stroke-width="1"/>
<rect x="630.1" y="398.0" width="2.1" height="9.0" fill="#dc8c48" stroke="none" stroke-width="1"/>
<rect x="630.5" y="398.7" width="1.2" height="7.6" fill="#cbc8be" stroke="none" stroke-width="1"/>
<rect x="632.8" y="398.0" width="2.1" height="9.0" fill="#dc8c48" stroke="none" stroke-width="1"/>
<rect x="633.3" y="398.7" width="1.2" height="7.6" fill="#cbc8be" stroke="none" stroke-width="1"/>
<rect x="635.6" y="398.0" width="2.1" height="9.0" fill="#dc8c48" stroke="none" stroke-width="1"/>
<rect x="636.0" y="398.7" width="1.2" height="7.6" fill="#cbc8be" stroke="none" stroke-width="1"/>
<rect x="638.3" y="398.0" width="2.1" height="9.0" fill="#dc8c48" stroke="none" stroke-width="1"/>
<rect x="638.8" y="398.7" width="1.2" height="7.6" fill="#cbc8be" stroke="none" stroke-width="1"/>
<rect x="641.1" y="398.0" width="2.1" height="9.0" fill="#dc8c48" stroke="none" stroke-width="1"/>
<rect x="641.5" y="398.7" width="1.2" height="7.6" fill="#cbc8be" stroke="none" stroke-width="1"/>
<rect x="610.8" y="421.5" width="2.1" height="9.0" fill="#dc8c48" stroke="none" stroke-width="1"/>
<rect x="611.3" y="422.2" width="1.2" height="7.6" fill="#cbc8be" stroke="none" stroke-width="1"/>
<rect x="613.6" y="421.5" width="2.1" height="9.0" fill="#dc8c48" stroke="none" stroke-width="1"/>
<rect x="614.0" y="422.2" width="1.2" height="7.6" fill="#cbc8be" stroke="none" stroke-width="1"/>
<rect x="616.3" y="421.5" width="2.1" height="9.0" fill="#dc8c48" stroke="none" stroke-width="1"/>
<rect x="616.8" y="422.2" width="1.2" height="7.6" fill="#cbc8be" stroke="none" stroke-width="1"/>
<rect x="619.1" y="421.5" width="2.1" height="9.0" fill="#dc8c48" stroke="none" stroke-width="1"/>
<rect x="619.5" y="422.2" width="1.2" height="7.6" fill="#cbc8be" stroke="none" stroke-width="1"/>
<rect x="621.8" y="421.5" width="2.1" height="9.0" fill="#dc8c48" stroke="none" stroke-width="1"/>
<rect x="622.3" y="422.2" width="1.2" height="7.6" fill="#cbc8be" stroke="none" stroke-width="1"/>
<rect x="624.6" y="421.5" width="2.1" height="9.0" fill="#dc8c48" stroke="none" stroke-width="1"/>
<rect x="625.0" y="422.2" width="1.2" height="7.6" fill="#cbc8be" stroke="none" stroke-width="1"/>
<rect x="627.3" y="421.5" width="2.1" height="9.0" fill="#dc8c48" stroke="none" stroke-width="1"/>
<rect x="627.8" y="422.2" width="1.2" height="7.6" fill="#cbc8be" stroke="none" stroke-width="1"/>
<rect x="630.1" y="421.5" width="2.1" height="9.0" fill="#dc8c48" stroke="none" stroke-width="1"/>
<rect x="630.5" y="422.2" width="1.2" height="7.6" fill="#cbc8be" stroke="none" stroke-width="1"/>
<rect x="632.8" y="421.5" width="2.1" height="9.0" fill="#dc8c48" stroke="none" stroke-width="1"/>
<rect x="633.3" y="422.2" width="1.2" height="7.6" fill="#cbc8be" stroke="none" stroke-width="1"/>
<rect x="635.6" y="421.5" width="2.1" height="9.0" fill="#dc8c48" stroke="none" stroke-width="1"/>
<rect x="636.0" y="422.2" width="1.2" height="7.6" fill="#cbc8be" stroke="none" stroke-width="1"/>
<rect x="638.3" y="421.5" width="2.1" height="9.0" fill="#dc8c48" stroke="none" stroke-width="1"/>
<rect x="638.8" y="422.2" width="1.2" height="7.6" fill="#cbc8be" stroke="none" stroke-width="1"/>
<rect x="641.1" y="421.5" width="2.1" height="9.0" fill="#dc8c48" stroke="none" stroke-width="1"/>
<rect x="641.5" y="422.2" width="1.2" height="7.6" fill="#cbc8be" stroke="none" stroke-width="1"/>
<text x="627.0" y="394.7" font-size="9.52" fill="#141c0c" text-anchor="middle" textLength="13.40" lengthAdjust="spacingAndGlyphs">U11</text>
<rect x="648.2" y="395.2" width="7.7" height="13.7" fill="none" stroke="#6b9eb4" stroke-width="1"/>
<rect x="649.2" y="396.0" width="5.7" height="5.6" fill="#dc8c48" stroke="none" stroke-width="1"/>
<rect x="650.1" y="396.9" width="3.9" height="3.8" fill="#cbc8be" stroke="none" stroke-width="1"/>
<rect x="649.2" y="402.5" width="5.7" height="5.6" fill="#dc8c48" stroke="none" stroke-width="1"/>
<rect x="650.1" y="403.4" width="3.9" height="3.8" fill="#cbc8be" stroke="none" stroke-width="1"/>
<text x="652.0" y="393.0" font-size="4.5" fill="#141c0c" text-anchor="middle">C19</text>
<rect x="648.2" y="419.2" width="7.7" height="13.7" fill="none" stroke="#6b9eb4" stroke-width="1"/>
<rect x="649.2" y="420.0" width="5.7" height="5.6" fill="#dc8c48" stroke="none" stroke-width="1"/>
<rect x="650.1" y="420.9" width="3.9" height="3.8" fill="#cbc8be" stroke="none" stroke-width="1"/>
<rect x="649.2" y="426.5" width="5.7" height="5.6" fill="#dc8c48" stroke="none" stroke-width="1"/>
<rect x="650.1" y="427.4" width="3.9" height="3.8" fill="#cbc8be" stroke="none" stroke-width="1"/>
<text x="652.0" y="417.0" font-size="4.5" fill="#141c0c" text-anchor="middle">C33</text>
<rect x="690.5" y="413.5" width="12.6" height="23.7" fill="none" stroke="#6b9eb4" stroke-width="1"/>
<circle cx="696.6" cy="420.0" r="3.6" fill="#e6873a"/>
<rect x="693.0" y="427.5" width="7.7" height="8.2" fill="#e6873a" stroke="none" stroke-width="1"/>
<text x="689.0" y="430.0" font-size="9.52" fill="#141c0c" text-anchor="end" textLength="12.27" lengthAdjust="spacingAndGlyphs">J14</text>
<rect x="686.5" y="389.1" width="17.0" height="21.9" fill="none" stroke="#6b9eb4" stroke-width="1"/>
<rect x="686.8" y="391.3" width="4.3" height="6.2" fill="#dc8c48" stroke="none" stroke-width="1"/>
<rect x="687.7" y="392.2" width="2.5" height="4.4" fill="#cbc8be" stroke="none" stroke-width="1"/>
<rect x="692.8" y="391.3" width="4.3" height="6.2" fill="#dc8c48" stroke="none" stroke-width="1"/>
<rect x="693.7" y="392.2" width="2.5" height="4.4" fill="#cbc8be" stroke="none" stroke-width="1"/>
<rect x="698.8" y="391.3" width="4.3" height="6.2" fill="#dc8c48" stroke="none" stroke-width="1"/>
<rect x="699.7" y="392.2" width="2.5" height="4.4" fill="#cbc8be" stroke="none" stroke-width="1"/>
<rect x="686.8" y="402.6" width="4.3" height="6.2" fill="#dc8c48" stroke="none" stroke-width="1"/>
<rect x="687.7" y="403.5" width="2.5" height="4.4" fill="#cbc8be" stroke="none" stroke-width="1"/>
<rect x="692.8" y="402.6" width="4.3" height="6.2" fill="#dc8c48" stroke="none" stroke-width="1"/>
<rect x="693.7" y="403.5" width="2.5" height="4.4" fill="#cbc8be" stroke="none" stroke-width="1"/>
<rect x="698.8" y="402.6" width="4.3" height="6.2" fill="#dc8c48" stroke="none" stroke-width="1"/>
<rect x="699.7" y="403.5" width="2.5" height="4.4" fill="#cbc8be" stroke="none" stroke-width="1"/>
<text x="685.0" y="402.5" font-size="9.52" fill="#141c0c" text-anchor="end" textLength="13.97" lengthAdjust="spacingAndGlyphs">U22</text>
<rect x="690.5" y="380.5" width="13.5" height="7.3" fill="none" stroke="#6b9eb4" stroke-width="1"/>
<rect x="691.3" y="381.5" width="5.5" height="5.3" fill="#dc8c48" stroke="none" stroke-width="1"/>
<rect x="692.2" y="382.4" width="3.7" height="3.5" fill="#cbc8be" stroke="none" stroke-width="1"/>
<rect x="697.7" y="381.5" width="5.5" height="5.3" fill="#dc8c48" stroke="none" stroke-width="1"/>
<rect x="698.6" y="382.4" width="3.7" height="3.5" fill="#cbc8be" stroke="none" stroke-width="1"/>
<text x="697.0" y="378.4" font-size="9.52" fill="#141c0c" text-anchor="middle" textLength="13.97" lengthAdjust="spacingAndGlyphs">C53</text>
<rect x="692.5" y="351.5" width="8.0" height="13.6" fill="none" stroke="#6b9eb4" stroke-width="1"/>
<rect x="693.5" y="352.3" width="6.0" height="5.5" fill="#dc8c48" stroke="none" stroke-width="1"/>
<rect x="694.4" y="353.2" width="4.2" height="3.7" fill="#cbc8be" stroke="none" stroke-width="1"/>
<rect x="693.5" y="358.7" width="6.0" height="5.5" fill="#dc8c48" stroke="none" stroke-width="1"/>
<rect x="694.4" y="359.6" width="4.2" height="3.7" fill="#cbc8be" stroke="none" stroke-width="1"/>
<text x="697.0" y="350.0" font-size="4.5" fill="#141c0c" text-anchor="middle">R30</text>
<rect x="704.7" y="351.5" width="7.8" height="13.3" fill="none" stroke="#6b9eb4" stroke-width="1"/>
<rect x="705.7" y="352.3" width="5.8" height="5.4" fill="#dc8c48" stroke="none" stroke-width="1"/>
<rect x="706.6" y="353.2" width="4.0" height="3.6" fill="#cbc8be" stroke="none" stroke-width="1"/>
<rect x="705.7" y="358.6" width="5.8" height="5.4" fill="#dc8c48" stroke="none" stroke-width="1"/>
<rect x="706.6" y="359.5" width="4.0" height="3.6" fill="#cbc8be" stroke="none" stroke-width="1"/>
<rect x="704.7" y="365.8" width="7.8" height="13.2" fill="none" stroke="#6b9eb4" stroke-width="1"/>
<rect x="705.7" y="366.6" width="5.8" height="5.4" fill="#dc8c48" stroke="none" stroke-width="1"/>
<rect x="706.6" y="367.5" width="4.0" height="3.6" fill="#cbc8be" stroke="none" stroke-width="1"/>
<rect x="705.7" y="372.8" width="5.8" height="5.4" fill="#dc8c48" stroke="none" stroke-width="1"/>
<rect x="706.6" y="373.7" width="4.0" height="3.6" fill="#cbc8be" stroke="none" stroke-width="1"/>
<rect x="713.5" y="351.5" width="7.6" height="13.3" fill="none" stroke="#6b9eb4" stroke-width="1"/>
<rect x="714.5" y="352.3" width="5.6" height="5.4" fill="#dc8c48" stroke="none" stroke-width="1"/>
<rect x="715.4" y="353.2" width="3.8" height="3.6" fill="#cbc8be" stroke="none" stroke-width="1"/>
<rect x="714.5" y="358.6" width="5.6" height="5.4" fill="#dc8c48" stroke="none" stroke-width="1"/>
<rect x="715.4" y="359.5" width="3.8" height="3.6" fill="#cbc8be" stroke="none" stroke-width="1"/>
<rect x="713.5" y="365.8" width="7.6" height="13.2" fill="none" stroke="#6b9eb4" stroke-width="1"/>
<rect x="714.5" y="366.6" width="5.6" height="5.4" fill="#dc8c48" stroke="none" stroke-width="1"/>
<rect x="715.4" y="367.5" width="3.8" height="3.6" fill="#cbc8be" stroke="none" stroke-width="1"/>
<rect x="714.5" y="372.8" width="5.6" height="5.4" fill="#dc8c48" stroke="none" stroke-width="1"/>
<rect x="715.4" y="373.7" width="3.8" height="3.6" fill="#cbc8be" stroke="none" stroke-width="1"/>
<rect x="722.1" y="351.5" width="7.9" height="13.3" fill="none" stroke="#6b9eb4" stroke-width="1"/>
<rect x="723.1" y="352.3" width="5.9" height="5.4" fill="#dc8c48" stroke="none" stroke-width="1"/>
<rect x="724.0" y="353.2" width="4.1" height="3.6" fill="#cbc8be" stroke="none" stroke-width="1"/>
<rect x="723.1" y="358.6" width="5.9" height="5.4" fill="#dc8c48" stroke="none" stroke-width="1"/>
<rect x="724.0" y="359.5" width="4.1" height="3.6" fill="#cbc8be" stroke="none" stroke-width="1"/>
<rect x="722.1" y="365.8" width="7.9" height="13.2" fill="none" stroke="#6b9eb4" stroke-width="1"/>
<rect x="723.1" y="366.6" width="5.9" height="5.4" fill="#dc8c48" stroke="none" stroke-width="1"/>
<rect x="724.0" y="367.5" width="4.1" height="3.6" fill="#cbc8be" stroke="none" stroke-width="1"/>
<rect x="723.1" y="372.8" width="5.9" height="5.4" fill="#dc8c48" stroke="none" stroke-width="1"/>
<rect x="724.0" y="373.7" width="4.1" height="3.6" fill="#cbc8be" stroke="none" stroke-width="1"/>
<rect x="731.0" y="351.5" width="8.3" height="13.3" fill="none" stroke="#6b9eb4" stroke-width="1"/>
<rect x="732.0" y="352.3" width="6.3" height="5.4" fill="#dc8c48" stroke="none" stroke-width="1"/>
<rect x="732.9" y="353.2" width="4.5" height="3.6" fill="#cbc8be" stroke="none" stroke-width="1"/>
<rect x="732.0" y="358.6" width="6.3" height="5.4" fill="#dc8c48" stroke="none" stroke-width="1"/>
<rect x="732.9" y="359.5" width="4.5" height="3.6" fill="#cbc8be" stroke="none" stroke-width="1"/>
<rect x="731.0" y="365.8" width="8.3" height="13.2" fill="none" stroke="#6b9eb4" stroke-width="1"/>
<rect x="732.0" y="366.6" width="6.3" height="5.4" fill="#dc8c48" stroke="none" stroke-width="1"/>
<rect x="732.9" y="367.5" width="4.5" height="3.6" fill="#cbc8be" stroke="none" stroke-width="1"/>
<rect x="732.0" y="372.8" width="6.3" height="5.4" fill="#dc8c48" stroke="none" stroke-width="1"/>
<rect x="732.9" y="373.7" width="4.5" height="3.6" fill="#cbc8be" stroke="none" stroke-width="1"/>
<text x="722.0" y="350.0" font-size="4.5" fill="#141c0c" text-anchor="middle">R19R18R17R16</text>
<text x="720.0" y="383.5" font-size="4.5" fill="#141c0c" text-anchor="middle">C33C32C31</text>
<text x="747.0" y="379.5" font-size="7" fill="#141c0c" text-anchor="start" transform="rotate(-90 747 379.5)">C20</text>
<rect x="705.5" y="394.5" width="26.8" height="35.4" fill="none" stroke="#6b9eb4" stroke-width="1"/>
<rect x="707.5" y="396.0" width="22.8" height="8.0" fill="#dc8c48" stroke="none" stroke-width="1"/>
<rect x="708.1" y="396.8" width="1.4" height="6.4" fill="#cbc8be" stroke="none" stroke-width="1"/>
<rect x="710.6" y="396.8" width="1.4" height="6.4" fill="#cbc8be" stroke="none" stroke-width="1"/>
<rect x="713.1" y="396.8" width="1.4" height="6.4" fill="#cbc8be" stroke="none" stroke-width="1"/>
<rect x="715.7" y="396.8" width="1.4" height="6.4" fill="#cbc8be" stroke="none" stroke-width="1"/>
<rect x="718.2" y="396.8" width="1.4" height="6.4" fill="#cbc8be" stroke="none" stroke-width="1"/>
<rect x="720.7" y="396.8" width="1.4" height="6.4" fill="#cbc8be" stroke="none" stroke-width="1"/>
<rect x="723.3" y="396.8" width="1.4" height="6.4" fill="#cbc8be" stroke="none" stroke-width="1"/>
<rect x="725.8" y="396.8" width="1.4" height="6.4" fill="#cbc8be" stroke="none" stroke-width="1"/>
<rect x="728.3" y="396.8" width="1.4" height="6.4" fill="#cbc8be" stroke="none" stroke-width="1"/>
<rect x="707.5" y="420.4" width="22.8" height="8.0" fill="#dc8c48" stroke="none" stroke-width="1"/>
<rect x="708.1" y="421.2" width="1.4" height="6.4" fill="#cbc8be" stroke="none" stroke-width="1"/>
<rect x="710.6" y="421.2" width="1.4" height="6.4" fill="#cbc8be" stroke="none" stroke-width="1"/>
<rect x="713.1" y="421.2" width="1.4" height="6.4" fill="#cbc8be" stroke="none" stroke-width="1"/>
<rect x="715.7" y="421.2" width="1.4" height="6.4" fill="#cbc8be" stroke="none" stroke-width="1"/>
<rect x="718.2" y="421.2" width="1.4" height="6.4" fill="#cbc8be" stroke="none" stroke-width="1"/>
<rect x="720.7" y="421.2" width="1.4" height="6.4" fill="#cbc8be" stroke="none" stroke-width="1"/>
<rect x="723.3" y="421.2" width="1.4" height="6.4" fill="#cbc8be" stroke="none" stroke-width="1"/>
<rect x="725.8" y="421.2" width="1.4" height="6.4" fill="#cbc8be" stroke="none" stroke-width="1"/>
<rect x="728.3" y="421.2" width="1.4" height="6.4" fill="#cbc8be" stroke="none" stroke-width="1"/>
<text x="718.9" y="415.6" font-size="10.64" fill="#141c0c" text-anchor="middle" textLength="10.88" lengthAdjust="spacingAndGlyphs">U7</text>
<rect x="733.3" y="399.8" width="10.2" height="22.7" fill="none" stroke="#6b9eb4" stroke-width="1"/>
<rect x="733.8" y="400.3" width="9.2" height="21.7" fill="#243c00" stroke="none" stroke-width="1"/>
<rect x="733.8" y="402.1" width="9.2" height="18.1" fill="#e8b890" stroke="none" stroke-width="1"/>
<rect x="733.8" y="402.1" width="8.6" height="17.5" fill="#cbc8be" stroke="none" stroke-width="1"/>
<text x="741.0" y="398.0" font-size="8.96" fill="#141c0c" text-anchor="start" textLength="13.14" lengthAdjust="spacingAndGlyphs" transform="rotate(-90 741 398)">TP1</text>
<rect x="722.5" y="434.1" width="13.7" height="7.0" fill="none" stroke="#6b9eb4" stroke-width="1"/>
<rect x="723.4" y="435.1" width="5.5" height="5.0" fill="#dc8c48" stroke="none" stroke-width="1"/>
<rect x="724.3" y="436.0" width="3.7" height="3.2" fill="#cbc8be" stroke="none" stroke-width="1"/>
<rect x="729.8" y="435.1" width="5.5" height="5.0" fill="#dc8c48" stroke="none" stroke-width="1"/>
<rect x="730.7" y="436.0" width="3.7" height="3.2" fill="#cbc8be" stroke="none" stroke-width="1"/>
<text x="721.0" y="440.6" font-size="9.52" fill="#141c0c" text-anchor="end" textLength="13.97" lengthAdjust="spacingAndGlyphs">C35</text>
<text x="720.0" y="299.5" font-size="7.5" fill="#141c0c" text-anchor="middle">J8</text>
<rect x="705.3" y="303.3" width="28.7" height="15.6" fill="none" stroke="#6b9eb4" stroke-width="1"/>
<rect x="710.0" y="303.5" width="19.0" height="3.1" fill="#dc8c48" stroke="none" stroke-width="1"/>
<rect x="710.5" y="304.3" width="1.2" height="1.5" fill="#cbc8be" stroke="none" stroke-width="1"/>
<rect x="712.6" y="304.3" width="1.2" height="1.5" fill="#cbc8be" stroke="none" stroke-width="1"/>
<rect x="714.7" y="304.3" width="1.2" height="1.5" fill="#cbc8be" stroke="none" stroke-width="1"/>
<rect x="716.8" y="304.3" width="1.2" height="1.5" fill="#cbc8be" stroke="none" stroke-width="1"/>
<rect x="718.9" y="304.3" width="1.2" height="1.5" fill="#cbc8be" stroke="none" stroke-width="1"/>
<rect x="721.0" y="304.3" width="1.2" height="1.5" fill="#cbc8be" stroke="none" stroke-width="1"/>
<rect x="723.1" y="304.3" width="1.2" height="1.5" fill="#cbc8be" stroke="none" stroke-width="1"/>
<rect x="725.2" y="304.3" width="1.2" height="1.5" fill="#cbc8be" stroke="none" stroke-width="1"/>
<rect x="727.4" y="304.3" width="1.2" height="1.5" fill="#cbc8be" stroke="none" stroke-width="1"/>
<rect x="705.5" y="314.5" width="2.5" height="4.0" fill="#dc8c48" stroke="none" stroke-width="1"/>
<rect x="706.4" y="315.4" width="0.7" height="2.2" fill="#cbc8be" stroke="none" stroke-width="1"/>
<rect x="731.5" y="314.5" width="2.5" height="4.0" fill="#dc8c48" stroke="none" stroke-width="1"/>
<rect x="732.4" y="315.4" width="0.7" height="2.2" fill="#cbc8be" stroke="none" stroke-width="1"/>
<circle cx="741.5" cy="316.2" r="5.1" fill="#e6873a"/>
<circle cx="749.5" cy="330.9" r="7.0" fill="#e6873a"/>
<circle cx="816.5" cy="316.2" r="5.1" fill="#e6873a"/>
<circle cx="808.5" cy="330.9" r="7.0" fill="#e6873a"/>
<circle cx="800.0" cy="337.2" r="5.1" fill="#e6873a"/>
<circle cx="822.2" cy="337.2" r="5.1" fill="#e6873a"/>
<circle cx="843.6" cy="337.2" r="5.1" fill="#e6873a"/>
<circle cx="934.6" cy="306.0" r="5.1" fill="#e6873a"/>
<circle cx="934.6" cy="330.9" r="5.1" fill="#e6873a"/>
<rect x="838.5" y="308.1" width="22.0" height="10.8" fill="none" stroke="#6b9eb4" stroke-width="1"/>
<rect x="839.0" y="308.6" width="21.0" height="9.8" fill="#243c00" stroke="none" stroke-width="1"/>
<rect x="840.8" y="308.6" width="17.4" height="9.8" fill="#e8b890" stroke="none" stroke-width="1"/>
<rect x="840.8" y="308.6" width="16.8" height="9.2" fill="#cbc8be" stroke="none" stroke-width="1"/>
<text x="849.5" y="306.2" font-size="9.52" fill="#141c0c" text-anchor="middle" textLength="18.20" lengthAdjust="spacingAndGlyphs">TP30</text>
<text x="848.0" y="346.0" font-size="9.52" fill="#141c0c" text-anchor="middle" textLength="9.73" lengthAdjust="spacingAndGlyphs">C2</text>
<rect x="838.5" y="347.5" width="18.0" height="9.0" fill="none" stroke="#6b9eb4" stroke-width="1"/>
<rect x="839.7" y="348.5" width="7.2" height="7.0" fill="#dc8c48" stroke="none" stroke-width="1"/>
<rect x="840.6" y="349.4" width="5.4" height="5.2" fill="#cbc8be" stroke="none" stroke-width="1"/>
<rect x="848.1" y="348.5" width="7.2" height="7.0" fill="#dc8c48" stroke="none" stroke-width="1"/>
<rect x="849.0" y="349.4" width="5.4" height="5.2" fill="#cbc8be" stroke="none" stroke-width="1"/>
<rect x="771.7" y="364.7" width="13.8" height="7.8" fill="none" stroke="#6b9eb4" stroke-width="1"/>
<rect x="772.5" y="365.7" width="5.6" height="5.8" fill="#dc8c48" stroke="none" stroke-width="1"/>
<rect x="773.4" y="366.6" width="3.8" height="4.0" fill="#cbc8be" stroke="none" stroke-width="1"/>
<rect x="779.0" y="365.7" width="5.6" height="5.8" fill="#dc8c48" stroke="none" stroke-width="1"/>
<rect x="779.9" y="366.6" width="3.8" height="4.0" fill="#cbc8be" stroke="none" stroke-width="1"/>
<text x="778.5" y="362.0" font-size="9.52" fill="#141c0c" text-anchor="middle" textLength="13.97" lengthAdjust="spacingAndGlyphs">R33</text>
<circle cx="753.4" cy="368.5" r="3.6" fill="#e6873a"/>
<circle cx="805.1" cy="368.5" r="3.6" fill="#e6873a"/>
<rect x="752.7" y="386.8" width="13.8" height="7.4" fill="none" stroke="#6b9eb4" stroke-width="1"/>
<rect x="753.5" y="387.8" width="5.6" height="5.4" fill="#dc8c48" stroke="none" stroke-width="1"/>
<rect x="754.4" y="388.7" width="3.8" height="3.6" fill="#cbc8be" stroke="none" stroke-width="1"/>
<rect x="760.0" y="387.8" width="5.6" height="5.4" fill="#dc8c48" stroke="none" stroke-width="1"/>
<rect x="760.9" y="388.7" width="3.8" height="3.6" fill="#cbc8be" stroke="none" stroke-width="1"/>
<text x="760.0" y="384.2" font-size="9.52" fill="#141c0c" text-anchor="middle" textLength="13.97" lengthAdjust="spacingAndGlyphs">R32</text>
<circle cx="755.7" cy="401.4" r="3.7" fill="#e6873a"/>
<circle cx="765.3" cy="401.4" r="3.7" fill="#e6873a"/>
<circle cx="793.3" cy="401.4" r="3.7" fill="#e6873a"/>
<circle cx="802.6" cy="401.4" r="3.7" fill="#e6873a"/>
<circle cx="750.7" cy="413.3" r="3.7" fill="#e6873a"/>
<circle cx="769.7" cy="413.3" r="3.7" fill="#e6873a"/>
<circle cx="750.7" cy="425.1" r="3.7" fill="#e6873a"/>
<circle cx="762.7" cy="425.1" r="3.7" fill="#e6873a"/>
<circle cx="795.6" cy="425.1" r="3.7" fill="#e6873a"/>
<circle cx="809.5" cy="425.6" r="3.7" fill="#e6873a"/>
<circle cx="822.9" cy="425.6" r="3.7" fill="#e6873a"/>
<circle cx="835.0" cy="425.6" r="3.7" fill="#e6873a"/>
<circle cx="846.8" cy="425.6" r="3.7" fill="#e6873a"/>
<circle cx="859.0" cy="425.6" r="3.7" fill="#e6873a"/>
<circle cx="823.0" cy="437.5" r="3.7" fill="#e6873a"/>
<circle cx="835.0" cy="437.5" r="3.7" fill="#e6873a"/>
<circle cx="846.8" cy="437.5" r="3.7" fill="#e6873a"/>
<circle cx="859.0" cy="437.5" r="3.7" fill="#e6873a"/>
<rect x="751.5" y="411.7" width="13.8" height="7.8" fill="none" stroke="#6b9eb4" stroke-width="1"/>
<rect x="752.3" y="412.7" width="5.6" height="5.8" fill="#dc8c48" stroke="none" stroke-width="1"/>
<rect x="753.2" y="413.6" width="3.8" height="4.0" fill="#cbc8be" stroke="none" stroke-width="1"/>
<rect x="758.8" y="412.7" width="5.6" height="5.8" fill="#dc8c48" stroke="none" stroke-width="1"/>
<rect x="759.7" y="413.6" width="3.8" height="4.0" fill="#cbc8be" stroke="none" stroke-width="1"/>
<text x="758.0" y="409.2" font-size="9.52" fill="#141c0c" text-anchor="middle" textLength="9.73" lengthAdjust="spacingAndGlyphs">R3</text>
<text x="817.5" y="385.0" font-size="9.52" fill="#141c0c" text-anchor="middle" textLength="9.73" lengthAdjust="spacingAndGlyphs">C1</text>
<rect x="813.5" y="386.3" width="8.0" height="42.0" fill="none" stroke="#6b9eb4" stroke-width="1"/>
<rect x="814.8" y="387.5" width="5.4" height="4.5" fill="#dc8c48" stroke="none" stroke-width="1"/>
<rect x="815.7" y="388.4" width="3.6" height="2.7" fill="#cbc8be" stroke="none" stroke-width="1"/>
<rect x="814.8" y="394.3" width="5.4" height="4.5" fill="#dc8c48" stroke="none" stroke-width="1"/>
<rect x="815.7" y="395.2" width="3.6" height="2.7" fill="#cbc8be" stroke="none" stroke-width="1"/>
<rect x="814.8" y="401.1" width="5.4" height="4.5" fill="#dc8c48" stroke="none" stroke-width="1"/>
<rect x="815.7" y="402.0" width="3.6" height="2.7" fill="#cbc8be" stroke="none" stroke-width="1"/>
<rect x="814.8" y="407.9" width="5.4" height="4.5" fill="#dc8c48" stroke="none" stroke-width="1"/>
<rect x="815.7" y="408.8" width="3.6" height="2.7" fill="#cbc8be" stroke="none" stroke-width="1"/>
<rect x="814.8" y="414.7" width="5.4" height="4.5" fill="#dc8c48" stroke="none" stroke-width="1"/>
<rect x="815.7" y="415.6" width="3.6" height="2.7" fill="#cbc8be" stroke="none" stroke-width="1"/>
<rect x="814.8" y="421.5" width="5.4" height="4.5" fill="#dc8c48" stroke="none" stroke-width="1"/>
<rect x="815.7" y="422.4" width="3.6" height="2.7" fill="#cbc8be" stroke="none" stroke-width="1"/>
<text x="813.0" y="412.0" font-size="9.52" fill="#141c0c" text-anchor="end" textLength="9.73" lengthAdjust="spacingAndGlyphs">R1</text>
<text x="827.0" y="426.5" font-size="9.52" fill="#141c0c" text-anchor="start" textLength="9.73" lengthAdjust="spacingAndGlyphs">R2</text>
<text x="809.0" y="433.0" font-size="9.52" fill="#141c0c" text-anchor="start" textLength="18.20" lengthAdjust="spacingAndGlyphs" transform="rotate(-90 809 433)">TP33</text>
<rect x="796.3" y="434.1" width="19.7" height="11.8" fill="none" stroke="#6b9eb4" stroke-width="1"/>
<rect x="796.8" y="434.6" width="18.7" height="10.8" fill="#243c00" stroke="none" stroke-width="1"/>
<rect x="798.6" y="434.6" width="15.1" height="10.8" fill="#e8b890" stroke="none" stroke-width="1"/>
<rect x="798.6" y="434.6" width="14.5" height="10.2" fill="#cbc8be" stroke="none" stroke-width="1"/>
<rect x="820.2" y="436.5" width="13.3" height="7.8" fill="none" stroke="#6b9eb4" stroke-width="1"/>
<rect x="821.0" y="437.5" width="5.4" height="5.8" fill="#dc8c48" stroke="none" stroke-width="1"/>
<rect x="821.9" y="438.4" width="3.6" height="4.0" fill="#cbc8be" stroke="none" stroke-width="1"/>
<rect x="827.3" y="437.5" width="5.4" height="5.8" fill="#dc8c48" stroke="none" stroke-width="1"/>
<rect x="828.2" y="438.4" width="3.6" height="4.0" fill="#cbc8be" stroke="none" stroke-width="1"/>
<text x="835.0" y="444.5" font-size="9.52" fill="#141c0c" text-anchor="start" textLength="13.97" lengthAdjust="spacingAndGlyphs">C37</text>
<text x="866.0" y="449.6" font-size="9.52" fill="#141c0c" text-anchor="start" textLength="13.97" lengthAdjust="spacingAndGlyphs">C41</text>
<rect x="842.5" y="376.0" width="9.6" height="20.5" fill="none" stroke="#6b9eb4" stroke-width="1"/>
<rect x="843.5" y="377.5" width="7.6" height="8.1" fill="#dc8c48" stroke="none" stroke-width="1"/>
<rect x="844.4" y="378.4" width="5.8" height="6.3" fill="#cbc8be" stroke="none" stroke-width="1"/>
<rect x="843.5" y="386.9" width="7.6" height="8.1" fill="#dc8c48" stroke="none" stroke-width="1"/>
<rect x="844.4" y="387.8" width="5.8" height="6.3" fill="#cbc8be" stroke="none" stroke-width="1"/>
<text x="847.0" y="373.5" font-size="4.5" fill="#141c0c" text-anchor="middle">C25</text>
<text x="863.0" y="373.6" font-size="9.52" fill="#141c0c" text-anchor="middle" textLength="13.97" lengthAdjust="spacingAndGlyphs">U10</text>
<rect x="854.5" y="376.0" width="16.7" height="22.7" fill="none" stroke="#6b9eb4" stroke-width="1"/>
<rect x="854.8" y="378.3" width="4.2" height="6.4" fill="#dc8c48" stroke="none" stroke-width="1"/>
<rect x="855.7" y="379.2" width="2.4" height="4.6" fill="#cbc8be" stroke="none" stroke-width="1"/>
<rect x="860.7" y="378.3" width="4.2" height="6.4" fill="#dc8c48" stroke="none" stroke-width="1"/>
<rect x="861.6" y="379.2" width="2.4" height="4.6" fill="#cbc8be" stroke="none" stroke-width="1"/>
<rect x="866.6" y="378.3" width="4.2" height="6.4" fill="#dc8c48" stroke="none" stroke-width="1"/>
<rect x="867.5" y="379.2" width="2.4" height="4.6" fill="#cbc8be" stroke="none" stroke-width="1"/>
<rect x="854.8" y="390.0" width="4.2" height="6.4" fill="#dc8c48" stroke="none" stroke-width="1"/>
<rect x="855.7" y="390.9" width="2.4" height="4.6" fill="#cbc8be" stroke="none" stroke-width="1"/>
<rect x="860.7" y="390.0" width="4.2" height="6.4" fill="#dc8c48" stroke="none" stroke-width="1"/>
<rect x="861.6" y="390.9" width="2.4" height="4.6" fill="#cbc8be" stroke="none" stroke-width="1"/>
<rect x="866.6" y="390.0" width="4.2" height="6.4" fill="#dc8c48" stroke="none" stroke-width="1"/>
<rect x="867.5" y="390.9" width="2.4" height="4.6" fill="#cbc8be" stroke="none" stroke-width="1"/>
<rect x="874.5" y="379.2" width="9.5" height="19.3" fill="none" stroke="#6b9eb4" stroke-width="1"/>
<rect x="875.5" y="380.5" width="7.5" height="7.7" fill="#dc8c48" stroke="none" stroke-width="1"/>
<rect x="876.4" y="381.4" width="5.7" height="5.9" fill="#cbc8be" stroke="none" stroke-width="1"/>
<rect x="875.5" y="389.5" width="7.5" height="7.7" fill="#dc8c48" stroke="none" stroke-width="1"/>
<rect x="876.4" y="390.4" width="5.7" height="5.9" fill="#cbc8be" stroke="none" stroke-width="1"/>
<text x="879.0" y="377.0" font-size="4.5" fill="#141c0c" text-anchor="middle">C24</text>
<text x="898.0" y="374.6" font-size="9.52" fill="#141c0c" text-anchor="middle" textLength="8.47" lengthAdjust="spacingAndGlyphs">L1</text>
<rect x="886.5" y="376.5" width="23.0" height="24.0" fill="none" stroke="#6b9eb4" stroke-width="1"/>
<rect x="893.3" y="380.0" width="8.2" height="4.3" fill="#dc8c48" stroke="none" stroke-width="1"/>
<rect x="894.2" y="380.9" width="6.4" height="2.5" fill="#cbc8be" stroke="none" stroke-width="1"/>
<rect x="893.3" y="393.8" width="8.2" height="4.2" fill="#dc8c48" stroke="none" stroke-width="1"/>
<rect x="894.2" y="394.7" width="6.4" height="2.4" fill="#cbc8be" stroke="none" stroke-width="1"/>
<rect x="848.9" y="401.5" width="14.0" height="7.7" fill="none" stroke="#6b9eb4" stroke-width="1"/>
<rect x="849.8" y="402.5" width="5.7" height="5.7" fill="#dc8c48" stroke="none" stroke-width="1"/>
<rect x="850.6" y="403.4" width="3.9" height="3.9" fill="#cbc8be" stroke="none" stroke-width="1"/>
<rect x="856.3" y="402.5" width="5.7" height="5.7" fill="#dc8c48" stroke="none" stroke-width="1"/>
<rect x="857.2" y="403.4" width="3.9" height="3.9" fill="#cbc8be" stroke="none" stroke-width="1"/>
<rect x="863.9" y="401.5" width="13.6" height="7.7" fill="none" stroke="#6b9eb4" stroke-width="1"/>
<rect x="864.7" y="402.5" width="5.5" height="5.7" fill="#dc8c48" stroke="none" stroke-width="1"/>
<rect x="865.6" y="403.4" width="3.7" height="3.9" fill="#cbc8be" stroke="none" stroke-width="1"/>
<rect x="871.1" y="402.5" width="5.5" height="5.7" fill="#dc8c48" stroke="none" stroke-width="1"/>
<rect x="872.0" y="403.4" width="3.7" height="3.9" fill="#cbc8be" stroke="none" stroke-width="1"/>
<text x="848.0" y="408.5" font-size="9.52" fill="#141c0c" text-anchor="end" textLength="13.97" lengthAdjust="spacingAndGlyphs">R22</text>
<text x="870.5" y="417.5" font-size="9.52" fill="#141c0c" text-anchor="middle" textLength="13.97" lengthAdjust="spacingAndGlyphs">R23</text>
<rect x="935.1" y="380.8" width="13.4" height="7.0" fill="none" stroke="#6b9eb4" stroke-width="1"/>
<rect x="935.9" y="381.8" width="5.5" height="5.0" fill="#dc8c48" stroke="none" stroke-width="1"/>
<rect x="936.8" y="382.7" width="3.7" height="3.2" fill="#cbc8be" stroke="none" stroke-width="1"/>
<rect x="942.2" y="381.8" width="5.5" height="5.0" fill="#dc8c48" stroke="none" stroke-width="1"/>
<rect x="943.1" y="382.7" width="3.7" height="3.2" fill="#cbc8be" stroke="none" stroke-width="1"/>
<text x="941.5" y="379.0" font-size="9.52" fill="#141c0c" text-anchor="middle" textLength="9.73" lengthAdjust="spacingAndGlyphs">R5</text>
<rect x="935.1" y="389.5" width="13.4" height="8.0" fill="none" stroke="#6b9eb4" stroke-width="1"/>
<rect x="935.9" y="390.5" width="5.5" height="6.0" fill="#dc8c48" stroke="none" stroke-width="1"/>
<rect x="936.8" y="391.4" width="3.7" height="4.2" fill="#cbc8be" stroke="none" stroke-width="1"/>
<rect x="942.2" y="390.5" width="5.5" height="6.0" fill="#dc8c48" stroke="none" stroke-width="1"/>
<rect x="943.1" y="391.4" width="3.7" height="4.2" fill="#cbc8be" stroke="none" stroke-width="1"/>
<text x="934.0" y="397.0" font-size="9.52" fill="#141c0c" text-anchor="end" textLength="9.73" lengthAdjust="spacingAndGlyphs">R6</text>
<rect x="935.1" y="398.5" width="13.4" height="7.5" fill="none" stroke="#6b9eb4" stroke-width="1"/>
<rect x="935.9" y="399.5" width="5.5" height="5.5" fill="#dc8c48" stroke="none" stroke-width="1"/>
<rect x="936.8" y="400.4" width="3.7" height="3.7" fill="#cbc8be" stroke="none" stroke-width="1"/>
<rect x="942.2" y="399.5" width="5.5" height="5.5" fill="#dc8c48" stroke="none" stroke-width="1"/>
<rect x="943.1" y="400.4" width="3.7" height="3.7" fill="#cbc8be" stroke="none" stroke-width="1"/>
<text x="934.0" y="406.0" font-size="9.52" fill="#141c0c" text-anchor="end" textLength="9.73" lengthAdjust="spacingAndGlyphs">R7</text>
<rect x="952.5" y="375.1" width="13.5" height="7.0" fill="none" stroke="#6b9eb4" stroke-width="1"/>
<rect x="953.3" y="376.1" width="5.5" height="5.0" fill="#dc8c48" stroke="none" stroke-width="1"/>
<rect x="954.2" y="377.0" width="3.7" height="3.2" fill="#cbc8be" stroke="none" stroke-width="1"/>
<rect x="959.7" y="376.1" width="5.5" height="5.0" fill="#dc8c48" stroke="none" stroke-width="1"/>
<rect x="960.6" y="377.0" width="3.7" height="3.2" fill="#cbc8be" stroke="none" stroke-width="1"/>
<text x="959.5" y="373.3" font-size="9.52" fill="#141c0c" text-anchor="middle" textLength="9.73" lengthAdjust="spacingAndGlyphs">C3</text>
<rect x="952.5" y="384.5" width="16.7" height="23.0" fill="none" stroke="#6b9eb4" stroke-width="1"/>
<rect x="954.3" y="386.9" width="4.2" height="6.5" fill="#dc8c48" stroke="none" stroke-width="1"/>
<rect x="955.2" y="387.8" width="2.4" height="4.7" fill="#cbc8be" stroke="none" stroke-width="1"/>
<rect x="963.2" y="386.9" width="4.2" height="6.5" fill="#dc8c48" stroke="none" stroke-width="1"/>
<rect x="964.1" y="387.8" width="2.4" height="4.7" fill="#cbc8be" stroke="none" stroke-width="1"/>
<rect x="952.8" y="398.6" width="4.2" height="6.5" fill="#dc8c48" stroke="none" stroke-width="1"/>
<rect x="953.7" y="399.5" width="2.4" height="4.7" fill="#cbc8be" stroke="none" stroke-width="1"/>
<rect x="958.7" y="398.6" width="4.2" height="6.5" fill="#dc8c48" stroke="none" stroke-width="1"/>
<rect x="959.6" y="399.5" width="2.4" height="4.7" fill="#cbc8be" stroke="none" stroke-width="1"/>
<rect x="964.6" y="398.6" width="4.2" height="6.5" fill="#dc8c48" stroke="none" stroke-width="1"/>
<rect x="965.5" y="399.5" width="2.4" height="4.7" fill="#cbc8be" stroke="none" stroke-width="1"/>
<text x="971.0" y="400.0" font-size="9.52" fill="#141c0c" text-anchor="start" textLength="9.73" lengthAdjust="spacingAndGlyphs">U1</text>
<rect x="948.5" y="409.2" width="19.0" height="8.6" fill="none" stroke="#6b9eb4" stroke-width="1"/>
<rect x="950.0" y="410.2" width="7.1" height="6.6" fill="#dc8c48" stroke="none" stroke-width="1"/>
<rect x="950.9" y="411.1" width="5.3" height="4.8" fill="#cbc8be" stroke="none" stroke-width="1"/>
<rect x="958.8" y="410.2" width="7.1" height="6.6" fill="#dc8c48" stroke="none" stroke-width="1"/>
<rect x="959.7" y="411.1" width="5.3" height="4.8" fill="#cbc8be" stroke="none" stroke-width="1"/>
<text x="947.5" y="417.5" font-size="9.52" fill="#141c0c" text-anchor="end" textLength="9.73" lengthAdjust="spacingAndGlyphs">C5</text>
<text x="983.5" y="400.0" font-size="9.52" fill="#141c0c" text-anchor="start" textLength="13.97" lengthAdjust="spacingAndGlyphs">R10</text>
<rect x="999.9" y="389.5" width="7.6" height="14.3" fill="none" stroke="#6b9eb4" stroke-width="1"/>
<rect x="1000.9" y="390.4" width="5.6" height="5.8" fill="#dc8c48" stroke="none" stroke-width="1"/>
<rect x="1001.8" y="391.3" width="3.8" height="4.0" fill="#cbc8be" stroke="none" stroke-width="1"/>
<rect x="1000.9" y="397.1" width="5.6" height="5.8" fill="#dc8c48" stroke="none" stroke-width="1"/>
<rect x="1001.8" y="398.0" width="3.8" height="4.0" fill="#cbc8be" stroke="none" stroke-width="1"/>
<rect x="997.3" y="364.5" width="11.8" height="21.4" fill="none" stroke="#6b9eb4" stroke-width="1"/>
<rect x="997.8" y="365.0" width="10.8" height="20.4" fill="#243c00" stroke="none" stroke-width="1"/>
<rect x="997.8" y="366.8" width="10.8" height="16.8" fill="#e8b890" stroke="none" stroke-width="1"/>
<rect x="997.8" y="366.8" width="10.2" height="16.2" fill="#cbc8be" stroke="none" stroke-width="1"/>
<text x="1003.0" y="362.5" font-size="5.5" fill="#141c0c" text-anchor="middle">TP19</text>
<rect x="1018.1" y="378.3" width="13.4" height="7.0" fill="none" stroke="#6b9eb4" stroke-width="1"/>
<rect x="1018.9" y="379.3" width="5.5" height="5.0" fill="#dc8c48" stroke="none" stroke-width="1"/>
<rect x="1019.8" y="380.2" width="3.7" height="3.2" fill="#cbc8be" stroke="none" stroke-width="1"/>
<rect x="1025.2" y="379.3" width="5.5" height="5.0" fill="#dc8c48" stroke="none" stroke-width="1"/>
<rect x="1026.1" y="380.2" width="3.7" height="3.2" fill="#cbc8be" stroke="none" stroke-width="1"/>
<text x="1024.5" y="376.0" font-size="9.52" fill="#141c0c" text-anchor="middle" textLength="13.40" lengthAdjust="spacingAndGlyphs">C11</text>
<rect x="1013.3" y="386.9" width="18.2" height="21.3" fill="none" stroke="#6b9eb4" stroke-width="1"/>
<rect x="1015.0" y="389.0" width="6.0" height="7.0" fill="#dc8c48" stroke="none" stroke-width="1"/>
<rect x="1015.9" y="389.9" width="4.2" height="5.2" fill="#cbc8be" stroke="none" stroke-width="1"/>
<rect x="1024.0" y="389.0" width="6.0" height="7.0" fill="#dc8c48" stroke="none" stroke-width="1"/>
<rect x="1024.9" y="389.9" width="4.2" height="5.2" fill="#cbc8be" stroke="none" stroke-width="1"/>
<rect x="1015.0" y="399.5" width="6.0" height="7.0" fill="#dc8c48" stroke="none" stroke-width="1"/>
<rect x="1015.9" y="400.4" width="4.2" height="5.2" fill="#cbc8be" stroke="none" stroke-width="1"/>
<rect x="1024.0" y="399.5" width="6.0" height="7.0" fill="#dc8c48" stroke="none" stroke-width="1"/>
<rect x="1024.9" y="400.4" width="4.2" height="5.2" fill="#cbc8be" stroke="none" stroke-width="1"/>
<text x="1024.5" y="417.0" font-size="9.52" fill="#141c0c" text-anchor="middle" textLength="9.73" lengthAdjust="spacingAndGlyphs">U3</text>
<text x="979.3" y="423.4" font-size="9.52" fill="#141c0c" text-anchor="middle" textLength="9.73" lengthAdjust="spacingAndGlyphs">U2</text>
<rect x="964.8" y="424.8" width="29.3" height="30.2" fill="none" stroke="#6b9eb4" stroke-width="1"/>
<rect x="970.4" y="426.4" width="18.6" height="4.4" fill="#dc8c48" stroke="none" stroke-width="1"/>
<rect x="970.9" y="427.2" width="1.3" height="2.8" fill="#cbc8be" stroke="none" stroke-width="1"/>
<rect x="973.2" y="427.2" width="1.3" height="2.8" fill="#cbc8be" stroke="none" stroke-width="1"/>
<rect x="975.6" y="427.2" width="1.3" height="2.8" fill="#cbc8be" stroke="none" stroke-width="1"/>
<rect x="977.9" y="427.2" width="1.3" height="2.8" fill="#cbc8be" stroke="none" stroke-width="1"/>
<rect x="980.2" y="427.2" width="1.3" height="2.8" fill="#cbc8be" stroke="none" stroke-width="1"/>
<rect x="982.5" y="427.2" width="1.3" height="2.8" fill="#cbc8be" stroke="none" stroke-width="1"/>
<rect x="984.9" y="427.2" width="1.3" height="2.8" fill="#cbc8be" stroke="none" stroke-width="1"/>
<rect x="987.2" y="427.2" width="1.3" height="2.8" fill="#cbc8be" stroke="none" stroke-width="1"/>
<rect x="970.4" y="449.6" width="18.6" height="4.2" fill="#dc8c48" stroke="none" stroke-width="1"/>
<rect x="970.9" y="450.4" width="1.3" height="2.6" fill="#cbc8be" stroke="none" stroke-width="1"/>
<rect x="973.2" y="450.4" width="1.3" height="2.6" fill="#cbc8be" stroke="none" stroke-width="1"/>
<rect x="975.6" y="450.4" width="1.3" height="2.6" fill="#cbc8be" stroke="none" stroke-width="1"/>
<rect x="977.9" y="450.4" width="1.3" height="2.6" fill="#cbc8be" stroke="none" stroke-width="1"/>
<rect x="980.2" y="450.4" width="1.3" height="2.6" fill="#cbc8be" stroke="none" stroke-width="1"/>
<rect x="982.5" y="450.4" width="1.3" height="2.6" fill="#cbc8be" stroke="none" stroke-width="1"/>
<rect x="984.9" y="450.4" width="1.3" height="2.6" fill="#cbc8be" stroke="none" stroke-width="1"/>
<rect x="987.2" y="450.4" width="1.3" height="2.6" fill="#cbc8be" stroke="none" stroke-width="1"/>
<rect x="965.7" y="431.5" width="4.7" height="1.5" fill="#cbc8be" stroke="none" stroke-width="1"/>
<rect x="989.0" y="431.5" width="4.6" height="1.5" fill="#cbc8be" stroke="none" stroke-width="1"/>
<rect x="965.7" y="434.4" width="4.7" height="1.5" fill="#cbc8be" stroke="none" stroke-width="1"/>
<rect x="989.0" y="434.4" width="4.6" height="1.5" fill="#cbc8be" stroke="none" stroke-width="1"/>
<rect x="965.7" y="437.3" width="4.7" height="1.5" fill="#cbc8be" stroke="none" stroke-width="1"/>
<rect x="989.0" y="437.3" width="4.6" height="1.5" fill="#cbc8be" stroke="none" stroke-width="1"/>
<rect x="965.7" y="440.2" width="4.7" height="1.5" fill="#cbc8be" stroke="none" stroke-width="1"/>
<rect x="989.0" y="440.2" width="4.6" height="1.5" fill="#cbc8be" stroke="none" stroke-width="1"/>
<rect x="965.7" y="443.1" width="4.7" height="1.5" fill="#cbc8be" stroke="none" stroke-width="1"/>
<rect x="989.0" y="443.1" width="4.6" height="1.5" fill="#cbc8be" stroke="none" stroke-width="1"/>
<rect x="965.7" y="446.0" width="4.7" height="1.5" fill="#cbc8be" stroke="none" stroke-width="1"/>
<rect x="989.0" y="446.0" width="4.6" height="1.5" fill="#cbc8be" stroke="none" stroke-width="1"/>
<circle cx="979.4" cy="439.9" r="3.0" fill="#e6873a"/>
<rect x="946.3" y="428.5" width="13.2" height="7.0" fill="none" stroke="#6b9eb4" stroke-width="1"/>
<rect x="947.1" y="429.5" width="5.4" height="5.0" fill="#dc8c48" stroke="none" stroke-width="1"/>
<rect x="948.0" y="430.4" width="3.6" height="3.2" fill="#cbc8be" stroke="none" stroke-width="1"/>
<rect x="953.3" y="429.5" width="5.4" height="5.0" fill="#dc8c48" stroke="none" stroke-width="1"/>
<rect x="954.2" y="430.4" width="3.6" height="3.2" fill="#cbc8be" stroke="none" stroke-width="1"/>
<text x="945.0" y="435.0" font-size="9.52" fill="#141c0c" text-anchor="end" textLength="9.73" lengthAdjust="spacingAndGlyphs">R4</text>
<rect x="931.9" y="437.5" width="13.4" height="6.8" fill="none" stroke="#6b9eb4" stroke-width="1"/>
<rect x="932.8" y="438.5" width="5.3" height="4.8" fill="#dc8c48" stroke="none" stroke-width="1"/>
<rect x="933.7" y="439.4" width="3.5" height="3.0" fill="#cbc8be" stroke="none" stroke-width="1"/>
<rect x="939.1" y="438.5" width="5.3" height="4.8" fill="#dc8c48" stroke="none" stroke-width="1"/>
<rect x="940.0" y="439.4" width="3.5" height="3.0" fill="#cbc8be" stroke="none" stroke-width="1"/>
<rect x="947.5" y="436.5" width="9.6" height="19.0" fill="none" stroke="#6b9eb4" stroke-width="1"/>
<rect x="948.5" y="437.8" width="7.6" height="7.6" fill="#dc8c48" stroke="none" stroke-width="1"/>
<rect x="949.4" y="438.7" width="5.8" height="5.8" fill="#cbc8be" stroke="none" stroke-width="1"/>
<rect x="948.5" y="446.6" width="7.6" height="7.6" fill="#dc8c48" stroke="none" stroke-width="1"/>
<rect x="949.4" y="447.5" width="5.8" height="5.8" fill="#cbc8be" stroke="none" stroke-width="1"/>
<text x="1004.0" y="433.0" font-size="9.52" fill="#141c0c" text-anchor="middle" textLength="13.40" lengthAdjust="spacingAndGlyphs">R11</text>
<rect x="997.3" y="434.1" width="13.2" height="7.0" fill="none" stroke="#6b9eb4" stroke-width="1"/>
<rect x="998.1" y="435.1" width="5.4" height="5.0" fill="#dc8c48" stroke="none" stroke-width="1"/>
<rect x="999.0" y="436.0" width="3.6" height="3.2" fill="#cbc8be" stroke="none" stroke-width="1"/>
<rect x="1004.3" y="435.1" width="5.4" height="5.0" fill="#dc8c48" stroke="none" stroke-width="1"/>
<rect x="1005.2" y="436.0" width="3.6" height="3.2" fill="#cbc8be" stroke="none" stroke-width="1"/>
<rect x="1014.5" y="419.5" width="17.0" height="23.0" fill="none" stroke="#6b9eb4" stroke-width="1"/>
<rect x="1016.0" y="421.0" width="14.0" height="5.5" fill="#dc8c48" stroke="none" stroke-width="1"/>
<rect x="1017.0" y="421.8" width="2.6" height="3.9" fill="#cbc8be" stroke="none" stroke-width="1"/>
<rect x="1021.7" y="421.8" width="2.6" height="3.9" fill="#cbc8be" stroke="none" stroke-width="1"/>
<rect x="1026.4" y="421.8" width="2.6" height="3.9" fill="#cbc8be" stroke="none" stroke-width="1"/>
<rect x="1016.0" y="435.5" width="14.0" height="5.5" fill="#dc8c48" stroke="none" stroke-width="1"/>
<rect x="1017.0" y="436.3" width="2.6" height="3.9" fill="#cbc8be" stroke="none" stroke-width="1"/>
<rect x="1021.7" y="436.3" width="2.6" height="3.9" fill="#cbc8be" stroke="none" stroke-width="1"/>
<rect x="1026.4" y="436.3" width="2.6" height="3.9" fill="#cbc8be" stroke="none" stroke-width="1"/>
<text x="1033.0" y="435.0" font-size="9.52" fill="#141c0c" text-anchor="start" textLength="9.73" lengthAdjust="spacingAndGlyphs">U4</text>
<text x="1025.0" y="306.5" font-size="9.52" fill="#141c0c" text-anchor="middle" textLength="16.07" lengthAdjust="spacingAndGlyphs">MH3</text>
<rect x="1016.5" y="309.0" width="16.5" height="15.0" fill="none" stroke="#6b9eb4" stroke-width="1"/>
<circle cx="1025.0" cy="316.5" r="8.3" fill="#e6873a"/>
<rect x="1020.5" y="333.2" width="7.6" height="8" fill="none" stroke="#6b9eb4" stroke-opacity="0.55" stroke-width="0.8"/>
<path d="M1020.5 337.4 H1028.3 M1024.4 333.5 V341" stroke="#d8722a" stroke-width="1.1"/>
<text x="1024.4" y="332.0" font-size="4" fill="#141c0c" text-anchor="middle">FM1</text>
<rect x="428.5" y="443.5" width="11.3" height="23.0" fill="none" stroke="#6b9eb4" stroke-width="1"/>
<rect x="429.0" y="444.0" width="10.3" height="22.0" fill="#243c00" stroke="none" stroke-width="1"/>
<rect x="429.0" y="445.8" width="10.3" height="18.4" fill="#e8b890" stroke="none" stroke-width="1"/>
<rect x="429.0" y="445.8" width="9.7" height="17.8" fill="#cbc8be" stroke="none" stroke-width="1"/>
<text x="434.0" y="441.0" font-size="5.5" fill="#141c0c" text-anchor="middle">TP41</text>
<rect x="449.0" y="440.5" width="11.3" height="23.0" fill="none" stroke="#6b9eb4" stroke-width="1"/>
<rect x="449.5" y="441.0" width="10.3" height="22.0" fill="#243c00" stroke="none" stroke-width="1"/>
<rect x="449.5" y="442.8" width="10.3" height="18.4" fill="#e8b890" stroke="none" stroke-width="1"/>
<rect x="449.5" y="442.8" width="9.7" height="17.8" fill="#cbc8be" stroke="none" stroke-width="1"/>
<text x="454.6" y="438.5" font-size="9.52" fill="#141c0c" text-anchor="middle" textLength="13.96" lengthAdjust="spacingAndGlyphs">TP4</text>
<rect x="425.5" y="465.5" width="11.4" height="19.3" fill="none" stroke="#6b9eb4" stroke-width="1"/>
<rect x="426.0" y="466.0" width="10.4" height="18.3" fill="#243c00" stroke="none" stroke-width="1"/>
<rect x="426.0" y="467.8" width="10.4" height="14.7" fill="#e8b890" stroke="none" stroke-width="1"/>
<rect x="426.0" y="467.8" width="9.8" height="14.1" fill="#cbc8be" stroke="none" stroke-width="1"/>
<text x="424.5" y="479.5" font-size="9.52" fill="#141c0c" text-anchor="end" textLength="18.20" lengthAdjust="spacingAndGlyphs">TP38</text>
<rect x="425.5" y="486.5" width="11.4" height="21.0" fill="none" stroke="#6b9eb4" stroke-width="1"/>
<rect x="426.0" y="487.0" width="10.4" height="20.0" fill="#243c00" stroke="none" stroke-width="1"/>
<rect x="426.0" y="488.8" width="10.4" height="16.4" fill="#e8b890" stroke="none" stroke-width="1"/>
<rect x="426.0" y="488.8" width="9.8" height="15.8" fill="#cbc8be" stroke="none" stroke-width="1"/>
<text x="424.0" y="501.0" font-size="9.52" fill="#141c0c" text-anchor="end" textLength="13.96" lengthAdjust="spacingAndGlyphs">TP6</text>
<rect x="449.0" y="490.5" width="11.3" height="23.0" fill="none" stroke="#6b9eb4" stroke-width="1"/>
<rect x="449.5" y="491.0" width="10.3" height="22.0" fill="#243c00" stroke="none" stroke-width="1"/>
<rect x="449.5" y="492.8" width="10.3" height="18.4" fill="#e8b890" stroke="none" stroke-width="1"/>
<rect x="449.5" y="492.8" width="9.7" height="17.8" fill="#cbc8be" stroke="none" stroke-width="1"/>
<text x="454.6" y="488.5" font-size="5.5" fill="#141c0c" text-anchor="middle">TP39</text>
<rect x="408.0" y="511.5" width="11.5" height="23.0" fill="none" stroke="#6b9eb4" stroke-width="1"/>
<rect x="408.5" y="512.0" width="10.5" height="22.0" fill="#243c00" stroke="none" stroke-width="1"/>
<rect x="408.5" y="513.8" width="10.5" height="18.4" fill="#e8b890" stroke="none" stroke-width="1"/>
<rect x="408.5" y="513.8" width="9.9" height="17.8" fill="#cbc8be" stroke="none" stroke-width="1"/>
<text x="413.8" y="509.5" font-size="5.5" fill="#141c0c" text-anchor="middle">TP30</text>
<rect x="487.5" y="464.5" width="11.7" height="22.7" fill="none" stroke="#6b9eb4" stroke-width="1"/>
<rect x="488.0" y="465.0" width="10.7" height="21.7" fill="#243c00" stroke="none" stroke-width="1"/>
<rect x="488.0" y="466.8" width="10.7" height="18.1" fill="#e8b890" stroke="none" stroke-width="1"/>
<rect x="488.0" y="466.8" width="10.1" height="17.5" fill="#cbc8be" stroke="none" stroke-width="1"/>
<text x="493.3" y="462.5" font-size="5.5" fill="#141c0c" text-anchor="middle">TP26</text>
<rect x="496.5" y="487.5" width="11.5" height="23.0" fill="none" stroke="#6b9eb4" stroke-width="1"/>
<rect x="497.0" y="488.0" width="10.5" height="22.0" fill="#243c00" stroke="none" stroke-width="1"/>
<rect x="497.0" y="489.8" width="10.5" height="18.4" fill="#e8b890" stroke="none" stroke-width="1"/>
<rect x="497.0" y="489.8" width="9.9" height="17.8" fill="#cbc8be" stroke="none" stroke-width="1"/>
<text x="495.0" y="503.8" font-size="9.52" fill="#141c0c" text-anchor="end" textLength="18.20" lengthAdjust="spacingAndGlyphs">TP29</text>
<rect x="542.5" y="448.5" width="8.0" height="14.0" fill="none" stroke="#6b9eb4" stroke-width="1"/>
<rect x="543.5" y="449.3" width="6.0" height="5.7" fill="#dc8c48" stroke="none" stroke-width="1"/>
<rect x="544.4" y="450.2" width="4.2" height="3.9" fill="#cbc8be" stroke="none" stroke-width="1"/>
<rect x="543.5" y="455.9" width="6.0" height="5.7" fill="#dc8c48" stroke="none" stroke-width="1"/>
<rect x="544.4" y="456.8" width="4.2" height="3.9" fill="#cbc8be" stroke="none" stroke-width="1"/>
<text x="546.5" y="446.0" font-size="4.5" fill="#141c0c" text-anchor="middle">R20</text>
<rect x="539.5" y="466.5" width="12.7" height="25.0" fill="none" stroke="#6b9eb4" stroke-width="1"/>
<circle cx="546.2" cy="473.2" r="3.6" fill="#e6873a"/>
<rect x="542.4" y="481.0" width="7.9" height="8.0" fill="#e6873a" stroke="none" stroke-width="1"/>
<text x="538.0" y="483.0" font-size="9.52" fill="#141c0c" text-anchor="end" textLength="12.27" lengthAdjust="spacingAndGlyphs">J10</text>
<rect x="599.5" y="458.5" width="11.5" height="23.0" fill="none" stroke="#6b9eb4" stroke-width="1"/>
<rect x="600.0" y="459.0" width="10.5" height="22.0" fill="#243c00" stroke="none" stroke-width="1"/>
<rect x="600.0" y="460.8" width="10.5" height="18.4" fill="#e8b890" stroke="none" stroke-width="1"/>
<rect x="600.0" y="460.8" width="9.9" height="17.8" fill="#cbc8be" stroke="none" stroke-width="1"/>
<text x="605.2" y="456.5" font-size="5.5" fill="#141c0c" text-anchor="middle">TP27</text>
<rect x="628.9" y="461.5" width="11.3" height="22.5" fill="none" stroke="#6b9eb4" stroke-width="1"/>
<rect x="629.4" y="462.0" width="10.3" height="21.5" fill="#243c00" stroke="none" stroke-width="1"/>
<rect x="629.4" y="463.8" width="10.3" height="17.9" fill="#e8b890" stroke="none" stroke-width="1"/>
<rect x="629.4" y="463.8" width="9.7" height="17.3" fill="#cbc8be" stroke="none" stroke-width="1"/>
<text x="634.5" y="459.5" font-size="5.5" fill="#141c0c" text-anchor="middle">TP23</text>
<rect x="608.5" y="482.5" width="11.5" height="23.0" fill="none" stroke="#6b9eb4" stroke-width="1"/>
<rect x="609.0" y="483.0" width="10.5" height="22.0" fill="#243c00" stroke="none" stroke-width="1"/>
<rect x="609.0" y="484.8" width="10.5" height="18.4" fill="#e8b890" stroke="none" stroke-width="1"/>
<rect x="609.0" y="484.8" width="9.9" height="17.8" fill="#cbc8be" stroke="none" stroke-width="1"/>
<text x="607.0" y="498.0" font-size="9.52" fill="#141c0c" text-anchor="end" textLength="18.20" lengthAdjust="spacingAndGlyphs">TP25</text>
<rect x="628.1" y="495.5" width="8.0" height="13.6" fill="none" stroke="#6b9eb4" stroke-width="1"/>
<rect x="629.1" y="496.3" width="6.0" height="5.5" fill="#dc8c48" stroke="none" stroke-width="1"/>
<rect x="630.0" y="497.2" width="4.2" height="3.7" fill="#cbc8be" stroke="none" stroke-width="1"/>
<rect x="629.1" y="502.7" width="6.0" height="5.5" fill="#dc8c48" stroke="none" stroke-width="1"/>
<rect x="630.0" y="503.6" width="4.2" height="3.7" fill="#cbc8be" stroke="none" stroke-width="1"/>
<text x="632.0" y="493.5" font-size="4.5" fill="#141c0c" text-anchor="middle">R34</text>
<rect x="639.2" y="494.0" width="8.3" height="13.5" fill="none" stroke="#6b9eb4" stroke-width="1"/>
<rect x="640.0" y="494.5" width="7.0" height="3.0" fill="#dc8c48" stroke="none" stroke-width="1"/>
<rect x="640.8" y="495.3" width="2.0" height="1.4" fill="#cbc8be" stroke="none" stroke-width="1"/>
<rect x="644.3" y="495.3" width="2.0" height="1.4" fill="#cbc8be" stroke="none" stroke-width="1"/>
<rect x="640.0" y="504.0" width="7.0" height="3.0" fill="#dc8c48" stroke="none" stroke-width="1"/>
<rect x="640.5" y="504.8" width="1.3" height="1.4" fill="#cbc8be" stroke="none" stroke-width="1"/>
<rect x="642.8" y="504.8" width="1.3" height="1.4" fill="#cbc8be" stroke="none" stroke-width="1"/>
<rect x="645.2" y="504.8" width="1.3" height="1.4" fill="#cbc8be" stroke="none" stroke-width="1"/>
<text x="643.5" y="492.0" font-size="4.5" fill="#141c0c" text-anchor="middle">U24</text>
<rect x="411.0" y="555.5" width="23.0" height="11.3" fill="none" stroke="#6b9eb4" stroke-width="1"/>
<rect x="411.5" y="556.0" width="22.0" height="10.3" fill="#243c00" stroke="none" stroke-width="1"/>
<rect x="413.3" y="556.0" width="18.4" height="10.3" fill="#e8b890" stroke="none" stroke-width="1"/>
<rect x="413.3" y="556.0" width="17.8" height="9.7" fill="#cbc8be" stroke="none" stroke-width="1"/>
<text x="422.5" y="554.0" font-size="9.52" fill="#141c0c" text-anchor="middle" textLength="18.20" lengthAdjust="spacingAndGlyphs">TP37</text>
<rect x="435.0" y="561.5" width="22.5" height="11.7" fill="none" stroke="#6b9eb4" stroke-width="1"/>
<rect x="435.5" y="562.0" width="21.5" height="10.7" fill="#243c00" stroke="none" stroke-width="1"/>
<rect x="437.3" y="562.0" width="17.9" height="10.7" fill="#e8b890" stroke="none" stroke-width="1"/>
<rect x="437.3" y="562.0" width="17.3" height="10.1" fill="#cbc8be" stroke="none" stroke-width="1"/>
<text x="446.0" y="560.0" font-size="9.52" fill="#141c0c" text-anchor="middle" textLength="18.20" lengthAdjust="spacingAndGlyphs">TP40</text>
<rect x="406.5" y="573.5" width="15.8" height="16.0" fill="none" stroke="#6b9eb4" stroke-width="1"/>
<circle cx="414.3" cy="581.3" r="7.9" fill="#e6873a"/>
<text x="405.0" y="585.0" font-size="9.52" fill="#141c0c" text-anchor="end" textLength="16.07" lengthAdjust="spacingAndGlyphs">MH1</text>
<rect x="647.1" y="573.5" width="11.0" height="23.0" fill="none" stroke="#6b9eb4" stroke-width="1"/>
<rect x="647.6" y="574.0" width="10.0" height="22.0" fill="#243c00" stroke="none" stroke-width="1"/>
<rect x="647.6" y="575.8" width="10.0" height="18.4" fill="#e8b890" stroke="none" stroke-width="1"/>
<rect x="647.6" y="575.8" width="9.4" height="17.8" fill="#cbc8be" stroke="none" stroke-width="1"/>
<text x="652.6" y="571.5" font-size="5.5" fill="#141c0c" text-anchor="middle">TP21</text>
<rect x="670.5" y="573.5" width="11.0" height="23.0" fill="none" stroke="#6b9eb4" stroke-width="1"/>
<rect x="671.0" y="574.0" width="10.0" height="22.0" fill="#243c00" stroke="none" stroke-width="1"/>
<rect x="671.0" y="575.8" width="10.0" height="18.4" fill="#e8b890" stroke="none" stroke-width="1"/>
<rect x="671.0" y="575.8" width="9.4" height="17.8" fill="#cbc8be" stroke="none" stroke-width="1"/>
<text x="676.0" y="571.5" font-size="5.5" fill="#141c0c" text-anchor="middle">TP43</text>
<rect x="685.1" y="573.5" width="11.0" height="23.0" fill="none" stroke="#6b9eb4" stroke-width="1"/>
<rect x="685.6" y="574.0" width="10.0" height="22.0" fill="#243c00" stroke="none" stroke-width="1"/>
<rect x="685.6" y="575.8" width="10.0" height="18.4" fill="#e8b890" stroke="none" stroke-width="1"/>
<rect x="685.6" y="575.8" width="9.4" height="17.8" fill="#cbc8be" stroke="none" stroke-width="1"/>
<text x="690.6" y="571.5" font-size="9.52" fill="#141c0c" text-anchor="middle" textLength="13.96" lengthAdjust="spacingAndGlyphs">TP3</text>
<text x="721.5" y="534.0" font-size="9.52" fill="#141c0c" text-anchor="middle" textLength="9.73" lengthAdjust="spacingAndGlyphs">D1</text>
<rect x="699.5" y="535.5" width="43.0" height="44.4" fill="none" stroke="#6b9eb4" stroke-width="1"/>
<circle cx="715.3" cy="543.7" r="4.8" fill="#e6873a"/>
<rect x="715.0" y="547.0" width="3.5" height="8.5" fill="#dc8c48" stroke="none" stroke-width="1"/>
<rect x="715.9" y="547.9" width="1.7" height="6.7" fill="#cbc8be" stroke="none" stroke-width="1"/>
<rect x="715.0" y="560.6" width="3.5" height="8.7" fill="#dc8c48" stroke="none" stroke-width="1"/>
<rect x="715.9" y="561.5" width="1.7" height="6.9" fill="#cbc8be" stroke="none" stroke-width="1"/>
<rect x="719.6" y="547.0" width="3.5" height="8.5" fill="#dc8c48" stroke="none" stroke-width="1"/>
<rect x="720.5" y="547.9" width="1.7" height="6.7" fill="#cbc8be" stroke="none" stroke-width="1"/>
<rect x="719.6" y="560.6" width="3.5" height="8.7" fill="#dc8c48" stroke="none" stroke-width="1"/>
<rect x="720.5" y="561.5" width="1.7" height="6.9" fill="#cbc8be" stroke="none" stroke-width="1"/>
<rect x="724.2" y="547.0" width="3.5" height="8.5" fill="#dc8c48" stroke="none" stroke-width="1"/>
<rect x="725.1" y="547.9" width="1.7" height="6.7" fill="#cbc8be" stroke="none" stroke-width="1"/>
<rect x="724.2" y="560.6" width="3.5" height="8.7" fill="#dc8c48" stroke="none" stroke-width="1"/>
<rect x="725.1" y="561.5" width="1.7" height="6.9" fill="#cbc8be" stroke="none" stroke-width="1"/>
<rect x="784.1" y="445.3" width="8.0" height="14.9" fill="none" stroke="#6b9eb4" stroke-width="1"/>
<rect x="785.1" y="446.2" width="6.0" height="6.0" fill="#dc8c48" stroke="none" stroke-width="1"/>
<rect x="786.0" y="447.1" width="4.2" height="4.2" fill="#cbc8be" stroke="none" stroke-width="1"/>
<rect x="785.1" y="453.2" width="6.0" height="6.0" fill="#dc8c48" stroke="none" stroke-width="1"/>
<rect x="786.0" y="454.1" width="4.2" height="4.2" fill="#cbc8be" stroke="none" stroke-width="1"/>
<text x="788.0" y="443.5" font-size="4.5" fill="#141c0c" text-anchor="middle">R27</text>
<rect x="809.0" y="446.9" width="11.8" height="22.9" fill="none" stroke="#6b9eb4" stroke-width="1"/>
<circle cx="814.3" cy="451.8" r="3.6" fill="#e6873a"/>
<circle cx="818.5" cy="458.5" r="2.9" fill="#e6873a"/>
<rect x="810.0" y="459.8" width="8.0" height="8.2" fill="#e6873a" stroke="none" stroke-width="1"/>
<circle cx="792.6" cy="458.5" r="3.8" fill="#e6873a"/>
<text x="808.0" y="461.5" font-size="9.52" fill="#141c0c" text-anchor="end" textLength="13.97" lengthAdjust="spacingAndGlyphs">U15</text>
<rect x="821.8" y="458.1" width="14.9" height="6.9" fill="none" stroke="#6b9eb4" stroke-width="1"/>
<rect x="823.1" y="459.1" width="5.4" height="4.9" fill="#dc8c48" stroke="none" stroke-width="1"/>
<rect x="824.0" y="460.0" width="3.6" height="3.1" fill="#cbc8be" stroke="none" stroke-width="1"/>
<rect x="830.0" y="459.1" width="5.4" height="4.9" fill="#dc8c48" stroke="none" stroke-width="1"/>
<rect x="830.9" y="460.0" width="3.6" height="3.1" fill="#cbc8be" stroke="none" stroke-width="1"/>
<text x="830.0" y="456.6" font-size="9.52" fill="#141c0c" text-anchor="middle" textLength="13.97" lengthAdjust="spacingAndGlyphs">C42</text>
<rect x="846.5" y="458.1" width="13.5" height="6.9" fill="none" stroke="#6b9eb4" stroke-width="1"/>
<rect x="847.4" y="459.1" width="5.4" height="4.9" fill="#dc8c48" stroke="none" stroke-width="1"/>
<rect x="848.3" y="460.0" width="3.6" height="3.1" fill="#cbc8be" stroke="none" stroke-width="1"/>
<rect x="853.7" y="459.1" width="5.4" height="4.9" fill="#dc8c48" stroke="none" stroke-width="1"/>
<rect x="854.6" y="460.0" width="3.6" height="3.1" fill="#cbc8be" stroke="none" stroke-width="1"/>
<text x="853.0" y="456.6" font-size="9.52" fill="#141c0c" text-anchor="middle" textLength="13.97" lengthAdjust="spacingAndGlyphs">C48</text>
<rect x="863.9" y="451.5" width="12.6" height="7.0" fill="none" stroke="#6b9eb4" stroke-width="1"/>
<rect x="864.6" y="452.5" width="5.2" height="5.0" fill="#dc8c48" stroke="none" stroke-width="1"/>
<rect x="865.5" y="453.4" width="3.4" height="3.2" fill="#cbc8be" stroke="none" stroke-width="1"/>
<rect x="870.6" y="452.5" width="5.2" height="5.0" fill="#dc8c48" stroke="none" stroke-width="1"/>
<rect x="871.5" y="453.4" width="3.4" height="3.2" fill="#cbc8be" stroke="none" stroke-width="1"/>
<text x="888.0" y="457.6" font-size="9.52" fill="#141c0c" text-anchor="start" textLength="13.97" lengthAdjust="spacingAndGlyphs" transform="rotate(-90 888 457.6)">U18</text>
<rect x="871.3" y="459.5" width="24.5" height="36.8" fill="none" stroke="#6b9eb4" stroke-width="1"/>
<rect x="873.3" y="461.0" width="20.5" height="8.5" fill="#dc8c48" stroke="none" stroke-width="1"/>
<rect x="873.9" y="461.8" width="1.4" height="6.9" fill="#cbc8be" stroke="none" stroke-width="1"/>
<rect x="876.4" y="461.8" width="1.4" height="6.9" fill="#cbc8be" stroke="none" stroke-width="1"/>
<rect x="879.0" y="461.8" width="1.4" height="6.9" fill="#cbc8be" stroke="none" stroke-width="1"/>
<rect x="881.6" y="461.8" width="1.4" height="6.9" fill="#cbc8be" stroke="none" stroke-width="1"/>
<rect x="884.1" y="461.8" width="1.4" height="6.9" fill="#cbc8be" stroke="none" stroke-width="1"/>
<rect x="886.7" y="461.8" width="1.4" height="6.9" fill="#cbc8be" stroke="none" stroke-width="1"/>
<rect x="889.2" y="461.8" width="1.4" height="6.9" fill="#cbc8be" stroke="none" stroke-width="1"/>
<rect x="891.8" y="461.8" width="1.4" height="6.9" fill="#cbc8be" stroke="none" stroke-width="1"/>
<rect x="873.3" y="486.3" width="20.5" height="8.5" fill="#dc8c48" stroke="none" stroke-width="1"/>
<rect x="873.9" y="487.1" width="1.4" height="6.9" fill="#cbc8be" stroke="none" stroke-width="1"/>
<rect x="876.4" y="487.1" width="1.4" height="6.9" fill="#cbc8be" stroke="none" stroke-width="1"/>
<rect x="879.0" y="487.1" width="1.4" height="6.9" fill="#cbc8be" stroke="none" stroke-width="1"/>
<rect x="881.6" y="487.1" width="1.4" height="6.9" fill="#cbc8be" stroke="none" stroke-width="1"/>
<rect x="884.1" y="487.1" width="1.4" height="6.9" fill="#cbc8be" stroke="none" stroke-width="1"/>
<rect x="886.7" y="487.1" width="1.4" height="6.9" fill="#cbc8be" stroke="none" stroke-width="1"/>
<rect x="889.2" y="487.1" width="1.4" height="6.9" fill="#cbc8be" stroke="none" stroke-width="1"/>
<rect x="891.8" y="487.1" width="1.4" height="6.9" fill="#cbc8be" stroke="none" stroke-width="1"/>
<rect x="900.0" y="482.0" width="7.0" height="12.5" fill="none" stroke="#6b9eb4" stroke-width="1"/>
<rect x="901.0" y="482.7" width="5.0" height="5.1" fill="#dc8c48" stroke="none" stroke-width="1"/>
<rect x="901.9" y="483.6" width="3.2" height="3.3" fill="#cbc8be" stroke="none" stroke-width="1"/>
<rect x="901.0" y="488.7" width="5.0" height="5.1" fill="#dc8c48" stroke="none" stroke-width="1"/>
<rect x="901.9" y="489.6" width="3.2" height="3.3" fill="#cbc8be" stroke="none" stroke-width="1"/>
<text x="903.5" y="480.0" font-size="4.5" fill="#141c0c" text-anchor="middle">C46</text>
<rect x="774.5" y="473.4" width="22.4" height="10.8" fill="none" stroke="#6b9eb4" stroke-width="1"/>
<rect x="775.0" y="473.9" width="21.4" height="9.8" fill="#243c00" stroke="none" stroke-width="1"/>
<rect x="776.8" y="473.9" width="17.8" height="9.8" fill="#e8b890" stroke="none" stroke-width="1"/>
<rect x="776.8" y="473.9" width="17.2" height="9.2" fill="#cbc8be" stroke="none" stroke-width="1"/>
<text x="785.5" y="471.5" font-size="9.52" fill="#141c0c" text-anchor="middle" textLength="18.20" lengthAdjust="spacingAndGlyphs">TP28</text>
<rect x="825.0" y="467.5" width="10.2" height="20.0" fill="none" stroke="#6b9eb4" stroke-width="1"/>
<rect x="826.0" y="468.5" width="8.0" height="4.5" fill="#dc8c48" stroke="none" stroke-width="1"/>
<rect x="826.4" y="469.3" width="1.1" height="2.9" fill="#cbc8be" stroke="none" stroke-width="1"/>
<rect x="828.4" y="469.3" width="1.1" height="2.9" fill="#cbc8be" stroke="none" stroke-width="1"/>
<rect x="830.4" y="469.3" width="1.1" height="2.9" fill="#cbc8be" stroke="none" stroke-width="1"/>
<rect x="832.4" y="469.3" width="1.1" height="2.9" fill="#cbc8be" stroke="none" stroke-width="1"/>
<rect x="826.0" y="482.0" width="8.0" height="4.5" fill="#dc8c48" stroke="none" stroke-width="1"/>
<rect x="826.4" y="482.8" width="1.1" height="2.9" fill="#cbc8be" stroke="none" stroke-width="1"/>
<rect x="828.4" y="482.8" width="1.1" height="2.9" fill="#cbc8be" stroke="none" stroke-width="1"/>
<rect x="830.4" y="482.8" width="1.1" height="2.9" fill="#cbc8be" stroke="none" stroke-width="1"/>
<rect x="832.4" y="482.8" width="1.1" height="2.9" fill="#cbc8be" stroke="none" stroke-width="1"/>
<text x="824.0" y="482.0" font-size="9.52" fill="#141c0c" text-anchor="end" textLength="13.97" lengthAdjust="spacingAndGlyphs">U19</text>
<rect x="848.9" y="467.5" width="10.2" height="20.0" fill="none" stroke="#6b9eb4" stroke-width="1"/>
<rect x="850.0" y="468.5" width="8.0" height="4.5" fill="#dc8c48" stroke="none" stroke-width="1"/>
<rect x="850.4" y="469.3" width="1.1" height="2.9" fill="#cbc8be" stroke="none" stroke-width="1"/>
<rect x="852.4" y="469.3" width="1.1" height="2.9" fill="#cbc8be" stroke="none" stroke-width="1"/>
<rect x="854.4" y="469.3" width="1.1" height="2.9" fill="#cbc8be" stroke="none" stroke-width="1"/>
<rect x="856.4" y="469.3" width="1.1" height="2.9" fill="#cbc8be" stroke="none" stroke-width="1"/>
<rect x="850.0" y="482.0" width="8.0" height="4.5" fill="#dc8c48" stroke="none" stroke-width="1"/>
<rect x="850.4" y="482.8" width="1.1" height="2.9" fill="#cbc8be" stroke="none" stroke-width="1"/>
<rect x="852.4" y="482.8" width="1.1" height="2.9" fill="#cbc8be" stroke="none" stroke-width="1"/>
<rect x="854.4" y="482.8" width="1.1" height="2.9" fill="#cbc8be" stroke="none" stroke-width="1"/>
<rect x="856.4" y="482.8" width="1.1" height="2.9" fill="#cbc8be" stroke="none" stroke-width="1"/>
<text x="847.5" y="484.7" font-size="9.52" fill="#141c0c" text-anchor="start" textLength="13.97" lengthAdjust="spacingAndGlyphs" transform="rotate(-90 847.5 484.7)">U20</text>
<rect x="821.8" y="490.0" width="14.3" height="7.5" fill="none" stroke="#6b9eb4" stroke-width="1"/>
<rect x="822.7" y="491.0" width="5.8" height="5.5" fill="#dc8c48" stroke="none" stroke-width="1"/>
<rect x="823.6" y="491.9" width="4.0" height="3.7" fill="#cbc8be" stroke="none" stroke-width="1"/>
<rect x="829.4" y="491.0" width="5.8" height="5.5" fill="#dc8c48" stroke="none" stroke-width="1"/>
<rect x="830.3" y="491.9" width="4.0" height="3.7" fill="#cbc8be" stroke="none" stroke-width="1"/>
<text x="820.5" y="497.0" font-size="9.52" fill="#141c0c" text-anchor="end" textLength="13.97" lengthAdjust="spacingAndGlyphs">C45</text>
<rect x="846.5" y="490.0" width="13.5" height="7.5" fill="none" stroke="#6b9eb4" stroke-width="1"/>
<rect x="847.3" y="491.0" width="5.5" height="5.5" fill="#dc8c48" stroke="none" stroke-width="1"/>
<rect x="848.2" y="491.9" width="3.7" height="3.7" fill="#cbc8be" stroke="none" stroke-width="1"/>
<rect x="853.7" y="491.0" width="5.5" height="5.5" fill="#dc8c48" stroke="none" stroke-width="1"/>
<rect x="854.6" y="491.9" width="3.7" height="3.7" fill="#cbc8be" stroke="none" stroke-width="1"/>
<text x="853.0" y="507.0" font-size="9.52" fill="#141c0c" text-anchor="middle" textLength="13.97" lengthAdjust="spacingAndGlyphs">C49</text>
<rect x="866.5" y="501.1" width="15.0" height="8.0" fill="none" stroke="#6b9eb4" stroke-width="1"/>
<rect x="867.4" y="502.1" width="6.1" height="6.0" fill="#dc8c48" stroke="none" stroke-width="1"/>
<rect x="868.3" y="503.0" width="4.3" height="4.2" fill="#cbc8be" stroke="none" stroke-width="1"/>
<rect x="874.5" y="502.1" width="6.1" height="6.0" fill="#dc8c48" stroke="none" stroke-width="1"/>
<rect x="875.4" y="503.0" width="4.3" height="4.2" fill="#cbc8be" stroke="none" stroke-width="1"/>
<text x="866.0" y="509.0" font-size="4.5" fill="#141c0c" text-anchor="start" transform="rotate(-90 866 509)">C43</text>
<rect x="884.0" y="501.5" width="14.0" height="7.6" fill="none" stroke="#6b9eb4" stroke-width="1"/>
<rect x="884.9" y="502.5" width="5.7" height="5.6" fill="#dc8c48" stroke="none" stroke-width="1"/>
<rect x="885.8" y="503.4" width="3.9" height="3.8" fill="#cbc8be" stroke="none" stroke-width="1"/>
<rect x="891.4" y="502.5" width="5.7" height="5.6" fill="#dc8c48" stroke="none" stroke-width="1"/>
<rect x="892.3" y="503.4" width="3.9" height="3.8" fill="#cbc8be" stroke="none" stroke-width="1"/>
<text x="900.0" y="509.6" font-size="9.52" fill="#141c0c" text-anchor="start" textLength="13.97" lengthAdjust="spacingAndGlyphs">C47</text>
<rect x="875.5" y="510.5" width="14.0" height="8.0" fill="none" stroke="#6b9eb4" stroke-width="1"/>
<rect x="876.4" y="511.5" width="5.7" height="6.0" fill="#dc8c48" stroke="none" stroke-width="1"/>
<rect x="877.2" y="512.4" width="3.9" height="4.2" fill="#cbc8be" stroke="none" stroke-width="1"/>
<rect x="882.9" y="511.5" width="5.7" height="6.0" fill="#dc8c48" stroke="none" stroke-width="1"/>
<rect x="883.8" y="512.4" width="3.9" height="4.2" fill="#cbc8be" stroke="none" stroke-width="1"/>
<text x="874.5" y="518.0" font-size="9.52" fill="#141c0c" text-anchor="end" textLength="13.97" lengthAdjust="spacingAndGlyphs">C44</text>
<rect x="932.9" y="446.2" width="11.6" height="22.7" fill="none" stroke="#6b9eb4" stroke-width="1"/>
<rect x="933.4" y="446.7" width="10.6" height="21.7" fill="#243c00" stroke="none" stroke-width="1"/>
<rect x="933.4" y="448.5" width="10.6" height="18.1" fill="#e8b890" stroke="none" stroke-width="1"/>
<rect x="933.4" y="448.5" width="10.0" height="17.5" fill="#cbc8be" stroke="none" stroke-width="1"/>
<text x="931.5" y="463.0" font-size="9.52" fill="#141c0c" text-anchor="end" textLength="13.96" lengthAdjust="spacingAndGlyphs">TP9</text>
<rect x="939.2" y="469.9" width="21.3" height="11.6" fill="none" stroke="#6b9eb4" stroke-width="1"/>
<rect x="939.7" y="470.4" width="20.3" height="10.6" fill="#243c00" stroke="none" stroke-width="1"/>
<rect x="941.5" y="470.4" width="16.7" height="10.6" fill="#e8b890" stroke="none" stroke-width="1"/>
<rect x="941.5" y="470.4" width="16.1" height="10.0" fill="#cbc8be" stroke="none" stroke-width="1"/>
<text x="937.8" y="480.0" font-size="9.52" fill="#141c0c" text-anchor="end" textLength="18.20" lengthAdjust="spacingAndGlyphs">TP13</text>
<rect x="939.2" y="484.5" width="21.3" height="11.8" fill="none" stroke="#6b9eb4" stroke-width="1"/>
<rect x="939.7" y="485.0" width="20.3" height="10.8" fill="#243c00" stroke="none" stroke-width="1"/>
<rect x="941.5" y="485.0" width="16.7" height="10.8" fill="#e8b890" stroke="none" stroke-width="1"/>
<rect x="941.5" y="485.0" width="16.1" height="10.2" fill="#cbc8be" stroke="none" stroke-width="1"/>
<text x="937.8" y="494.0" font-size="9.52" fill="#141c0c" text-anchor="end" textLength="18.20" lengthAdjust="spacingAndGlyphs">TP12</text>
<rect x="964.5" y="463.5" width="34.4" height="28.7" fill="none" stroke="#6b9eb4" stroke-width="1"/>
<rect x="966.0" y="465.0" width="5.5" height="5.5" fill="#dc8c48" stroke="none" stroke-width="1"/>
<rect x="966.9" y="465.9" width="3.7" height="3.7" fill="#cbc8be" stroke="none" stroke-width="1"/>
<rect x="974.5" y="465.0" width="5.5" height="5.5" fill="#dc8c48" stroke="none" stroke-width="1"/>
<rect x="975.4" y="465.9" width="3.7" height="3.7" fill="#cbc8be" stroke="none" stroke-width="1"/>
<rect x="983.0" y="465.0" width="5.5" height="5.5" fill="#dc8c48" stroke="none" stroke-width="1"/>
<rect x="983.9" y="465.9" width="3.7" height="3.7" fill="#cbc8be" stroke="none" stroke-width="1"/>
<rect x="991.5" y="465.0" width="5.5" height="5.5" fill="#dc8c48" stroke="none" stroke-width="1"/>
<rect x="992.4" y="465.9" width="3.7" height="3.7" fill="#cbc8be" stroke="none" stroke-width="1"/>
<rect x="966.0" y="474.5" width="5.5" height="5.5" fill="#dc8c48" stroke="none" stroke-width="1"/>
<rect x="966.9" y="475.4" width="3.7" height="3.7" fill="#cbc8be" stroke="none" stroke-width="1"/>
<rect x="974.5" y="474.5" width="5.5" height="5.5" fill="#dc8c48" stroke="none" stroke-width="1"/>
<rect x="975.4" y="475.4" width="3.7" height="3.7" fill="#cbc8be" stroke="none" stroke-width="1"/>
<rect x="983.0" y="474.5" width="5.5" height="5.5" fill="#dc8c48" stroke="none" stroke-width="1"/>
<rect x="983.9" y="475.4" width="3.7" height="3.7" fill="#cbc8be" stroke="none" stroke-width="1"/>
<rect x="991.5" y="474.5" width="5.5" height="5.5" fill="#dc8c48" stroke="none" stroke-width="1"/>
<rect x="992.4" y="475.4" width="3.7" height="3.7" fill="#cbc8be" stroke="none" stroke-width="1"/>
<rect x="966.0" y="484.0" width="5.5" height="5.5" fill="#dc8c48" stroke="none" stroke-width="1"/>
<rect x="966.9" y="484.9" width="3.7" height="3.7" fill="#cbc8be" stroke="none" stroke-width="1"/>
<rect x="974.5" y="484.0" width="5.5" height="5.5" fill="#dc8c48" stroke="none" stroke-width="1"/>
<rect x="975.4" y="484.9" width="3.7" height="3.7" fill="#cbc8be" stroke="none" stroke-width="1"/>
<rect x="983.0" y="484.0" width="5.5" height="5.5" fill="#dc8c48" stroke="none" stroke-width="1"/>
<rect x="983.9" y="484.9" width="3.7" height="3.7" fill="#cbc8be" stroke="none" stroke-width="1"/>
<rect x="991.5" y="484.0" width="5.5" height="5.5" fill="#dc8c48" stroke="none" stroke-width="1"/>
<rect x="992.4" y="484.9" width="3.7" height="3.7" fill="#cbc8be" stroke="none" stroke-width="1"/>
<text x="982.0" y="462.0" font-size="4.5" fill="#141c0c" text-anchor="middle">C14</text>
<text x="1004.0" y="459.0" font-size="9.52" fill="#141c0c" text-anchor="middle" textLength="13.97" lengthAdjust="spacingAndGlyphs">C10</text>
<rect x="997.2" y="443.0" width="13.3" height="7.5" fill="none" stroke="#6b9eb4" stroke-width="1"/>
<rect x="998.0" y="444.0" width="5.4" height="5.5" fill="#dc8c48" stroke="none" stroke-width="1"/>
<rect x="998.9" y="444.9" width="3.6" height="3.7" fill="#cbc8be" stroke="none" stroke-width="1"/>
<rect x="1004.3" y="444.0" width="5.4" height="5.5" fill="#dc8c48" stroke="none" stroke-width="1"/>
<rect x="1005.2" y="444.9" width="3.6" height="3.7" fill="#cbc8be" stroke="none" stroke-width="1"/>
<text x="1021.5" y="462.3" font-size="9.52" fill="#141c0c" text-anchor="middle" textLength="13.97" lengthAdjust="spacingAndGlyphs">C13</text>
<rect x="1015.0" y="445.1" width="13.2" height="8.2" fill="none" stroke="#6b9eb4" stroke-width="1"/>
<rect x="1015.8" y="446.1" width="5.4" height="6.2" fill="#dc8c48" stroke="none" stroke-width="1"/>
<rect x="1016.7" y="447.0" width="3.6" height="4.4" fill="#cbc8be" stroke="none" stroke-width="1"/>
<rect x="1022.0" y="446.1" width="5.4" height="6.2" fill="#dc8c48" stroke="none" stroke-width="1"/>
<rect x="1022.9" y="447.0" width="3.6" height="4.4" fill="#cbc8be" stroke="none" stroke-width="1"/>
<rect x="1006.9" y="482.0" width="23.0" height="11.1" fill="none" stroke="#6b9eb4" stroke-width="1"/>
<rect x="1007.4" y="482.5" width="22.0" height="10.1" fill="#243c00" stroke="none" stroke-width="1"/>
<rect x="1009.2" y="482.5" width="18.4" height="10.1" fill="#e8b890" stroke="none" stroke-width="1"/>
<rect x="1009.2" y="482.5" width="17.8" height="9.5" fill="#cbc8be" stroke="none" stroke-width="1"/>
<text x="1018.5" y="481.0" font-size="9.52" fill="#141c0c" text-anchor="middle" textLength="18.20" lengthAdjust="spacingAndGlyphs">TP20</text>
<rect x="971.2" y="496.5" width="38.3" height="31.7" fill="none" stroke="#6b9eb4" stroke-width="1"/>
<text x="970.0" y="516.6" font-size="9.52" fill="#141c0c" text-anchor="end" textLength="9.73" lengthAdjust="spacingAndGlyphs">U5</text>
<rect x="984.0" y="499.0" width="12.0" height="8.0" fill="#dc8c48" stroke="none" stroke-width="1"/>
<rect x="984.5" y="499.8" width="1.3" height="6.4" fill="#cbc8be" stroke="none" stroke-width="1"/>
<rect x="986.9" y="499.8" width="1.3" height="6.4" fill="#cbc8be" stroke="none" stroke-width="1"/>
<rect x="989.3" y="499.8" width="1.3" height="6.4" fill="#cbc8be" stroke="none" stroke-width="1"/>
<rect x="991.7" y="499.8" width="1.3" height="6.4" fill="#cbc8be" stroke="none" stroke-width="1"/>
<rect x="994.1" y="499.8" width="1.3" height="6.4" fill="#cbc8be" stroke="none" stroke-width="1"/>
<rect x="984.0" y="518.5" width="12.0" height="8.0" fill="#dc8c48" stroke="none" stroke-width="1"/>
<rect x="984.5" y="519.3" width="1.3" height="6.4" fill="#cbc8be" stroke="none" stroke-width="1"/>
<rect x="986.9" y="519.3" width="1.3" height="6.4" fill="#cbc8be" stroke="none" stroke-width="1"/>
<rect x="989.3" y="519.3" width="1.3" height="6.4" fill="#cbc8be" stroke="none" stroke-width="1"/>
<rect x="991.7" y="519.3" width="1.3" height="6.4" fill="#cbc8be" stroke="none" stroke-width="1"/>
<rect x="994.1" y="519.3" width="1.3" height="6.4" fill="#cbc8be" stroke="none" stroke-width="1"/>
<rect x="801.0" y="519.5" width="212.1" height="77.8" fill="none" stroke="#6b9eb4" stroke-width="1"/>
<text x="906.5" y="563.0" font-size="9.52" fill="#141c0c" text-anchor="middle" textLength="13.55" lengthAdjust="spacingAndGlyphs">LS1</text>
<circle cx="811.7" cy="527.8" r="5.7" fill="#e6873a"/>
<circle cx="955.3" cy="527.8" r="5.7" fill="#e6873a"/>
<circle cx="811.7" cy="588.4" r="5.7" fill="#e6873a"/>
<circle cx="955.3" cy="588.4" r="5.7" fill="#e6873a"/>
<circle cx="1001.6" cy="549.2" r="3.8" fill="#e6873a"/>
<circle cx="1001.6" cy="567.7" r="3.8" fill="#e6873a"/>
<circle cx="1025.6" cy="543.7" r="3.8" fill="#e6873a"/>
<rect x="982.0" y="533.5" width="12.5" height="8.0" fill="none" stroke="#6b9eb4" stroke-width="1"/>
<rect x="982.7" y="534.5" width="5.1" height="6.0" fill="#dc8c48" stroke="none" stroke-width="1"/>
<rect x="983.6" y="535.4" width="3.3" height="4.2" fill="#cbc8be" stroke="none" stroke-width="1"/>
<rect x="988.7" y="534.5" width="5.1" height="6.0" fill="#dc8c48" stroke="none" stroke-width="1"/>
<rect x="989.6" y="535.4" width="3.3" height="4.2" fill="#cbc8be" stroke="none" stroke-width="1"/>
<rect x="974" y="575.6" width="23.5" height="12.8" fill="#cbc8be" stroke="#6b9eb4" stroke-width="1"/>
<text x="985.7" y="585.5" font-size="9.52" fill="#141c0c" text-anchor="middle" textLength="13.96" lengthAdjust="spacingAndGlyphs">TP8</text>
<rect x="1016.5" y="573.0" width="16.5" height="16.5" fill="none" stroke="#6b9eb4" stroke-width="1"/>
<circle cx="1025.0" cy="581.3" r="8.3" fill="#e6873a"/>
<text x="1025.0" y="598.5" font-size="9.52" fill="#141c0c" text-anchor="middle" textLength="16.07" lengthAdjust="spacingAndGlyphs">MH2</text>
<rect x="1020.5" y="557.8" width="7.6" height="8" fill="none" stroke="#6b9eb4" stroke-opacity="0.55" stroke-width="0.8"/>
<path d="M1020.5 561.6 H1028.3 M1024.4 558 V565.5" stroke="#d8722a" stroke-width="1.1"/>
<text x="1024.4" y="556.5" font-size="4" fill="#141c0c" text-anchor="middle">FM2</text>
<rect x="754.5" y="521.5" width="8.0" height="14.4" fill="none" stroke="#6b9eb4" stroke-width="1"/>
<rect x="755.5" y="522.4" width="6.0" height="5.9" fill="#dc8c48" stroke="none" stroke-width="1"/>
<rect x="756.4" y="523.3" width="4.2" height="4.1" fill="#cbc8be" stroke="none" stroke-width="1"/>
<rect x="755.5" y="529.2" width="6.0" height="5.9" fill="#dc8c48" stroke="none" stroke-width="1"/>
<rect x="756.4" y="530.1" width="4.2" height="4.1" fill="#cbc8be" stroke="none" stroke-width="1"/>
<text x="759.0" y="520.0" font-size="9.52" fill="#141c0c" text-anchor="middle" textLength="9.73" lengthAdjust="spacingAndGlyphs">D2</text>
<rect x="765.9" y="525.1" width="15.0" height="7.6" fill="none" stroke="#6b9eb4" stroke-width="1"/>
<rect x="766.8" y="526.1" width="6.1" height="5.6" fill="#dc8c48" stroke="none" stroke-width="1"/>
<rect x="767.7" y="527.0" width="4.3" height="3.8" fill="#cbc8be" stroke="none" stroke-width="1"/>
<rect x="773.9" y="526.1" width="6.1" height="5.6" fill="#dc8c48" stroke="none" stroke-width="1"/>
<rect x="774.8" y="527.0" width="4.3" height="3.8" fill="#cbc8be" stroke="none" stroke-width="1"/>
<text x="773.5" y="523.0" font-size="9.52" fill="#141c0c" text-anchor="middle" textLength="13.97" lengthAdjust="spacingAndGlyphs">C36</text>
<rect x="782.8" y="505.9" width="10.9" height="23.0" fill="none" stroke="#6b9eb4" stroke-width="1"/>
<rect x="783.3" y="506.4" width="9.9" height="22.0" fill="#243c00" stroke="none" stroke-width="1"/>
<rect x="783.3" y="508.2" width="9.9" height="18.4" fill="#e8b890" stroke="none" stroke-width="1"/>
<rect x="783.3" y="508.2" width="9.3" height="17.8" fill="#cbc8be" stroke="none" stroke-width="1"/>
<text x="788.2" y="519.5" font-size="5" fill="#141c0c" text-anchor="middle">TP34</text>
<text x="784.0" y="500.0" font-size="9.52" fill="#141c0c" text-anchor="end" textLength="13.97" lengthAdjust="spacingAndGlyphs">U25</text>
<rect x="785.1" y="490.0" width="9.4" height="12.7" fill="none" stroke="#6b9eb4" stroke-width="1"/>
<rect x="786.0" y="490.5" width="8.0" height="3.0" fill="#dc8c48" stroke="none" stroke-width="1"/>
<rect x="786.6" y="491.3" width="1.5" height="1.4" fill="#cbc8be" stroke="none" stroke-width="1"/>
<rect x="789.3" y="491.3" width="1.5" height="1.4" fill="#cbc8be" stroke="none" stroke-width="1"/>
<rect x="791.9" y="491.3" width="1.5" height="1.4" fill="#cbc8be" stroke="none" stroke-width="1"/>
<rect x="786.0" y="499.0" width="8.0" height="3.0" fill="#dc8c48" stroke="none" stroke-width="1"/>
<rect x="786.6" y="499.8" width="1.5" height="1.4" fill="#cbc8be" stroke="none" stroke-width="1"/>
<rect x="789.3" y="499.8" width="1.5" height="1.4" fill="#cbc8be" stroke="none" stroke-width="1"/>
<rect x="791.9" y="499.8" width="1.5" height="1.4" fill="#cbc8be" stroke="none" stroke-width="1"/>
<rect x="795.5" y="493.2" width="8.7" height="12.7" fill="none" stroke="#6b9eb4" stroke-width="1"/>
<rect x="796.5" y="493.9" width="6.7" height="5.2" fill="#dc8c48" stroke="none" stroke-width="1"/>
<rect x="797.4" y="494.8" width="4.9" height="3.4" fill="#cbc8be" stroke="none" stroke-width="1"/>
<rect x="796.5" y="500.0" width="6.7" height="5.2" fill="#dc8c48" stroke="none" stroke-width="1"/>
<rect x="797.4" y="500.9" width="4.9" height="3.4" fill="#cbc8be" stroke="none" stroke-width="1"/>
<text x="800.0" y="491.5" font-size="4.5" fill="#141c0c" text-anchor="middle">R35</text>
<rect x="765.3" y="535.5" width="17.8" height="17.3" fill="none" stroke="#6b9eb4" stroke-width="1"/>
<circle cx="774.0" cy="544.4" r="3.6" fill="#e6873a"/>
<rect x="768.0" y="536.5" width="12.0" height="3.0" fill="#dc8c48" stroke="none" stroke-width="1"/>
<rect x="768.7" y="537.3" width="1.7" height="1.4" fill="#cbc8be" stroke="none" stroke-width="1"/>
<rect x="771.7" y="537.3" width="1.7" height="1.4" fill="#cbc8be" stroke="none" stroke-width="1"/>
<rect x="774.7" y="537.3" width="1.7" height="1.4" fill="#cbc8be" stroke="none" stroke-width="1"/>
<rect x="777.7" y="537.3" width="1.7" height="1.4" fill="#cbc8be" stroke="none" stroke-width="1"/>
<rect x="768.0" y="549.0" width="12.0" height="3.0" fill="#dc8c48" stroke="none" stroke-width="1"/>
<rect x="768.7" y="549.8" width="1.7" height="1.4" fill="#cbc8be" stroke="none" stroke-width="1"/>
<rect x="771.7" y="549.8" width="1.7" height="1.4" fill="#cbc8be" stroke="none" stroke-width="1"/>
<rect x="774.7" y="549.8" width="1.7" height="1.4" fill="#cbc8be" stroke="none" stroke-width="1"/>
<rect x="777.7" y="549.8" width="1.7" height="1.4" fill="#cbc8be" stroke="none" stroke-width="1"/>
<rect x="765.8" y="541.0" width="3.2" height="1.4" fill="#cbc8be" stroke="none" stroke-width="1"/>
<rect x="779.4" y="541.0" width="3.2" height="1.4" fill="#cbc8be" stroke="none" stroke-width="1"/>
<rect x="765.8" y="543.6" width="3.2" height="1.4" fill="#cbc8be" stroke="none" stroke-width="1"/>
<rect x="779.4" y="543.6" width="3.2" height="1.4" fill="#cbc8be" stroke="none" stroke-width="1"/>
<rect x="765.8" y="546.2" width="3.2" height="1.4" fill="#cbc8be" stroke="none" stroke-width="1"/>
<rect x="779.4" y="546.2" width="3.2" height="1.4" fill="#cbc8be" stroke="none" stroke-width="1"/>
<text x="763.5" y="548.0" font-size="9.52" fill="#141c0c" text-anchor="end" textLength="13.97" lengthAdjust="spacingAndGlyphs">U14</text>
<rect x="784.1" y="531.5" width="13.7" height="7.5" fill="none" stroke="#6b9eb4" stroke-width="1"/>
<rect x="784.9" y="532.5" width="5.6" height="5.5" fill="#dc8c48" stroke="none" stroke-width="1"/>
<rect x="785.8" y="533.4" width="3.8" height="3.7" fill="#cbc8be" stroke="none" stroke-width="1"/>
<rect x="791.4" y="532.5" width="5.6" height="5.5" fill="#dc8c48" stroke="none" stroke-width="1"/>
<rect x="792.3" y="533.4" width="3.8" height="3.7" fill="#cbc8be" stroke="none" stroke-width="1"/>
<rect x="784.1" y="540.0" width="13.7" height="7.5" fill="none" stroke="#6b9eb4" stroke-width="1"/>
<rect x="784.9" y="541.0" width="5.6" height="5.5" fill="#dc8c48" stroke="none" stroke-width="1"/>
<rect x="785.8" y="541.9" width="3.8" height="3.7" fill="#cbc8be" stroke="none" stroke-width="1"/>
<rect x="791.4" y="541.0" width="5.6" height="5.5" fill="#dc8c48" stroke="none" stroke-width="1"/>
<rect x="792.3" y="541.9" width="3.8" height="3.7" fill="#cbc8be" stroke="none" stroke-width="1"/>
<text x="791.0" y="557.0" font-size="9.52" fill="#141c0c" text-anchor="middle" textLength="13.97" lengthAdjust="spacingAndGlyphs">R21</text>
<text x="765.0" y="566.0" font-size="9.52" fill="#141c0c" text-anchor="end" textLength="13.97" lengthAdjust="spacingAndGlyphs">R14</text>
<rect x="766.9" y="553.8" width="7.6" height="15.0" fill="none" stroke="#6b9eb4" stroke-width="1"/>
<rect x="767.9" y="554.7" width="5.6" height="6.1" fill="#dc8c48" stroke="none" stroke-width="1"/>
<rect x="768.8" y="555.6" width="3.8" height="4.3" fill="#cbc8be" stroke="none" stroke-width="1"/>
<rect x="767.9" y="561.8" width="5.6" height="6.1" fill="#dc8c48" stroke="none" stroke-width="1"/>
<rect x="768.8" y="562.7" width="3.8" height="4.3" fill="#cbc8be" stroke="none" stroke-width="1"/>
<rect x="775.5" y="553.8" width="7.6" height="15.0" fill="none" stroke="#6b9eb4" stroke-width="1"/>
<rect x="776.5" y="554.7" width="5.6" height="6.1" fill="#dc8c48" stroke="none" stroke-width="1"/>
<rect x="777.4" y="555.6" width="3.8" height="4.3" fill="#cbc8be" stroke="none" stroke-width="1"/>
<rect x="776.5" y="561.8" width="5.6" height="6.1" fill="#dc8c48" stroke="none" stroke-width="1"/>
<rect x="777.4" y="562.7" width="3.8" height="4.3" fill="#cbc8be" stroke="none" stroke-width="1"/>
<text x="779.0" y="573.0" font-size="4.5" fill="#141c0c" text-anchor="middle">R15</text>
<rect x="746.8" y="573.9" width="11.7" height="22.0" fill="none" stroke="#6b9eb4" stroke-width="1"/>
<rect x="747.3" y="574.4" width="10.7" height="21.0" fill="#243c00" stroke="none" stroke-width="1"/>
<rect x="747.3" y="576.2" width="10.7" height="17.4" fill="#e8b890" stroke="none" stroke-width="1"/>
<rect x="747.3" y="576.2" width="10.1" height="16.8" fill="#cbc8be" stroke="none" stroke-width="1"/>
<text x="752.5" y="572.0" font-size="5.5" fill="#141c0c" text-anchor="middle">TP22</text>
<rect x="760.5" y="577.5" width="7.6" height="14.6" fill="none" stroke="#6b9eb4" stroke-width="1"/>
<rect x="761.5" y="578.4" width="5.6" height="5.9" fill="#dc8c48" stroke="none" stroke-width="1"/>
<rect x="762.4" y="579.3" width="3.8" height="4.1" fill="#cbc8be" stroke="none" stroke-width="1"/>
<rect x="761.5" y="585.3" width="5.6" height="5.9" fill="#dc8c48" stroke="none" stroke-width="1"/>
<rect x="762.4" y="586.2" width="3.8" height="4.1" fill="#cbc8be" stroke="none" stroke-width="1"/>
<text x="764.3" y="575.5" font-size="4.5" fill="#141c0c" text-anchor="middle">R31</text></svg>
</body></html>
